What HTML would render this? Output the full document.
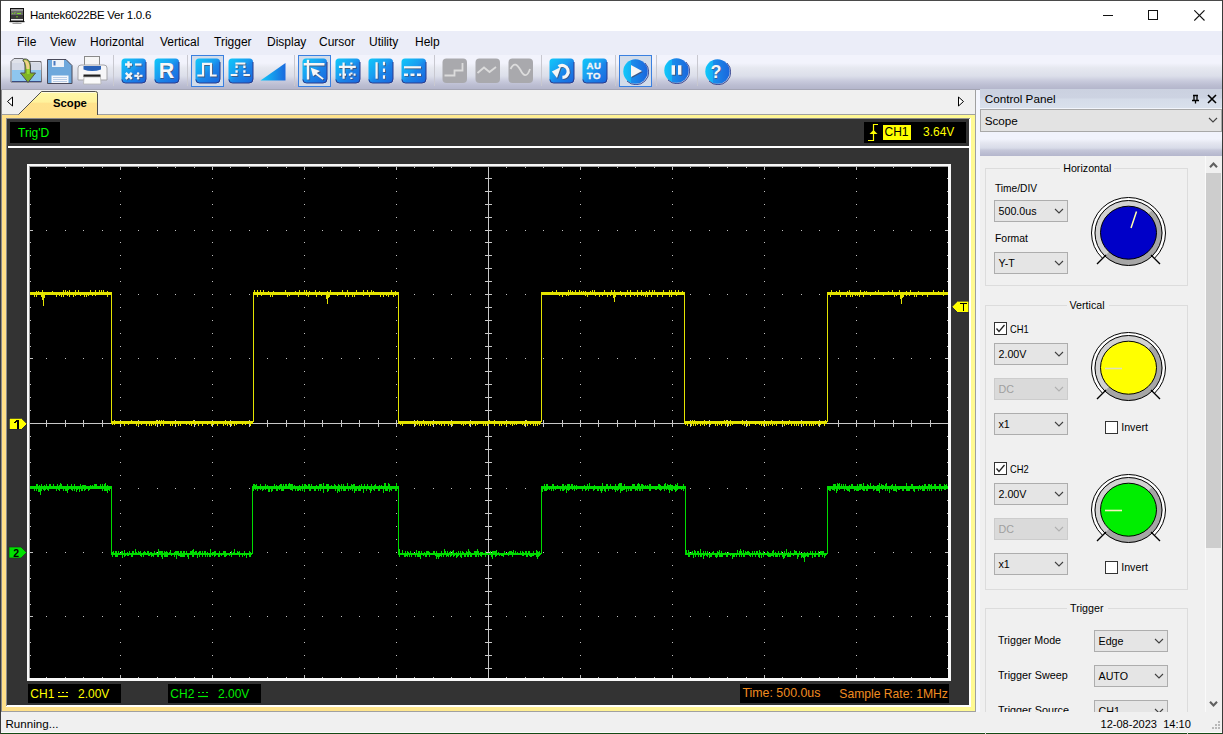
<!DOCTYPE html>
<html><head><meta charset="utf-8"><style>
html,body{margin:0;padding:0}
body{width:1223px;height:734px;position:relative;overflow:hidden;background:#f0f0f0;font-family:"Liberation Sans",sans-serif}
.t{position:absolute;white-space:pre}
svg{display:block}
</style></head><body>
<div style="position:absolute;left:0px;top:0px;width:1223px;height:31px;background:#fff;"></div>
<div style="position:absolute;left:0px;top:31px;width:1223px;height:24px;background:#ebedf8;"></div>
<div style="position:absolute;left:0px;top:55px;width:1223px;height:34px;background:linear-gradient(#f2f3fc 0px,#f2f3fc 8px,#e6e8f0 13px,#dcdfea 21px,#c8cadc 26px,#bcbed2 30px,#b4b6cc 34px);"></div>
<div style="position:absolute;left:0px;top:89px;width:1223px;height:1px;background:#a4a5b4;"></div>
<div style="position:absolute;left:0px;top:90px;width:1223px;height:622px;background:#f0f0f0;"></div>
<div style="position:absolute;left:0px;top:712px;width:1223px;height:21px;background:#f0f0f0;"></div>
<div style="position:absolute;left:0px;top:732px;width:1223px;height:1px;background:#fbfbfb;"></div>
<div style="position:absolute;left:0px;top:733px;width:1223px;height:1px;background:#154a15;"></div>
<svg style="position:absolute;left:9px;top:7px;" width="16" height="17" viewBox="0 0 16 17">
<rect x="1" y="1" width="14" height="13" fill="#111"/>
<rect x="2" y="2" width="12" height="2" fill="#9a9a9a"/>
<rect x="2" y="4" width="12" height="4" fill="#6a6a6a"/>
<rect x="2" y="8" width="12" height="4" fill="#3a3a3a"/>
<rect x="2" y="12" width="12" height="1.5" fill="#e8e8e8"/>
<path d="M3 6.5 H4 M5 6.5 L6.5 5.5 M8 6.5 H12" stroke="#7ce020" stroke-width="1"/><rect x="7.5" y="9" width="1" height="1.5" fill="#7ce020"/>
<rect x="0.5" y="14" width="15" height="1.2" fill="#111"/>
<rect x="6.5" y="15" width="3" height="1" fill="#bbb"/>
<rect x="3.5" y="16" width="9" height="0.8" fill="#888"/></svg>
<div class="t" style="left:30px;top:10.27px;font-size:11.5px;line-height:11.5px;color:#000;font-weight:400;letter-spacing:-0.25px">Hantek6022BE Ver 1.0.6</div>
<div style="position:absolute;left:1103px;top:15px;width:10px;height:1px;background:#111;"></div>
<div style="position:absolute;left:1148px;top:10px;width:8px;height:8px;border:1px solid #111"></div>
<svg style="position:absolute;left:1194px;top:10px;" width="11" height="11" viewBox="0 0 11 11"><path d="M0.3 0.3 L10.5 10.5 M10.5 0.3 L0.3 10.5" stroke="#111" stroke-width="1.1"/></svg>
<div class="t" style="left:17px;top:36.34px;font-size:12px;line-height:12px;color:#000;font-weight:400;">File</div>
<div class="t" style="left:50px;top:36.34px;font-size:12px;line-height:12px;color:#000;font-weight:400;">View</div>
<div class="t" style="left:90px;top:36.34px;font-size:12px;line-height:12px;color:#000;font-weight:400;">Horizontal</div>
<div class="t" style="left:160px;top:36.34px;font-size:12px;line-height:12px;color:#000;font-weight:400;">Vertical</div>
<div class="t" style="left:214px;top:36.34px;font-size:12px;line-height:12px;color:#000;font-weight:400;">Trigger</div>
<div class="t" style="left:267px;top:36.34px;font-size:12px;line-height:12px;color:#000;font-weight:400;">Display</div>
<div class="t" style="left:319px;top:36.34px;font-size:12px;line-height:12px;color:#000;font-weight:400;">Cursor</div>
<div class="t" style="left:369px;top:36.34px;font-size:12px;line-height:12px;color:#000;font-weight:400;">Utility</div>
<div class="t" style="left:415px;top:36.34px;font-size:12px;line-height:12px;color:#000;font-weight:400;">Help</div>
<svg width="0" height="0" style="position:absolute"><defs>
<linearGradient id="bl" x1="0" y1="0" x2="1" y2="1">
<stop offset="0" stop-color="#10c8fa"/><stop offset="0.45" stop-color="#1a9cf0"/><stop offset="0.55" stop-color="#1b86ea"/><stop offset="1" stop-color="#1a66dc"/></linearGradient>
<linearGradient id="blc" x1="0" y1="0" x2="1" y2="0">
<stop offset="0" stop-color="#10c8fa"/><stop offset="0.3" stop-color="#14b0f4"/><stop offset="0.32" stop-color="#1a8eec"/><stop offset="1" stop-color="#1a66dc"/></linearGradient>
<linearGradient id="tri" x1="0" y1="0" x2="1" y2="0">
<stop offset="0" stop-color="#12c8fa"/><stop offset="1" stop-color="#1a6ade"/></linearGradient>
<linearGradient id="yb" x1="0" y1="0" x2="1" y2="0">
<stop offset="0" stop-color="#ffe08a"/><stop offset="0.5" stop-color="#ffe890"/><stop offset="1" stop-color="#fffaa4"/></linearGradient>
</defs></svg>
<svg style="position:absolute;left:10px;top:57px;" width="33" height="27" viewBox="0 0 33 27">
<path d="M1 4.5 L4 1.5 L13 1.5 L15 4.5 L31 4.5 L31.5 25 L1 25 Z" fill="#dfe2ea" stroke="#6a6a70"/>
<rect x="2" y="6" width="29" height="7" fill="#d4d9e6"/>
<rect x="2" y="13" width="29" height="11.5" fill="#8ec6ee"/>
<path d="M2 24.5 H31" stroke="#3a4a80" stroke-width="1"/>
<path d="M13.5 2 Q20 1 20.5 9 L20.5 16 L25.5 16 L18 25.5 L10.5 16 L15 16 L15 9 Q15 5 13 3.5 Z" fill="#7fb424" stroke="#505050" stroke-width="1"/>
<path d="M14.5 3 Q19 3 19.5 9 L19.5 12 L16.5 12 L16 8 Q15.5 5 14 4 Z" fill="#f2d088"/>
<path d="M17 12 L19.5 12 L19.5 17 L17 17 Z" fill="#9ad830"/></svg>
<svg style="position:absolute;left:47px;top:58px;" width="26" height="27" viewBox="0 0 26 27">
<path d="M0.5 1.5 L19 1.5 L25 7.5 L25 25.5 L0.5 25.5 Z" fill="#6ea8dc" stroke="#4a4a5a"/>
<rect x="5" y="2" width="12" height="7" fill="#eef2f8"/>
<rect x="6.5" y="3" width="2" height="4.5" fill="#4a7ac0"/>
<rect x="4.5" y="17.5" width="17" height="7.5" fill="#f6f8fc"/>
<path d="M6 19.5 H20 M6 21.5 H20 M6 23.5 H20" stroke="#a8c0e0" stroke-width="0.8"/></svg>
<svg style="position:absolute;left:77px;top:55px;" width="31" height="30" viewBox="0 0 31 30">
<rect x="7.5" y="1.5" width="15" height="9" fill="#f6f6f6" stroke="#8a8a8a"/>
<path d="M1 13 Q1 10 4 10 L27 10 Q30 10 30 13 L30 25 L1 25 Z" fill="#f6f6f8" stroke="#a4a4a8"/>
<path d="M6.5 11 L24 11 L24 14.5 Q15 17.5 6.5 14.5 Z" fill="#2a62b8"/>
<rect x="6.5" y="19.5" width="17" height="2.5" fill="#1e1e1e"/>
<path d="M7 22 L23.5 22 L24 29 L6.5 29 Z" fill="#fafafa" stroke="#b4b4b4" stroke-width="0.8"/></svg>
<div style="position:absolute;left:113px;top:55px;width:1px;height:31px;background:#c8c8d0;"></div>
<svg style="position:absolute;left:121px;top:58px;" width="26" height="26" viewBox="0 0 26 26"><rect x="0.5" y="0.5" width="24.5" height="24.5" rx="3.5" fill="url(#bl)"/><path d="M1 21.5 Q1 25 4.5 25 L21 25 Q25 25 25 21 L25 4" fill="none" stroke="#2c3c8c" stroke-width="1"/><path d="M4 6.5 H11 M7.5 3.2 V9.8" transform="translate(0.9,0.9)" stroke="#4a4a66" stroke-opacity="0.75" stroke-width="2.4" fill="none" stroke-linecap="butt"/><path d="M4 6.5 H11 M7.5 3.2 V9.8" stroke="#f6f6f6" stroke-width="2.4" fill="none" stroke-linecap="butt"/><path d="M14 6.5 H20.5" transform="translate(0.9,0.9)" stroke="#4a4a66" stroke-opacity="0.75" stroke-width="2.2" fill="none" stroke-linecap="butt"/><path d="M14 6.5 H20.5" stroke="#f6f6f6" stroke-width="2.2" fill="none" stroke-linecap="butt"/><path d="M4.8 14.8 L10.8 20.8 M10.8 14.8 L4.8 20.8" transform="translate(0.9,0.9)" stroke="#4a4a66" stroke-opacity="0.75" stroke-width="2.4" fill="none" stroke-linecap="butt"/><path d="M4.8 14.8 L10.8 20.8 M10.8 14.8 L4.8 20.8" stroke="#f6f6f6" stroke-width="2.4" fill="none" stroke-linecap="butt"/><path d="M13.3 17.8 H21.5" transform="translate(0.9,0.9)" stroke="#4a4a66" stroke-opacity="0.75" stroke-width="2.2" fill="none" stroke-linecap="butt"/><path d="M13.3 17.8 H21.5" stroke="#f6f6f6" stroke-width="2.2" fill="none" stroke-linecap="butt"/><path d="M15.8 15.5 a1.3 1.3 0 1 0 2.6 0 a1.3 1.3 0 1 0 -2.6 0 Z M15.8 20.3 a1.3 1.3 0 1 0 2.6 0 a1.3 1.3 0 1 0 -2.6 0 Z" transform="translate(0.9,0.9)" fill="#4a4a66" fill-opacity="0.75"/><path d="M15.8 15.5 a1.3 1.3 0 1 0 2.6 0 a1.3 1.3 0 1 0 -2.6 0 Z M15.8 20.3 a1.3 1.3 0 1 0 2.6 0 a1.3 1.3 0 1 0 -2.6 0 Z" fill="#f6f6f6"/></svg>
<svg style="position:absolute;left:154px;top:58px;" width="26" height="26" viewBox="0 0 26 26"><rect x="0.5" y="0.5" width="24.5" height="24.5" rx="3.5" fill="url(#bl)"/><path d="M1 21.5 Q1 25 4.5 25 L21 25 Q25 25 25 21 L25 4" fill="none" stroke="#2c3c8c" stroke-width="1"/><text x="5.6" y="21" font-family="Liberation Sans" font-weight="700" font-size="21.5" fill="#4a4a66" fill-opacity="0.75">R</text><text x="4.7" y="20.1" font-family="Liberation Sans" font-weight="700" font-size="21.5" fill="#f8f8f8">R</text></svg>
<div style="position:absolute;left:187px;top:55px;width:1px;height:31px;background:#c8c8d0;"></div>
<div style="position:absolute;left:191px;top:55px;width:31px;height:30px;border:1px solid #3a80e0;background:#d2dcea"></div>
<svg style="position:absolute;left:195px;top:58px;" width="26" height="26" viewBox="0 0 26 26"><rect x="0.5" y="0.5" width="24.5" height="24.5" rx="3.5" fill="url(#bl)"/><path d="M1 21.5 Q1 25 4.5 25 L21 25 Q25 25 25 21 L25 4" fill="none" stroke="#2c3c8c" stroke-width="1"/><path d="M2.3 17.5 H8.1 V5.9 H16 V17.5 H21.7" transform="translate(0.9,0.9)" stroke="#4a4a66" stroke-opacity="0.75" stroke-width="2.2" fill="none" stroke-linecap="butt"/><path d="M2.3 17.5 H8.1 V5.9 H16 V17.5 H21.7" stroke="#f6f6f6" stroke-width="2.2" fill="none" stroke-linecap="butt"/></svg>
<svg style="position:absolute;left:228px;top:58px;" width="26" height="26" viewBox="0 0 26 26"><rect x="0.5" y="0.5" width="24.5" height="24.5" rx="3.5" fill="url(#bl)"/><path d="M1 21.5 Q1 25 4.5 25 L21 25 Q25 25 25 21 L25 4" fill="none" stroke="#2c3c8c" stroke-width="1"/><path d="M7.4 5.5 H17.4 M2.7 17 H9.4 M15.4 17 H21.9" transform="translate(0.9,0.9)" stroke="#4a4a66" stroke-opacity="0.75" stroke-width="2.2" fill="none" stroke-linecap="butt"/><path d="M7.4 5.5 H17.4 M2.7 17 H9.4 M15.4 17 H21.9" stroke="#f6f6f6" stroke-width="2.2" fill="none" stroke-linecap="butt"/><path d="M8.6 7.5 V15.2 M16.4 7.5 V15.2" transform="translate(0.9,0.9)" stroke="#4a4a66" stroke-opacity="0.75" stroke-width="2.3" fill="none" stroke-linecap="butt" stroke-dasharray="2.4 2.4"/><path d="M8.6 7.5 V15.2 M16.4 7.5 V15.2" stroke="#f6f6f6" stroke-width="2.3" fill="none" stroke-linecap="butt" stroke-dasharray="2.4 2.4"/></svg>
<svg style="position:absolute;left:260px;top:62px;" width="27" height="20" viewBox="0 0 27 20"><path d="M0.5 18.5 L25.5 1 L25.5 18.5 Z" fill="url(#tri)"/></svg>
<div style="position:absolute;left:294px;top:55px;width:1px;height:31px;background:#c8c8d0;"></div>
<div style="position:absolute;left:298px;top:55px;width:31px;height:30px;border:1px solid #3a80e0;background:#d2dcea"></div>
<svg style="position:absolute;left:302px;top:58px;" width="26" height="26" viewBox="0 0 26 26"><rect x="0.5" y="0.5" width="24.5" height="24.5" rx="3.5" fill="url(#bl)"/><path d="M1 21.5 Q1 25 4.5 25 L21 25 Q25 25 25 21 L25 4" fill="none" stroke="#2c3c8c" stroke-width="1"/><path d="M6 1.8 V21.4 M1.7 6.3 H22.5" transform="translate(0.9,0.9)" stroke="#4a4a66" stroke-opacity="0.75" stroke-width="2.4" fill="none" stroke-linecap="butt"/><path d="M6 1.8 V21.4 M1.7 6.3 H22.5" stroke="#f6f6f6" stroke-width="2.4" fill="none" stroke-linecap="butt"/><path d="M8.8 9.8 L18 13 L14.8 15 L21.8 20.6 L20.5 21.8 L13.4 16.5 L11 18.3 Z" transform="translate(0.9,0.9)" fill="#4a4a66" fill-opacity="0.75"/><path d="M8.8 9.8 L18 13 L14.8 15 L21.8 20.6 L20.5 21.8 L13.4 16.5 L11 18.3 Z" fill="#f6f6f6"/></svg>
<svg style="position:absolute;left:335px;top:58px;" width="26" height="26" viewBox="0 0 26 26"><rect x="0.5" y="0.5" width="24.5" height="24.5" rx="3.5" fill="url(#bl)"/><path d="M1 21.5 Q1 25 4.5 25 L21 25 Q25 25 25 21 L25 4" fill="none" stroke="#2c3c8c" stroke-width="1"/><path d="M8.6 4.6 V20.7 M3.9 8.9 H20.8" transform="translate(0.9,0.9)" stroke="#4a4a66" stroke-opacity="0.75" stroke-width="2.2" fill="none" stroke-linecap="butt"/><path d="M8.6 4.6 V20.7 M3.9 8.9 H20.8" stroke="#f6f6f6" stroke-width="2.2" fill="none" stroke-linecap="butt"/><path d="M16.4 4.5 V21" transform="translate(0.9,0.9)" stroke="#4a4a66" stroke-opacity="0.75" stroke-width="2.2" fill="none" stroke-linecap="butt" stroke-dasharray="2 3"/><path d="M16.4 4.5 V21" stroke="#f6f6f6" stroke-width="2.2" fill="none" stroke-linecap="butt" stroke-dasharray="2 3"/><path d="M4.2 16.7 H21" transform="translate(0.9,0.9)" stroke="#4a4a66" stroke-opacity="0.75" stroke-width="2.2" fill="none" stroke-linecap="butt" stroke-dasharray="2 2.8"/><path d="M4.2 16.7 H21" stroke="#f6f6f6" stroke-width="2.2" fill="none" stroke-linecap="butt" stroke-dasharray="2 2.8"/></svg>
<svg style="position:absolute;left:368px;top:58px;" width="26" height="26" viewBox="0 0 26 26"><rect x="0.5" y="0.5" width="24.5" height="24.5" rx="3.5" fill="url(#bl)"/><path d="M1 21.5 Q1 25 4.5 25 L21 25 Q25 25 25 21 L25 4" fill="none" stroke="#2c3c8c" stroke-width="1"/><path d="M8.6 4.2 V20.7" transform="translate(0.9,0.9)" stroke="#4a4a66" stroke-opacity="0.75" stroke-width="2.2" fill="none" stroke-linecap="butt"/><path d="M8.6 4.2 V20.7" stroke="#f6f6f6" stroke-width="2.2" fill="none" stroke-linecap="butt"/><path d="M16 3.8 V20.7" transform="translate(0.9,0.9)" stroke="#4a4a66" stroke-opacity="0.75" stroke-width="2.2" fill="none" stroke-linecap="butt" stroke-dasharray="3.5 3.2"/><path d="M16 3.8 V20.7" stroke="#f6f6f6" stroke-width="2.2" fill="none" stroke-linecap="butt" stroke-dasharray="3.5 3.2"/></svg>
<svg style="position:absolute;left:401px;top:58px;" width="26" height="26" viewBox="0 0 26 26"><rect x="0.5" y="0.5" width="24.5" height="24.5" rx="3.5" fill="url(#bl)"/><path d="M1 21.5 Q1 25 4.5 25 L21 25 Q25 25 25 21 L25 4" fill="none" stroke="#2c3c8c" stroke-width="1"/><path d="M3 9.3 H20" transform="translate(0.9,0.9)" stroke="#4a4a66" stroke-opacity="0.75" stroke-width="2.2" fill="none" stroke-linecap="butt"/><path d="M3 9.3 H20" stroke="#f6f6f6" stroke-width="2.2" fill="none" stroke-linecap="butt"/><path d="M3 16.7 H20.5" transform="translate(0.9,0.9)" stroke="#4a4a66" stroke-opacity="0.75" stroke-width="2.4" fill="none" stroke-linecap="butt" stroke-dasharray="4 2.5"/><path d="M3 16.7 H20.5" stroke="#f6f6f6" stroke-width="2.4" fill="none" stroke-linecap="butt" stroke-dasharray="4 2.5"/></svg>
<div style="position:absolute;left:434px;top:55px;width:1px;height:31px;background:#c8c8d0;"></div>
<svg style="position:absolute;left:442px;top:58px;" width="26" height="26" viewBox="0 0 26 26"><rect x="0.5" y="0.5" width="24.5" height="24.5" rx="4" fill="#a9a9ad"/><path d="M2.5 17.5 H12.5 V12.5 H20.5 V5" stroke="#dcdcdc" stroke-width="1.8" fill="none"/></svg>
<svg style="position:absolute;left:475px;top:58px;" width="26" height="26" viewBox="0 0 26 26"><rect x="0.5" y="0.5" width="24.5" height="24.5" rx="4" fill="#a9a9ad"/><path d="M2.5 15 L9 9.5 L14.5 14 L21 9" stroke="#dcdcdc" stroke-width="1.8" fill="none"/></svg>
<svg style="position:absolute;left:508px;top:58px;" width="26" height="26" viewBox="0 0 26 26"><rect x="0.5" y="0.5" width="24.5" height="24.5" rx="4" fill="#a9a9ad"/><path d="M2.5 11 C6 4 9 6 12.5 12 C15.5 18 19 20 22 11" stroke="#dcdcdc" stroke-width="1.8" fill="none"/></svg>
<div style="position:absolute;left:541px;top:55px;width:1px;height:31px;background:#c8c8d0;"></div>
<svg style="position:absolute;left:549px;top:58px;" width="26" height="26" viewBox="0 0 26 26"><rect x="0.5" y="0.5" width="24.5" height="24.5" rx="3.5" fill="url(#bl)"/><path d="M1 21.5 Q1 25 4.5 25 L21 25 Q25 25 25 21 L25 4" fill="none" stroke="#2c3c8c" stroke-width="1"/><path d="M9.6 8.6 A6 6 0 1 1 13.4 19.4" transform="translate(0.9,0.9)" stroke="#4a4a66" stroke-opacity="0.75" stroke-width="3.2" fill="none" stroke-linecap="butt"/><path d="M9.6 8.6 A6 6 0 1 1 13.4 19.4" stroke="#f6f6f6" stroke-width="3.2" fill="none" stroke-linecap="butt"/><path d="M2.8 13.4 L11.8 9 L8 20 Z" transform="translate(0.9,0.9)" fill="#4a4a66" fill-opacity="0.75"/><path d="M2.8 13.4 L11.8 9 L8 20 Z" fill="#f6f6f6"/></svg>
<svg style="position:absolute;left:582px;top:58px;" width="26" height="26" viewBox="0 0 26 26"><rect x="0.5" y="0.5" width="24.5" height="24.5" rx="3.5" fill="url(#bl)"/><path d="M1 21.5 Q1 25 4.5 25 L21 25 Q25 25 25 21 L25 4" fill="none" stroke="#2c3c8c" stroke-width="1"/><g font-family="Liberation Sans" font-weight="700" font-size="9.6" fill="#f6f6f6" stroke="#f6f6f6" stroke-width="0.35" letter-spacing="0.6"><text x="4.4" y="10.6">AU</text><text x="4.8" y="20.8">TO</text></g></svg>
<div style="position:absolute;left:615px;top:55px;width:1px;height:31px;background:#c8c8d0;"></div>
<div style="position:absolute;left:619px;top:55px;width:31px;height:30px;border:1px solid #3a80e0;background:#d2dcea"></div>
<svg style="position:absolute;left:623px;top:59px;" width="26" height="26" viewBox="0 0 26 26"><circle cx="12.5" cy="12.5" r="12.2" fill="url(#blc)"/><path d="M22 4 A12.2 12.2 0 0 1 4 22" fill="none" stroke="#2c3c8c" stroke-width="0.9"/><path d="M8 6 L19 12 L8 18 Z" transform="translate(0.9,0.9)" fill="#4a4a66" fill-opacity="0.75"/><path d="M8 6 L19 12 L8 18 Z" fill="#f6f6f6"/></svg>
<div style="position:absolute;left:656px;top:55px;width:1px;height:31px;background:#c8c8d0;"></div>
<svg style="position:absolute;left:664px;top:58px;" width="26" height="26" viewBox="0 0 26 26"><circle cx="12.5" cy="12.5" r="12.2" fill="url(#blc)"/><path d="M22 4 A12.2 12.2 0 0 1 4 22" fill="none" stroke="#2c3c8c" stroke-width="0.9"/><path d="M7.6 7.2 h3.4 v9.6 h-3.4 Z M14 7.2 h3.4 v9.6 h-3.4 Z" transform="translate(0.9,0.9)" fill="#4a4a66" fill-opacity="0.75"/><path d="M7.6 7.2 h3.4 v9.6 h-3.4 Z M14 7.2 h3.4 v9.6 h-3.4 Z" fill="#f6f6f6"/></svg>
<div style="position:absolute;left:697px;top:55px;width:1px;height:31px;background:#c8c8d0;"></div>
<svg style="position:absolute;left:705px;top:59px;" width="26" height="26" viewBox="0 0 26 26"><circle cx="12.5" cy="12.5" r="12.2" fill="url(#blc)"/><path d="M22 4 A12.2 12.2 0 0 1 4 22" fill="none" stroke="#2c3c8c" stroke-width="0.9"/><text x="6.2" y="20" font-family="Liberation Sans" font-weight="700" font-size="18" fill="#4a4a66" fill-opacity="0.6">?</text><text x="5.6" y="19.4" font-family="Liberation Sans" font-weight="700" font-size="18" fill="#f6f6f6">?</text></svg>
<div style="position:absolute;left:1px;top:114px;width:975px;height:1px;background:#a0a0a0;"></div>
<svg style="position:absolute;left:6px;top:96px;" width="8" height="12" viewBox="0 0 8 12"><path d="M6.5 1 L6.5 10 L1.5 5.5 Z" fill="#fff" stroke="#000" stroke-width="1"/></svg>
<svg style="position:absolute;left:957px;top:96px;" width="8" height="12" viewBox="0 0 8 12"><path d="M1.5 1 L1.5 10 L6.5 5.5 Z" fill="#fff" stroke="#000" stroke-width="1"/></svg>
<div style="position:absolute;left:975px;top:90px;width:1px;height:622px;background:#a0a0a0;"></div>
<svg style="position:absolute;left:18px;top:90px;" width="81" height="26" viewBox="0 0 81 26"><defs><linearGradient id="tabg" x1="0" y1="0" x2="0" y2="1"><stop offset="0" stop-color="#fff8a8"/><stop offset="0.45" stop-color="#fff29c"/><stop offset="0.5" stop-color="#ffe28c"/><stop offset="1" stop-color="#ffe08a"/></linearGradient></defs>
<path d="M0.5 25 L23.5 1.5 L77.5 1.5 Q79.5 1.5 79.5 3.5 L79.5 25 Z" fill="url(#tabg)"/><path d="M24 2.5 H77.5" stroke="#fffce0" stroke-width="1"/>
<path d="M0.5 24.5 L23.5 1.5 L77.5 1.5 Q79.5 1.5 79.5 3.5 L79.5 25" fill="none" stroke="#505050" stroke-width="1"/></svg>
<div class="t" style="left:53px;top:98.23px;font-size:11.3px;line-height:11.3px;color:#000;font-weight:700;">Scope</div>
<div style="position:absolute;left:1px;top:115px;width:975px;height:597px;background:linear-gradient(90deg,#ffe08a 0%,#ffe38b 35%,#fff294 62%,#fffa94 100%);"></div>
<div style="position:absolute;left:1px;top:711px;width:975px;height:1px;background:#a0a0a0;"></div>
<div style="position:absolute;left:975px;top:115px;width:1px;height:597px;background:#a0a0a0;"></div>
<div style="position:absolute;left:6px;top:118px;width:965px;height:589px;background:#ffffff;"></div>
<div style="position:absolute;left:6px;top:118px;width:964px;height:1px;background:#8c8c8c;"></div>
<div style="position:absolute;left:6px;top:118px;width:1px;height:588px;background:#8c8c8c;"></div>
<div style="position:absolute;left:7px;top:119px;width:962px;height:586px;background:#333333;"></div>
<div style="position:absolute;left:10px;top:122px;width:50px;height:21px;background:#000;"></div>
<div class="t" style="left:18px;top:126.84px;font-size:12px;line-height:12px;color:#00ff00;font-weight:400;">Trig'D</div>
<div style="position:absolute;left:864px;top:122px;width:102px;height:21px;background:#000;"></div>
<svg style="position:absolute;left:866px;top:123px;" width="14" height="20" viewBox="0 0 14 20"><path d="M2 17.5 H7.5 V1.5 H12" stroke="#ffff00" stroke-width="1.2" fill="none"/><path d="M3.5 11 L7.5 7 L11.5 11 Z" fill="#ffff00"/></svg>
<div style="position:absolute;left:883px;top:125px;width:28px;height:15px;background:#ffff00;"></div>
<div class="t" style="left:884.5px;top:126.34px;font-size:12px;line-height:12px;color:#000;font-weight:400;">CH1</div>
<div class="t" style="left:923px;top:126.34px;font-size:12px;line-height:12px;color:#ffff00;font-weight:400;">3.64V</div>
<div style="position:absolute;left:8px;top:146px;width:962px;height:2px;background:#ffffff;"></div>
<div style="position:absolute;left:27px;top:164px;width:924px;height:517px;background:#f8f8f8;"></div>
<div style="position:absolute;left:29px;top:166px;width:919px;height:512px;background:#a0a0a0;"></div>
<div style="position:absolute;left:30px;top:167px;width:918px;height:511px;background:#000;"></div>
<svg style="position:absolute;left:0;top:0" width="1223" height="734" shape-rendering="crispEdges"><rect x="120" y="178" width="1" height="1" fill="#c0c0c0"/><rect x="120" y="191" width="1" height="1" fill="#c0c0c0"/><rect x="120" y="204" width="1" height="1" fill="#c0c0c0"/><rect x="120" y="217" width="1" height="1" fill="#c0c0c0"/><rect x="120" y="230" width="1" height="1" fill="#c0c0c0"/><rect x="120" y="242" width="1" height="1" fill="#c0c0c0"/><rect x="120" y="255" width="1" height="1" fill="#c0c0c0"/><rect x="120" y="268" width="1" height="1" fill="#c0c0c0"/><rect x="120" y="281" width="1" height="1" fill="#c0c0c0"/><rect x="120" y="294" width="1" height="1" fill="#c0c0c0"/><rect x="120" y="307" width="1" height="1" fill="#c0c0c0"/><rect x="120" y="320" width="1" height="1" fill="#c0c0c0"/><rect x="120" y="333" width="1" height="1" fill="#c0c0c0"/><rect x="120" y="346" width="1" height="1" fill="#c0c0c0"/><rect x="120" y="358" width="1" height="1" fill="#c0c0c0"/><rect x="120" y="371" width="1" height="1" fill="#c0c0c0"/><rect x="120" y="384" width="1" height="1" fill="#c0c0c0"/><rect x="120" y="397" width="1" height="1" fill="#c0c0c0"/><rect x="120" y="410" width="1" height="1" fill="#c0c0c0"/><rect x="120" y="423" width="1" height="1" fill="#c0c0c0"/><rect x="120" y="436" width="1" height="1" fill="#c0c0c0"/><rect x="120" y="449" width="1" height="1" fill="#c0c0c0"/><rect x="120" y="462" width="1" height="1" fill="#c0c0c0"/><rect x="120" y="475" width="1" height="1" fill="#c0c0c0"/><rect x="120" y="488" width="1" height="1" fill="#c0c0c0"/><rect x="120" y="500" width="1" height="1" fill="#c0c0c0"/><rect x="120" y="513" width="1" height="1" fill="#c0c0c0"/><rect x="120" y="526" width="1" height="1" fill="#c0c0c0"/><rect x="120" y="539" width="1" height="1" fill="#c0c0c0"/><rect x="120" y="552" width="1" height="1" fill="#c0c0c0"/><rect x="120" y="565" width="1" height="1" fill="#c0c0c0"/><rect x="120" y="578" width="1" height="1" fill="#c0c0c0"/><rect x="120" y="591" width="1" height="1" fill="#c0c0c0"/><rect x="120" y="604" width="1" height="1" fill="#c0c0c0"/><rect x="120" y="616" width="1" height="1" fill="#c0c0c0"/><rect x="120" y="629" width="1" height="1" fill="#c0c0c0"/><rect x="120" y="642" width="1" height="1" fill="#c0c0c0"/><rect x="120" y="655" width="1" height="1" fill="#c0c0c0"/><rect x="120" y="668" width="1" height="1" fill="#c0c0c0"/><rect x="212" y="178" width="1" height="1" fill="#c0c0c0"/><rect x="212" y="191" width="1" height="1" fill="#c0c0c0"/><rect x="212" y="204" width="1" height="1" fill="#c0c0c0"/><rect x="212" y="217" width="1" height="1" fill="#c0c0c0"/><rect x="212" y="230" width="1" height="1" fill="#c0c0c0"/><rect x="212" y="242" width="1" height="1" fill="#c0c0c0"/><rect x="212" y="255" width="1" height="1" fill="#c0c0c0"/><rect x="212" y="268" width="1" height="1" fill="#c0c0c0"/><rect x="212" y="281" width="1" height="1" fill="#c0c0c0"/><rect x="212" y="294" width="1" height="1" fill="#c0c0c0"/><rect x="212" y="307" width="1" height="1" fill="#c0c0c0"/><rect x="212" y="320" width="1" height="1" fill="#c0c0c0"/><rect x="212" y="333" width="1" height="1" fill="#c0c0c0"/><rect x="212" y="346" width="1" height="1" fill="#c0c0c0"/><rect x="212" y="358" width="1" height="1" fill="#c0c0c0"/><rect x="212" y="371" width="1" height="1" fill="#c0c0c0"/><rect x="212" y="384" width="1" height="1" fill="#c0c0c0"/><rect x="212" y="397" width="1" height="1" fill="#c0c0c0"/><rect x="212" y="410" width="1" height="1" fill="#c0c0c0"/><rect x="212" y="423" width="1" height="1" fill="#c0c0c0"/><rect x="212" y="436" width="1" height="1" fill="#c0c0c0"/><rect x="212" y="449" width="1" height="1" fill="#c0c0c0"/><rect x="212" y="462" width="1" height="1" fill="#c0c0c0"/><rect x="212" y="475" width="1" height="1" fill="#c0c0c0"/><rect x="212" y="488" width="1" height="1" fill="#c0c0c0"/><rect x="212" y="500" width="1" height="1" fill="#c0c0c0"/><rect x="212" y="513" width="1" height="1" fill="#c0c0c0"/><rect x="212" y="526" width="1" height="1" fill="#c0c0c0"/><rect x="212" y="539" width="1" height="1" fill="#c0c0c0"/><rect x="212" y="552" width="1" height="1" fill="#c0c0c0"/><rect x="212" y="565" width="1" height="1" fill="#c0c0c0"/><rect x="212" y="578" width="1" height="1" fill="#c0c0c0"/><rect x="212" y="591" width="1" height="1" fill="#c0c0c0"/><rect x="212" y="604" width="1" height="1" fill="#c0c0c0"/><rect x="212" y="616" width="1" height="1" fill="#c0c0c0"/><rect x="212" y="629" width="1" height="1" fill="#c0c0c0"/><rect x="212" y="642" width="1" height="1" fill="#c0c0c0"/><rect x="212" y="655" width="1" height="1" fill="#c0c0c0"/><rect x="212" y="668" width="1" height="1" fill="#c0c0c0"/><rect x="304" y="178" width="1" height="1" fill="#c0c0c0"/><rect x="304" y="191" width="1" height="1" fill="#c0c0c0"/><rect x="304" y="204" width="1" height="1" fill="#c0c0c0"/><rect x="304" y="217" width="1" height="1" fill="#c0c0c0"/><rect x="304" y="230" width="1" height="1" fill="#c0c0c0"/><rect x="304" y="242" width="1" height="1" fill="#c0c0c0"/><rect x="304" y="255" width="1" height="1" fill="#c0c0c0"/><rect x="304" y="268" width="1" height="1" fill="#c0c0c0"/><rect x="304" y="281" width="1" height="1" fill="#c0c0c0"/><rect x="304" y="294" width="1" height="1" fill="#c0c0c0"/><rect x="304" y="307" width="1" height="1" fill="#c0c0c0"/><rect x="304" y="320" width="1" height="1" fill="#c0c0c0"/><rect x="304" y="333" width="1" height="1" fill="#c0c0c0"/><rect x="304" y="346" width="1" height="1" fill="#c0c0c0"/><rect x="304" y="358" width="1" height="1" fill="#c0c0c0"/><rect x="304" y="371" width="1" height="1" fill="#c0c0c0"/><rect x="304" y="384" width="1" height="1" fill="#c0c0c0"/><rect x="304" y="397" width="1" height="1" fill="#c0c0c0"/><rect x="304" y="410" width="1" height="1" fill="#c0c0c0"/><rect x="304" y="423" width="1" height="1" fill="#c0c0c0"/><rect x="304" y="436" width="1" height="1" fill="#c0c0c0"/><rect x="304" y="449" width="1" height="1" fill="#c0c0c0"/><rect x="304" y="462" width="1" height="1" fill="#c0c0c0"/><rect x="304" y="475" width="1" height="1" fill="#c0c0c0"/><rect x="304" y="488" width="1" height="1" fill="#c0c0c0"/><rect x="304" y="500" width="1" height="1" fill="#c0c0c0"/><rect x="304" y="513" width="1" height="1" fill="#c0c0c0"/><rect x="304" y="526" width="1" height="1" fill="#c0c0c0"/><rect x="304" y="539" width="1" height="1" fill="#c0c0c0"/><rect x="304" y="552" width="1" height="1" fill="#c0c0c0"/><rect x="304" y="565" width="1" height="1" fill="#c0c0c0"/><rect x="304" y="578" width="1" height="1" fill="#c0c0c0"/><rect x="304" y="591" width="1" height="1" fill="#c0c0c0"/><rect x="304" y="604" width="1" height="1" fill="#c0c0c0"/><rect x="304" y="616" width="1" height="1" fill="#c0c0c0"/><rect x="304" y="629" width="1" height="1" fill="#c0c0c0"/><rect x="304" y="642" width="1" height="1" fill="#c0c0c0"/><rect x="304" y="655" width="1" height="1" fill="#c0c0c0"/><rect x="304" y="668" width="1" height="1" fill="#c0c0c0"/><rect x="396" y="178" width="1" height="1" fill="#c0c0c0"/><rect x="396" y="191" width="1" height="1" fill="#c0c0c0"/><rect x="396" y="204" width="1" height="1" fill="#c0c0c0"/><rect x="396" y="217" width="1" height="1" fill="#c0c0c0"/><rect x="396" y="230" width="1" height="1" fill="#c0c0c0"/><rect x="396" y="242" width="1" height="1" fill="#c0c0c0"/><rect x="396" y="255" width="1" height="1" fill="#c0c0c0"/><rect x="396" y="268" width="1" height="1" fill="#c0c0c0"/><rect x="396" y="281" width="1" height="1" fill="#c0c0c0"/><rect x="396" y="294" width="1" height="1" fill="#c0c0c0"/><rect x="396" y="307" width="1" height="1" fill="#c0c0c0"/><rect x="396" y="320" width="1" height="1" fill="#c0c0c0"/><rect x="396" y="333" width="1" height="1" fill="#c0c0c0"/><rect x="396" y="346" width="1" height="1" fill="#c0c0c0"/><rect x="396" y="358" width="1" height="1" fill="#c0c0c0"/><rect x="396" y="371" width="1" height="1" fill="#c0c0c0"/><rect x="396" y="384" width="1" height="1" fill="#c0c0c0"/><rect x="396" y="397" width="1" height="1" fill="#c0c0c0"/><rect x="396" y="410" width="1" height="1" fill="#c0c0c0"/><rect x="396" y="423" width="1" height="1" fill="#c0c0c0"/><rect x="396" y="436" width="1" height="1" fill="#c0c0c0"/><rect x="396" y="449" width="1" height="1" fill="#c0c0c0"/><rect x="396" y="462" width="1" height="1" fill="#c0c0c0"/><rect x="396" y="475" width="1" height="1" fill="#c0c0c0"/><rect x="396" y="488" width="1" height="1" fill="#c0c0c0"/><rect x="396" y="500" width="1" height="1" fill="#c0c0c0"/><rect x="396" y="513" width="1" height="1" fill="#c0c0c0"/><rect x="396" y="526" width="1" height="1" fill="#c0c0c0"/><rect x="396" y="539" width="1" height="1" fill="#c0c0c0"/><rect x="396" y="552" width="1" height="1" fill="#c0c0c0"/><rect x="396" y="565" width="1" height="1" fill="#c0c0c0"/><rect x="396" y="578" width="1" height="1" fill="#c0c0c0"/><rect x="396" y="591" width="1" height="1" fill="#c0c0c0"/><rect x="396" y="604" width="1" height="1" fill="#c0c0c0"/><rect x="396" y="616" width="1" height="1" fill="#c0c0c0"/><rect x="396" y="629" width="1" height="1" fill="#c0c0c0"/><rect x="396" y="642" width="1" height="1" fill="#c0c0c0"/><rect x="396" y="655" width="1" height="1" fill="#c0c0c0"/><rect x="396" y="668" width="1" height="1" fill="#c0c0c0"/><rect x="580" y="178" width="1" height="1" fill="#c0c0c0"/><rect x="580" y="191" width="1" height="1" fill="#c0c0c0"/><rect x="580" y="204" width="1" height="1" fill="#c0c0c0"/><rect x="580" y="217" width="1" height="1" fill="#c0c0c0"/><rect x="580" y="230" width="1" height="1" fill="#c0c0c0"/><rect x="580" y="242" width="1" height="1" fill="#c0c0c0"/><rect x="580" y="255" width="1" height="1" fill="#c0c0c0"/><rect x="580" y="268" width="1" height="1" fill="#c0c0c0"/><rect x="580" y="281" width="1" height="1" fill="#c0c0c0"/><rect x="580" y="294" width="1" height="1" fill="#c0c0c0"/><rect x="580" y="307" width="1" height="1" fill="#c0c0c0"/><rect x="580" y="320" width="1" height="1" fill="#c0c0c0"/><rect x="580" y="333" width="1" height="1" fill="#c0c0c0"/><rect x="580" y="346" width="1" height="1" fill="#c0c0c0"/><rect x="580" y="358" width="1" height="1" fill="#c0c0c0"/><rect x="580" y="371" width="1" height="1" fill="#c0c0c0"/><rect x="580" y="384" width="1" height="1" fill="#c0c0c0"/><rect x="580" y="397" width="1" height="1" fill="#c0c0c0"/><rect x="580" y="410" width="1" height="1" fill="#c0c0c0"/><rect x="580" y="423" width="1" height="1" fill="#c0c0c0"/><rect x="580" y="436" width="1" height="1" fill="#c0c0c0"/><rect x="580" y="449" width="1" height="1" fill="#c0c0c0"/><rect x="580" y="462" width="1" height="1" fill="#c0c0c0"/><rect x="580" y="475" width="1" height="1" fill="#c0c0c0"/><rect x="580" y="488" width="1" height="1" fill="#c0c0c0"/><rect x="580" y="500" width="1" height="1" fill="#c0c0c0"/><rect x="580" y="513" width="1" height="1" fill="#c0c0c0"/><rect x="580" y="526" width="1" height="1" fill="#c0c0c0"/><rect x="580" y="539" width="1" height="1" fill="#c0c0c0"/><rect x="580" y="552" width="1" height="1" fill="#c0c0c0"/><rect x="580" y="565" width="1" height="1" fill="#c0c0c0"/><rect x="580" y="578" width="1" height="1" fill="#c0c0c0"/><rect x="580" y="591" width="1" height="1" fill="#c0c0c0"/><rect x="580" y="604" width="1" height="1" fill="#c0c0c0"/><rect x="580" y="616" width="1" height="1" fill="#c0c0c0"/><rect x="580" y="629" width="1" height="1" fill="#c0c0c0"/><rect x="580" y="642" width="1" height="1" fill="#c0c0c0"/><rect x="580" y="655" width="1" height="1" fill="#c0c0c0"/><rect x="580" y="668" width="1" height="1" fill="#c0c0c0"/><rect x="672" y="178" width="1" height="1" fill="#c0c0c0"/><rect x="672" y="191" width="1" height="1" fill="#c0c0c0"/><rect x="672" y="204" width="1" height="1" fill="#c0c0c0"/><rect x="672" y="217" width="1" height="1" fill="#c0c0c0"/><rect x="672" y="230" width="1" height="1" fill="#c0c0c0"/><rect x="672" y="242" width="1" height="1" fill="#c0c0c0"/><rect x="672" y="255" width="1" height="1" fill="#c0c0c0"/><rect x="672" y="268" width="1" height="1" fill="#c0c0c0"/><rect x="672" y="281" width="1" height="1" fill="#c0c0c0"/><rect x="672" y="294" width="1" height="1" fill="#c0c0c0"/><rect x="672" y="307" width="1" height="1" fill="#c0c0c0"/><rect x="672" y="320" width="1" height="1" fill="#c0c0c0"/><rect x="672" y="333" width="1" height="1" fill="#c0c0c0"/><rect x="672" y="346" width="1" height="1" fill="#c0c0c0"/><rect x="672" y="358" width="1" height="1" fill="#c0c0c0"/><rect x="672" y="371" width="1" height="1" fill="#c0c0c0"/><rect x="672" y="384" width="1" height="1" fill="#c0c0c0"/><rect x="672" y="397" width="1" height="1" fill="#c0c0c0"/><rect x="672" y="410" width="1" height="1" fill="#c0c0c0"/><rect x="672" y="423" width="1" height="1" fill="#c0c0c0"/><rect x="672" y="436" width="1" height="1" fill="#c0c0c0"/><rect x="672" y="449" width="1" height="1" fill="#c0c0c0"/><rect x="672" y="462" width="1" height="1" fill="#c0c0c0"/><rect x="672" y="475" width="1" height="1" fill="#c0c0c0"/><rect x="672" y="488" width="1" height="1" fill="#c0c0c0"/><rect x="672" y="500" width="1" height="1" fill="#c0c0c0"/><rect x="672" y="513" width="1" height="1" fill="#c0c0c0"/><rect x="672" y="526" width="1" height="1" fill="#c0c0c0"/><rect x="672" y="539" width="1" height="1" fill="#c0c0c0"/><rect x="672" y="552" width="1" height="1" fill="#c0c0c0"/><rect x="672" y="565" width="1" height="1" fill="#c0c0c0"/><rect x="672" y="578" width="1" height="1" fill="#c0c0c0"/><rect x="672" y="591" width="1" height="1" fill="#c0c0c0"/><rect x="672" y="604" width="1" height="1" fill="#c0c0c0"/><rect x="672" y="616" width="1" height="1" fill="#c0c0c0"/><rect x="672" y="629" width="1" height="1" fill="#c0c0c0"/><rect x="672" y="642" width="1" height="1" fill="#c0c0c0"/><rect x="672" y="655" width="1" height="1" fill="#c0c0c0"/><rect x="672" y="668" width="1" height="1" fill="#c0c0c0"/><rect x="764" y="178" width="1" height="1" fill="#c0c0c0"/><rect x="764" y="191" width="1" height="1" fill="#c0c0c0"/><rect x="764" y="204" width="1" height="1" fill="#c0c0c0"/><rect x="764" y="217" width="1" height="1" fill="#c0c0c0"/><rect x="764" y="230" width="1" height="1" fill="#c0c0c0"/><rect x="764" y="242" width="1" height="1" fill="#c0c0c0"/><rect x="764" y="255" width="1" height="1" fill="#c0c0c0"/><rect x="764" y="268" width="1" height="1" fill="#c0c0c0"/><rect x="764" y="281" width="1" height="1" fill="#c0c0c0"/><rect x="764" y="294" width="1" height="1" fill="#c0c0c0"/><rect x="764" y="307" width="1" height="1" fill="#c0c0c0"/><rect x="764" y="320" width="1" height="1" fill="#c0c0c0"/><rect x="764" y="333" width="1" height="1" fill="#c0c0c0"/><rect x="764" y="346" width="1" height="1" fill="#c0c0c0"/><rect x="764" y="358" width="1" height="1" fill="#c0c0c0"/><rect x="764" y="371" width="1" height="1" fill="#c0c0c0"/><rect x="764" y="384" width="1" height="1" fill="#c0c0c0"/><rect x="764" y="397" width="1" height="1" fill="#c0c0c0"/><rect x="764" y="410" width="1" height="1" fill="#c0c0c0"/><rect x="764" y="423" width="1" height="1" fill="#c0c0c0"/><rect x="764" y="436" width="1" height="1" fill="#c0c0c0"/><rect x="764" y="449" width="1" height="1" fill="#c0c0c0"/><rect x="764" y="462" width="1" height="1" fill="#c0c0c0"/><rect x="764" y="475" width="1" height="1" fill="#c0c0c0"/><rect x="764" y="488" width="1" height="1" fill="#c0c0c0"/><rect x="764" y="500" width="1" height="1" fill="#c0c0c0"/><rect x="764" y="513" width="1" height="1" fill="#c0c0c0"/><rect x="764" y="526" width="1" height="1" fill="#c0c0c0"/><rect x="764" y="539" width="1" height="1" fill="#c0c0c0"/><rect x="764" y="552" width="1" height="1" fill="#c0c0c0"/><rect x="764" y="565" width="1" height="1" fill="#c0c0c0"/><rect x="764" y="578" width="1" height="1" fill="#c0c0c0"/><rect x="764" y="591" width="1" height="1" fill="#c0c0c0"/><rect x="764" y="604" width="1" height="1" fill="#c0c0c0"/><rect x="764" y="616" width="1" height="1" fill="#c0c0c0"/><rect x="764" y="629" width="1" height="1" fill="#c0c0c0"/><rect x="764" y="642" width="1" height="1" fill="#c0c0c0"/><rect x="764" y="655" width="1" height="1" fill="#c0c0c0"/><rect x="764" y="668" width="1" height="1" fill="#c0c0c0"/><rect x="856" y="178" width="1" height="1" fill="#c0c0c0"/><rect x="856" y="191" width="1" height="1" fill="#c0c0c0"/><rect x="856" y="204" width="1" height="1" fill="#c0c0c0"/><rect x="856" y="217" width="1" height="1" fill="#c0c0c0"/><rect x="856" y="230" width="1" height="1" fill="#c0c0c0"/><rect x="856" y="242" width="1" height="1" fill="#c0c0c0"/><rect x="856" y="255" width="1" height="1" fill="#c0c0c0"/><rect x="856" y="268" width="1" height="1" fill="#c0c0c0"/><rect x="856" y="281" width="1" height="1" fill="#c0c0c0"/><rect x="856" y="294" width="1" height="1" fill="#c0c0c0"/><rect x="856" y="307" width="1" height="1" fill="#c0c0c0"/><rect x="856" y="320" width="1" height="1" fill="#c0c0c0"/><rect x="856" y="333" width="1" height="1" fill="#c0c0c0"/><rect x="856" y="346" width="1" height="1" fill="#c0c0c0"/><rect x="856" y="358" width="1" height="1" fill="#c0c0c0"/><rect x="856" y="371" width="1" height="1" fill="#c0c0c0"/><rect x="856" y="384" width="1" height="1" fill="#c0c0c0"/><rect x="856" y="397" width="1" height="1" fill="#c0c0c0"/><rect x="856" y="410" width="1" height="1" fill="#c0c0c0"/><rect x="856" y="423" width="1" height="1" fill="#c0c0c0"/><rect x="856" y="436" width="1" height="1" fill="#c0c0c0"/><rect x="856" y="449" width="1" height="1" fill="#c0c0c0"/><rect x="856" y="462" width="1" height="1" fill="#c0c0c0"/><rect x="856" y="475" width="1" height="1" fill="#c0c0c0"/><rect x="856" y="488" width="1" height="1" fill="#c0c0c0"/><rect x="856" y="500" width="1" height="1" fill="#c0c0c0"/><rect x="856" y="513" width="1" height="1" fill="#c0c0c0"/><rect x="856" y="526" width="1" height="1" fill="#c0c0c0"/><rect x="856" y="539" width="1" height="1" fill="#c0c0c0"/><rect x="856" y="552" width="1" height="1" fill="#c0c0c0"/><rect x="856" y="565" width="1" height="1" fill="#c0c0c0"/><rect x="856" y="578" width="1" height="1" fill="#c0c0c0"/><rect x="856" y="591" width="1" height="1" fill="#c0c0c0"/><rect x="856" y="604" width="1" height="1" fill="#c0c0c0"/><rect x="856" y="616" width="1" height="1" fill="#c0c0c0"/><rect x="856" y="629" width="1" height="1" fill="#c0c0c0"/><rect x="856" y="642" width="1" height="1" fill="#c0c0c0"/><rect x="856" y="655" width="1" height="1" fill="#c0c0c0"/><rect x="856" y="668" width="1" height="1" fill="#c0c0c0"/><rect x="46" y="230" width="1" height="1" fill="#c0c0c0"/><rect x="65" y="230" width="1" height="1" fill="#c0c0c0"/><rect x="83" y="230" width="1" height="1" fill="#c0c0c0"/><rect x="102" y="230" width="1" height="1" fill="#c0c0c0"/><rect x="120" y="230" width="1" height="1" fill="#c0c0c0"/><rect x="138" y="230" width="1" height="1" fill="#c0c0c0"/><rect x="157" y="230" width="1" height="1" fill="#c0c0c0"/><rect x="175" y="230" width="1" height="1" fill="#c0c0c0"/><rect x="194" y="230" width="1" height="1" fill="#c0c0c0"/><rect x="212" y="230" width="1" height="1" fill="#c0c0c0"/><rect x="230" y="230" width="1" height="1" fill="#c0c0c0"/><rect x="249" y="230" width="1" height="1" fill="#c0c0c0"/><rect x="267" y="230" width="1" height="1" fill="#c0c0c0"/><rect x="286" y="230" width="1" height="1" fill="#c0c0c0"/><rect x="304" y="230" width="1" height="1" fill="#c0c0c0"/><rect x="322" y="230" width="1" height="1" fill="#c0c0c0"/><rect x="341" y="230" width="1" height="1" fill="#c0c0c0"/><rect x="359" y="230" width="1" height="1" fill="#c0c0c0"/><rect x="378" y="230" width="1" height="1" fill="#c0c0c0"/><rect x="396" y="230" width="1" height="1" fill="#c0c0c0"/><rect x="414" y="230" width="1" height="1" fill="#c0c0c0"/><rect x="433" y="230" width="1" height="1" fill="#c0c0c0"/><rect x="451" y="230" width="1" height="1" fill="#c0c0c0"/><rect x="470" y="230" width="1" height="1" fill="#c0c0c0"/><rect x="488" y="230" width="1" height="1" fill="#c0c0c0"/><rect x="506" y="230" width="1" height="1" fill="#c0c0c0"/><rect x="525" y="230" width="1" height="1" fill="#c0c0c0"/><rect x="543" y="230" width="1" height="1" fill="#c0c0c0"/><rect x="562" y="230" width="1" height="1" fill="#c0c0c0"/><rect x="580" y="230" width="1" height="1" fill="#c0c0c0"/><rect x="598" y="230" width="1" height="1" fill="#c0c0c0"/><rect x="617" y="230" width="1" height="1" fill="#c0c0c0"/><rect x="635" y="230" width="1" height="1" fill="#c0c0c0"/><rect x="654" y="230" width="1" height="1" fill="#c0c0c0"/><rect x="672" y="230" width="1" height="1" fill="#c0c0c0"/><rect x="690" y="230" width="1" height="1" fill="#c0c0c0"/><rect x="709" y="230" width="1" height="1" fill="#c0c0c0"/><rect x="727" y="230" width="1" height="1" fill="#c0c0c0"/><rect x="746" y="230" width="1" height="1" fill="#c0c0c0"/><rect x="764" y="230" width="1" height="1" fill="#c0c0c0"/><rect x="782" y="230" width="1" height="1" fill="#c0c0c0"/><rect x="801" y="230" width="1" height="1" fill="#c0c0c0"/><rect x="819" y="230" width="1" height="1" fill="#c0c0c0"/><rect x="838" y="230" width="1" height="1" fill="#c0c0c0"/><rect x="856" y="230" width="1" height="1" fill="#c0c0c0"/><rect x="874" y="230" width="1" height="1" fill="#c0c0c0"/><rect x="893" y="230" width="1" height="1" fill="#c0c0c0"/><rect x="911" y="230" width="1" height="1" fill="#c0c0c0"/><rect x="930" y="230" width="1" height="1" fill="#c0c0c0"/><rect x="46" y="294" width="1" height="1" fill="#c0c0c0"/><rect x="65" y="294" width="1" height="1" fill="#c0c0c0"/><rect x="83" y="294" width="1" height="1" fill="#c0c0c0"/><rect x="102" y="294" width="1" height="1" fill="#c0c0c0"/><rect x="120" y="294" width="1" height="1" fill="#c0c0c0"/><rect x="138" y="294" width="1" height="1" fill="#c0c0c0"/><rect x="157" y="294" width="1" height="1" fill="#c0c0c0"/><rect x="175" y="294" width="1" height="1" fill="#c0c0c0"/><rect x="194" y="294" width="1" height="1" fill="#c0c0c0"/><rect x="212" y="294" width="1" height="1" fill="#c0c0c0"/><rect x="230" y="294" width="1" height="1" fill="#c0c0c0"/><rect x="249" y="294" width="1" height="1" fill="#c0c0c0"/><rect x="267" y="294" width="1" height="1" fill="#c0c0c0"/><rect x="286" y="294" width="1" height="1" fill="#c0c0c0"/><rect x="304" y="294" width="1" height="1" fill="#c0c0c0"/><rect x="322" y="294" width="1" height="1" fill="#c0c0c0"/><rect x="341" y="294" width="1" height="1" fill="#c0c0c0"/><rect x="359" y="294" width="1" height="1" fill="#c0c0c0"/><rect x="378" y="294" width="1" height="1" fill="#c0c0c0"/><rect x="396" y="294" width="1" height="1" fill="#c0c0c0"/><rect x="414" y="294" width="1" height="1" fill="#c0c0c0"/><rect x="433" y="294" width="1" height="1" fill="#c0c0c0"/><rect x="451" y="294" width="1" height="1" fill="#c0c0c0"/><rect x="470" y="294" width="1" height="1" fill="#c0c0c0"/><rect x="488" y="294" width="1" height="1" fill="#c0c0c0"/><rect x="506" y="294" width="1" height="1" fill="#c0c0c0"/><rect x="525" y="294" width="1" height="1" fill="#c0c0c0"/><rect x="543" y="294" width="1" height="1" fill="#c0c0c0"/><rect x="562" y="294" width="1" height="1" fill="#c0c0c0"/><rect x="580" y="294" width="1" height="1" fill="#c0c0c0"/><rect x="598" y="294" width="1" height="1" fill="#c0c0c0"/><rect x="617" y="294" width="1" height="1" fill="#c0c0c0"/><rect x="635" y="294" width="1" height="1" fill="#c0c0c0"/><rect x="654" y="294" width="1" height="1" fill="#c0c0c0"/><rect x="672" y="294" width="1" height="1" fill="#c0c0c0"/><rect x="690" y="294" width="1" height="1" fill="#c0c0c0"/><rect x="709" y="294" width="1" height="1" fill="#c0c0c0"/><rect x="727" y="294" width="1" height="1" fill="#c0c0c0"/><rect x="746" y="294" width="1" height="1" fill="#c0c0c0"/><rect x="764" y="294" width="1" height="1" fill="#c0c0c0"/><rect x="782" y="294" width="1" height="1" fill="#c0c0c0"/><rect x="801" y="294" width="1" height="1" fill="#c0c0c0"/><rect x="819" y="294" width="1" height="1" fill="#c0c0c0"/><rect x="838" y="294" width="1" height="1" fill="#c0c0c0"/><rect x="856" y="294" width="1" height="1" fill="#c0c0c0"/><rect x="874" y="294" width="1" height="1" fill="#c0c0c0"/><rect x="893" y="294" width="1" height="1" fill="#c0c0c0"/><rect x="911" y="294" width="1" height="1" fill="#c0c0c0"/><rect x="930" y="294" width="1" height="1" fill="#c0c0c0"/><rect x="46" y="358" width="1" height="1" fill="#c0c0c0"/><rect x="65" y="358" width="1" height="1" fill="#c0c0c0"/><rect x="83" y="358" width="1" height="1" fill="#c0c0c0"/><rect x="102" y="358" width="1" height="1" fill="#c0c0c0"/><rect x="120" y="358" width="1" height="1" fill="#c0c0c0"/><rect x="138" y="358" width="1" height="1" fill="#c0c0c0"/><rect x="157" y="358" width="1" height="1" fill="#c0c0c0"/><rect x="175" y="358" width="1" height="1" fill="#c0c0c0"/><rect x="194" y="358" width="1" height="1" fill="#c0c0c0"/><rect x="212" y="358" width="1" height="1" fill="#c0c0c0"/><rect x="230" y="358" width="1" height="1" fill="#c0c0c0"/><rect x="249" y="358" width="1" height="1" fill="#c0c0c0"/><rect x="267" y="358" width="1" height="1" fill="#c0c0c0"/><rect x="286" y="358" width="1" height="1" fill="#c0c0c0"/><rect x="304" y="358" width="1" height="1" fill="#c0c0c0"/><rect x="322" y="358" width="1" height="1" fill="#c0c0c0"/><rect x="341" y="358" width="1" height="1" fill="#c0c0c0"/><rect x="359" y="358" width="1" height="1" fill="#c0c0c0"/><rect x="378" y="358" width="1" height="1" fill="#c0c0c0"/><rect x="396" y="358" width="1" height="1" fill="#c0c0c0"/><rect x="414" y="358" width="1" height="1" fill="#c0c0c0"/><rect x="433" y="358" width="1" height="1" fill="#c0c0c0"/><rect x="451" y="358" width="1" height="1" fill="#c0c0c0"/><rect x="470" y="358" width="1" height="1" fill="#c0c0c0"/><rect x="488" y="358" width="1" height="1" fill="#c0c0c0"/><rect x="506" y="358" width="1" height="1" fill="#c0c0c0"/><rect x="525" y="358" width="1" height="1" fill="#c0c0c0"/><rect x="543" y="358" width="1" height="1" fill="#c0c0c0"/><rect x="562" y="358" width="1" height="1" fill="#c0c0c0"/><rect x="580" y="358" width="1" height="1" fill="#c0c0c0"/><rect x="598" y="358" width="1" height="1" fill="#c0c0c0"/><rect x="617" y="358" width="1" height="1" fill="#c0c0c0"/><rect x="635" y="358" width="1" height="1" fill="#c0c0c0"/><rect x="654" y="358" width="1" height="1" fill="#c0c0c0"/><rect x="672" y="358" width="1" height="1" fill="#c0c0c0"/><rect x="690" y="358" width="1" height="1" fill="#c0c0c0"/><rect x="709" y="358" width="1" height="1" fill="#c0c0c0"/><rect x="727" y="358" width="1" height="1" fill="#c0c0c0"/><rect x="746" y="358" width="1" height="1" fill="#c0c0c0"/><rect x="764" y="358" width="1" height="1" fill="#c0c0c0"/><rect x="782" y="358" width="1" height="1" fill="#c0c0c0"/><rect x="801" y="358" width="1" height="1" fill="#c0c0c0"/><rect x="819" y="358" width="1" height="1" fill="#c0c0c0"/><rect x="838" y="358" width="1" height="1" fill="#c0c0c0"/><rect x="856" y="358" width="1" height="1" fill="#c0c0c0"/><rect x="874" y="358" width="1" height="1" fill="#c0c0c0"/><rect x="893" y="358" width="1" height="1" fill="#c0c0c0"/><rect x="911" y="358" width="1" height="1" fill="#c0c0c0"/><rect x="930" y="358" width="1" height="1" fill="#c0c0c0"/><rect x="46" y="488" width="1" height="1" fill="#c0c0c0"/><rect x="65" y="488" width="1" height="1" fill="#c0c0c0"/><rect x="83" y="488" width="1" height="1" fill="#c0c0c0"/><rect x="102" y="488" width="1" height="1" fill="#c0c0c0"/><rect x="120" y="488" width="1" height="1" fill="#c0c0c0"/><rect x="138" y="488" width="1" height="1" fill="#c0c0c0"/><rect x="157" y="488" width="1" height="1" fill="#c0c0c0"/><rect x="175" y="488" width="1" height="1" fill="#c0c0c0"/><rect x="194" y="488" width="1" height="1" fill="#c0c0c0"/><rect x="212" y="488" width="1" height="1" fill="#c0c0c0"/><rect x="230" y="488" width="1" height="1" fill="#c0c0c0"/><rect x="249" y="488" width="1" height="1" fill="#c0c0c0"/><rect x="267" y="488" width="1" height="1" fill="#c0c0c0"/><rect x="286" y="488" width="1" height="1" fill="#c0c0c0"/><rect x="304" y="488" width="1" height="1" fill="#c0c0c0"/><rect x="322" y="488" width="1" height="1" fill="#c0c0c0"/><rect x="341" y="488" width="1" height="1" fill="#c0c0c0"/><rect x="359" y="488" width="1" height="1" fill="#c0c0c0"/><rect x="378" y="488" width="1" height="1" fill="#c0c0c0"/><rect x="396" y="488" width="1" height="1" fill="#c0c0c0"/><rect x="414" y="488" width="1" height="1" fill="#c0c0c0"/><rect x="433" y="488" width="1" height="1" fill="#c0c0c0"/><rect x="451" y="488" width="1" height="1" fill="#c0c0c0"/><rect x="470" y="488" width="1" height="1" fill="#c0c0c0"/><rect x="488" y="488" width="1" height="1" fill="#c0c0c0"/><rect x="506" y="488" width="1" height="1" fill="#c0c0c0"/><rect x="525" y="488" width="1" height="1" fill="#c0c0c0"/><rect x="543" y="488" width="1" height="1" fill="#c0c0c0"/><rect x="562" y="488" width="1" height="1" fill="#c0c0c0"/><rect x="580" y="488" width="1" height="1" fill="#c0c0c0"/><rect x="598" y="488" width="1" height="1" fill="#c0c0c0"/><rect x="617" y="488" width="1" height="1" fill="#c0c0c0"/><rect x="635" y="488" width="1" height="1" fill="#c0c0c0"/><rect x="654" y="488" width="1" height="1" fill="#c0c0c0"/><rect x="672" y="488" width="1" height="1" fill="#c0c0c0"/><rect x="690" y="488" width="1" height="1" fill="#c0c0c0"/><rect x="709" y="488" width="1" height="1" fill="#c0c0c0"/><rect x="727" y="488" width="1" height="1" fill="#c0c0c0"/><rect x="746" y="488" width="1" height="1" fill="#c0c0c0"/><rect x="764" y="488" width="1" height="1" fill="#c0c0c0"/><rect x="782" y="488" width="1" height="1" fill="#c0c0c0"/><rect x="801" y="488" width="1" height="1" fill="#c0c0c0"/><rect x="819" y="488" width="1" height="1" fill="#c0c0c0"/><rect x="838" y="488" width="1" height="1" fill="#c0c0c0"/><rect x="856" y="488" width="1" height="1" fill="#c0c0c0"/><rect x="874" y="488" width="1" height="1" fill="#c0c0c0"/><rect x="893" y="488" width="1" height="1" fill="#c0c0c0"/><rect x="911" y="488" width="1" height="1" fill="#c0c0c0"/><rect x="930" y="488" width="1" height="1" fill="#c0c0c0"/><rect x="46" y="552" width="1" height="1" fill="#c0c0c0"/><rect x="65" y="552" width="1" height="1" fill="#c0c0c0"/><rect x="83" y="552" width="1" height="1" fill="#c0c0c0"/><rect x="102" y="552" width="1" height="1" fill="#c0c0c0"/><rect x="120" y="552" width="1" height="1" fill="#c0c0c0"/><rect x="138" y="552" width="1" height="1" fill="#c0c0c0"/><rect x="157" y="552" width="1" height="1" fill="#c0c0c0"/><rect x="175" y="552" width="1" height="1" fill="#c0c0c0"/><rect x="194" y="552" width="1" height="1" fill="#c0c0c0"/><rect x="212" y="552" width="1" height="1" fill="#c0c0c0"/><rect x="230" y="552" width="1" height="1" fill="#c0c0c0"/><rect x="249" y="552" width="1" height="1" fill="#c0c0c0"/><rect x="267" y="552" width="1" height="1" fill="#c0c0c0"/><rect x="286" y="552" width="1" height="1" fill="#c0c0c0"/><rect x="304" y="552" width="1" height="1" fill="#c0c0c0"/><rect x="322" y="552" width="1" height="1" fill="#c0c0c0"/><rect x="341" y="552" width="1" height="1" fill="#c0c0c0"/><rect x="359" y="552" width="1" height="1" fill="#c0c0c0"/><rect x="378" y="552" width="1" height="1" fill="#c0c0c0"/><rect x="396" y="552" width="1" height="1" fill="#c0c0c0"/><rect x="414" y="552" width="1" height="1" fill="#c0c0c0"/><rect x="433" y="552" width="1" height="1" fill="#c0c0c0"/><rect x="451" y="552" width="1" height="1" fill="#c0c0c0"/><rect x="470" y="552" width="1" height="1" fill="#c0c0c0"/><rect x="488" y="552" width="1" height="1" fill="#c0c0c0"/><rect x="506" y="552" width="1" height="1" fill="#c0c0c0"/><rect x="525" y="552" width="1" height="1" fill="#c0c0c0"/><rect x="543" y="552" width="1" height="1" fill="#c0c0c0"/><rect x="562" y="552" width="1" height="1" fill="#c0c0c0"/><rect x="580" y="552" width="1" height="1" fill="#c0c0c0"/><rect x="598" y="552" width="1" height="1" fill="#c0c0c0"/><rect x="617" y="552" width="1" height="1" fill="#c0c0c0"/><rect x="635" y="552" width="1" height="1" fill="#c0c0c0"/><rect x="654" y="552" width="1" height="1" fill="#c0c0c0"/><rect x="672" y="552" width="1" height="1" fill="#c0c0c0"/><rect x="690" y="552" width="1" height="1" fill="#c0c0c0"/><rect x="709" y="552" width="1" height="1" fill="#c0c0c0"/><rect x="727" y="552" width="1" height="1" fill="#c0c0c0"/><rect x="746" y="552" width="1" height="1" fill="#c0c0c0"/><rect x="764" y="552" width="1" height="1" fill="#c0c0c0"/><rect x="782" y="552" width="1" height="1" fill="#c0c0c0"/><rect x="801" y="552" width="1" height="1" fill="#c0c0c0"/><rect x="819" y="552" width="1" height="1" fill="#c0c0c0"/><rect x="838" y="552" width="1" height="1" fill="#c0c0c0"/><rect x="856" y="552" width="1" height="1" fill="#c0c0c0"/><rect x="874" y="552" width="1" height="1" fill="#c0c0c0"/><rect x="893" y="552" width="1" height="1" fill="#c0c0c0"/><rect x="911" y="552" width="1" height="1" fill="#c0c0c0"/><rect x="930" y="552" width="1" height="1" fill="#c0c0c0"/><rect x="46" y="616" width="1" height="1" fill="#c0c0c0"/><rect x="65" y="616" width="1" height="1" fill="#c0c0c0"/><rect x="83" y="616" width="1" height="1" fill="#c0c0c0"/><rect x="102" y="616" width="1" height="1" fill="#c0c0c0"/><rect x="120" y="616" width="1" height="1" fill="#c0c0c0"/><rect x="138" y="616" width="1" height="1" fill="#c0c0c0"/><rect x="157" y="616" width="1" height="1" fill="#c0c0c0"/><rect x="175" y="616" width="1" height="1" fill="#c0c0c0"/><rect x="194" y="616" width="1" height="1" fill="#c0c0c0"/><rect x="212" y="616" width="1" height="1" fill="#c0c0c0"/><rect x="230" y="616" width="1" height="1" fill="#c0c0c0"/><rect x="249" y="616" width="1" height="1" fill="#c0c0c0"/><rect x="267" y="616" width="1" height="1" fill="#c0c0c0"/><rect x="286" y="616" width="1" height="1" fill="#c0c0c0"/><rect x="304" y="616" width="1" height="1" fill="#c0c0c0"/><rect x="322" y="616" width="1" height="1" fill="#c0c0c0"/><rect x="341" y="616" width="1" height="1" fill="#c0c0c0"/><rect x="359" y="616" width="1" height="1" fill="#c0c0c0"/><rect x="378" y="616" width="1" height="1" fill="#c0c0c0"/><rect x="396" y="616" width="1" height="1" fill="#c0c0c0"/><rect x="414" y="616" width="1" height="1" fill="#c0c0c0"/><rect x="433" y="616" width="1" height="1" fill="#c0c0c0"/><rect x="451" y="616" width="1" height="1" fill="#c0c0c0"/><rect x="470" y="616" width="1" height="1" fill="#c0c0c0"/><rect x="488" y="616" width="1" height="1" fill="#c0c0c0"/><rect x="506" y="616" width="1" height="1" fill="#c0c0c0"/><rect x="525" y="616" width="1" height="1" fill="#c0c0c0"/><rect x="543" y="616" width="1" height="1" fill="#c0c0c0"/><rect x="562" y="616" width="1" height="1" fill="#c0c0c0"/><rect x="580" y="616" width="1" height="1" fill="#c0c0c0"/><rect x="598" y="616" width="1" height="1" fill="#c0c0c0"/><rect x="617" y="616" width="1" height="1" fill="#c0c0c0"/><rect x="635" y="616" width="1" height="1" fill="#c0c0c0"/><rect x="654" y="616" width="1" height="1" fill="#c0c0c0"/><rect x="672" y="616" width="1" height="1" fill="#c0c0c0"/><rect x="690" y="616" width="1" height="1" fill="#c0c0c0"/><rect x="709" y="616" width="1" height="1" fill="#c0c0c0"/><rect x="727" y="616" width="1" height="1" fill="#c0c0c0"/><rect x="746" y="616" width="1" height="1" fill="#c0c0c0"/><rect x="764" y="616" width="1" height="1" fill="#c0c0c0"/><rect x="782" y="616" width="1" height="1" fill="#c0c0c0"/><rect x="801" y="616" width="1" height="1" fill="#c0c0c0"/><rect x="819" y="616" width="1" height="1" fill="#c0c0c0"/><rect x="838" y="616" width="1" height="1" fill="#c0c0c0"/><rect x="856" y="616" width="1" height="1" fill="#c0c0c0"/><rect x="874" y="616" width="1" height="1" fill="#c0c0c0"/><rect x="893" y="616" width="1" height="1" fill="#c0c0c0"/><rect x="911" y="616" width="1" height="1" fill="#c0c0c0"/><rect x="930" y="616" width="1" height="1" fill="#c0c0c0"/><rect x="46" y="167" width="1" height="1" fill="#c0c0c0"/><rect x="46" y="677" width="1" height="1" fill="#c0c0c0"/><rect x="65" y="167" width="1" height="1" fill="#c0c0c0"/><rect x="65" y="677" width="1" height="1" fill="#c0c0c0"/><rect x="83" y="167" width="1" height="1" fill="#c0c0c0"/><rect x="83" y="677" width="1" height="1" fill="#c0c0c0"/><rect x="102" y="167" width="1" height="1" fill="#c0c0c0"/><rect x="102" y="677" width="1" height="1" fill="#c0c0c0"/><rect x="120" y="167" width="1" height="1" fill="#c0c0c0"/><rect x="120" y="677" width="1" height="1" fill="#c0c0c0"/><rect x="138" y="167" width="1" height="1" fill="#c0c0c0"/><rect x="138" y="677" width="1" height="1" fill="#c0c0c0"/><rect x="157" y="167" width="1" height="1" fill="#c0c0c0"/><rect x="157" y="677" width="1" height="1" fill="#c0c0c0"/><rect x="175" y="167" width="1" height="1" fill="#c0c0c0"/><rect x="175" y="677" width="1" height="1" fill="#c0c0c0"/><rect x="194" y="167" width="1" height="1" fill="#c0c0c0"/><rect x="194" y="677" width="1" height="1" fill="#c0c0c0"/><rect x="212" y="167" width="1" height="1" fill="#c0c0c0"/><rect x="212" y="677" width="1" height="1" fill="#c0c0c0"/><rect x="230" y="167" width="1" height="1" fill="#c0c0c0"/><rect x="230" y="677" width="1" height="1" fill="#c0c0c0"/><rect x="249" y="167" width="1" height="1" fill="#c0c0c0"/><rect x="249" y="677" width="1" height="1" fill="#c0c0c0"/><rect x="267" y="167" width="1" height="1" fill="#c0c0c0"/><rect x="267" y="677" width="1" height="1" fill="#c0c0c0"/><rect x="286" y="167" width="1" height="1" fill="#c0c0c0"/><rect x="286" y="677" width="1" height="1" fill="#c0c0c0"/><rect x="304" y="167" width="1" height="1" fill="#c0c0c0"/><rect x="304" y="677" width="1" height="1" fill="#c0c0c0"/><rect x="322" y="167" width="1" height="1" fill="#c0c0c0"/><rect x="322" y="677" width="1" height="1" fill="#c0c0c0"/><rect x="341" y="167" width="1" height="1" fill="#c0c0c0"/><rect x="341" y="677" width="1" height="1" fill="#c0c0c0"/><rect x="359" y="167" width="1" height="1" fill="#c0c0c0"/><rect x="359" y="677" width="1" height="1" fill="#c0c0c0"/><rect x="378" y="167" width="1" height="1" fill="#c0c0c0"/><rect x="378" y="677" width="1" height="1" fill="#c0c0c0"/><rect x="396" y="167" width="1" height="1" fill="#c0c0c0"/><rect x="396" y="677" width="1" height="1" fill="#c0c0c0"/><rect x="414" y="167" width="1" height="1" fill="#c0c0c0"/><rect x="414" y="677" width="1" height="1" fill="#c0c0c0"/><rect x="433" y="167" width="1" height="1" fill="#c0c0c0"/><rect x="433" y="677" width="1" height="1" fill="#c0c0c0"/><rect x="451" y="167" width="1" height="1" fill="#c0c0c0"/><rect x="451" y="677" width="1" height="1" fill="#c0c0c0"/><rect x="470" y="167" width="1" height="1" fill="#c0c0c0"/><rect x="470" y="677" width="1" height="1" fill="#c0c0c0"/><rect x="488" y="167" width="1" height="1" fill="#c0c0c0"/><rect x="488" y="677" width="1" height="1" fill="#c0c0c0"/><rect x="506" y="167" width="1" height="1" fill="#c0c0c0"/><rect x="506" y="677" width="1" height="1" fill="#c0c0c0"/><rect x="525" y="167" width="1" height="1" fill="#c0c0c0"/><rect x="525" y="677" width="1" height="1" fill="#c0c0c0"/><rect x="543" y="167" width="1" height="1" fill="#c0c0c0"/><rect x="543" y="677" width="1" height="1" fill="#c0c0c0"/><rect x="562" y="167" width="1" height="1" fill="#c0c0c0"/><rect x="562" y="677" width="1" height="1" fill="#c0c0c0"/><rect x="580" y="167" width="1" height="1" fill="#c0c0c0"/><rect x="580" y="677" width="1" height="1" fill="#c0c0c0"/><rect x="598" y="167" width="1" height="1" fill="#c0c0c0"/><rect x="598" y="677" width="1" height="1" fill="#c0c0c0"/><rect x="617" y="167" width="1" height="1" fill="#c0c0c0"/><rect x="617" y="677" width="1" height="1" fill="#c0c0c0"/><rect x="635" y="167" width="1" height="1" fill="#c0c0c0"/><rect x="635" y="677" width="1" height="1" fill="#c0c0c0"/><rect x="654" y="167" width="1" height="1" fill="#c0c0c0"/><rect x="654" y="677" width="1" height="1" fill="#c0c0c0"/><rect x="672" y="167" width="1" height="1" fill="#c0c0c0"/><rect x="672" y="677" width="1" height="1" fill="#c0c0c0"/><rect x="690" y="167" width="1" height="1" fill="#c0c0c0"/><rect x="690" y="677" width="1" height="1" fill="#c0c0c0"/><rect x="709" y="167" width="1" height="1" fill="#c0c0c0"/><rect x="709" y="677" width="1" height="1" fill="#c0c0c0"/><rect x="727" y="167" width="1" height="1" fill="#c0c0c0"/><rect x="727" y="677" width="1" height="1" fill="#c0c0c0"/><rect x="746" y="167" width="1" height="1" fill="#c0c0c0"/><rect x="746" y="677" width="1" height="1" fill="#c0c0c0"/><rect x="764" y="167" width="1" height="1" fill="#c0c0c0"/><rect x="764" y="677" width="1" height="1" fill="#c0c0c0"/><rect x="782" y="167" width="1" height="1" fill="#c0c0c0"/><rect x="782" y="677" width="1" height="1" fill="#c0c0c0"/><rect x="801" y="167" width="1" height="1" fill="#c0c0c0"/><rect x="801" y="677" width="1" height="1" fill="#c0c0c0"/><rect x="819" y="167" width="1" height="1" fill="#c0c0c0"/><rect x="819" y="677" width="1" height="1" fill="#c0c0c0"/><rect x="838" y="167" width="1" height="1" fill="#c0c0c0"/><rect x="838" y="677" width="1" height="1" fill="#c0c0c0"/><rect x="856" y="167" width="1" height="1" fill="#c0c0c0"/><rect x="856" y="677" width="1" height="1" fill="#c0c0c0"/><rect x="874" y="167" width="1" height="1" fill="#c0c0c0"/><rect x="874" y="677" width="1" height="1" fill="#c0c0c0"/><rect x="893" y="167" width="1" height="1" fill="#c0c0c0"/><rect x="893" y="677" width="1" height="1" fill="#c0c0c0"/><rect x="911" y="167" width="1" height="1" fill="#c0c0c0"/><rect x="911" y="677" width="1" height="1" fill="#c0c0c0"/><rect x="930" y="167" width="1" height="1" fill="#c0c0c0"/><rect x="930" y="677" width="1" height="1" fill="#c0c0c0"/><rect x="120" y="167" width="1" height="3" fill="#c0c0c0"/><rect x="120" y="675" width="1" height="3" fill="#c0c0c0"/><rect x="212" y="167" width="1" height="3" fill="#c0c0c0"/><rect x="212" y="675" width="1" height="3" fill="#c0c0c0"/><rect x="304" y="167" width="1" height="3" fill="#c0c0c0"/><rect x="304" y="675" width="1" height="3" fill="#c0c0c0"/><rect x="396" y="167" width="1" height="3" fill="#c0c0c0"/><rect x="396" y="675" width="1" height="3" fill="#c0c0c0"/><rect x="488" y="167" width="1" height="3" fill="#c0c0c0"/><rect x="488" y="675" width="1" height="3" fill="#c0c0c0"/><rect x="580" y="167" width="1" height="3" fill="#c0c0c0"/><rect x="580" y="675" width="1" height="3" fill="#c0c0c0"/><rect x="672" y="167" width="1" height="3" fill="#c0c0c0"/><rect x="672" y="675" width="1" height="3" fill="#c0c0c0"/><rect x="764" y="167" width="1" height="3" fill="#c0c0c0"/><rect x="764" y="675" width="1" height="3" fill="#c0c0c0"/><rect x="856" y="167" width="1" height="3" fill="#c0c0c0"/><rect x="856" y="675" width="1" height="3" fill="#c0c0c0"/><rect x="30" y="178" width="1" height="1" fill="#c0c0c0"/><rect x="947" y="178" width="1" height="1" fill="#c0c0c0"/><rect x="30" y="191" width="1" height="1" fill="#c0c0c0"/><rect x="947" y="191" width="1" height="1" fill="#c0c0c0"/><rect x="30" y="204" width="1" height="1" fill="#c0c0c0"/><rect x="947" y="204" width="1" height="1" fill="#c0c0c0"/><rect x="30" y="217" width="1" height="1" fill="#c0c0c0"/><rect x="947" y="217" width="1" height="1" fill="#c0c0c0"/><rect x="30" y="230" width="1" height="1" fill="#c0c0c0"/><rect x="947" y="230" width="1" height="1" fill="#c0c0c0"/><rect x="30" y="242" width="1" height="1" fill="#c0c0c0"/><rect x="947" y="242" width="1" height="1" fill="#c0c0c0"/><rect x="30" y="255" width="1" height="1" fill="#c0c0c0"/><rect x="947" y="255" width="1" height="1" fill="#c0c0c0"/><rect x="30" y="268" width="1" height="1" fill="#c0c0c0"/><rect x="947" y="268" width="1" height="1" fill="#c0c0c0"/><rect x="30" y="281" width="1" height="1" fill="#c0c0c0"/><rect x="947" y="281" width="1" height="1" fill="#c0c0c0"/><rect x="30" y="294" width="1" height="1" fill="#c0c0c0"/><rect x="947" y="294" width="1" height="1" fill="#c0c0c0"/><rect x="30" y="307" width="1" height="1" fill="#c0c0c0"/><rect x="947" y="307" width="1" height="1" fill="#c0c0c0"/><rect x="30" y="320" width="1" height="1" fill="#c0c0c0"/><rect x="947" y="320" width="1" height="1" fill="#c0c0c0"/><rect x="30" y="333" width="1" height="1" fill="#c0c0c0"/><rect x="947" y="333" width="1" height="1" fill="#c0c0c0"/><rect x="30" y="346" width="1" height="1" fill="#c0c0c0"/><rect x="947" y="346" width="1" height="1" fill="#c0c0c0"/><rect x="30" y="358" width="1" height="1" fill="#c0c0c0"/><rect x="947" y="358" width="1" height="1" fill="#c0c0c0"/><rect x="30" y="371" width="1" height="1" fill="#c0c0c0"/><rect x="947" y="371" width="1" height="1" fill="#c0c0c0"/><rect x="30" y="384" width="1" height="1" fill="#c0c0c0"/><rect x="947" y="384" width="1" height="1" fill="#c0c0c0"/><rect x="30" y="397" width="1" height="1" fill="#c0c0c0"/><rect x="947" y="397" width="1" height="1" fill="#c0c0c0"/><rect x="30" y="410" width="1" height="1" fill="#c0c0c0"/><rect x="947" y="410" width="1" height="1" fill="#c0c0c0"/><rect x="30" y="423" width="1" height="1" fill="#c0c0c0"/><rect x="947" y="423" width="1" height="1" fill="#c0c0c0"/><rect x="30" y="436" width="1" height="1" fill="#c0c0c0"/><rect x="947" y="436" width="1" height="1" fill="#c0c0c0"/><rect x="30" y="449" width="1" height="1" fill="#c0c0c0"/><rect x="947" y="449" width="1" height="1" fill="#c0c0c0"/><rect x="30" y="462" width="1" height="1" fill="#c0c0c0"/><rect x="947" y="462" width="1" height="1" fill="#c0c0c0"/><rect x="30" y="475" width="1" height="1" fill="#c0c0c0"/><rect x="947" y="475" width="1" height="1" fill="#c0c0c0"/><rect x="30" y="488" width="1" height="1" fill="#c0c0c0"/><rect x="947" y="488" width="1" height="1" fill="#c0c0c0"/><rect x="30" y="500" width="1" height="1" fill="#c0c0c0"/><rect x="947" y="500" width="1" height="1" fill="#c0c0c0"/><rect x="30" y="513" width="1" height="1" fill="#c0c0c0"/><rect x="947" y="513" width="1" height="1" fill="#c0c0c0"/><rect x="30" y="526" width="1" height="1" fill="#c0c0c0"/><rect x="947" y="526" width="1" height="1" fill="#c0c0c0"/><rect x="30" y="539" width="1" height="1" fill="#c0c0c0"/><rect x="947" y="539" width="1" height="1" fill="#c0c0c0"/><rect x="30" y="552" width="1" height="1" fill="#c0c0c0"/><rect x="947" y="552" width="1" height="1" fill="#c0c0c0"/><rect x="30" y="565" width="1" height="1" fill="#c0c0c0"/><rect x="947" y="565" width="1" height="1" fill="#c0c0c0"/><rect x="30" y="578" width="1" height="1" fill="#c0c0c0"/><rect x="947" y="578" width="1" height="1" fill="#c0c0c0"/><rect x="30" y="591" width="1" height="1" fill="#c0c0c0"/><rect x="947" y="591" width="1" height="1" fill="#c0c0c0"/><rect x="30" y="604" width="1" height="1" fill="#c0c0c0"/><rect x="947" y="604" width="1" height="1" fill="#c0c0c0"/><rect x="30" y="616" width="1" height="1" fill="#c0c0c0"/><rect x="947" y="616" width="1" height="1" fill="#c0c0c0"/><rect x="30" y="629" width="1" height="1" fill="#c0c0c0"/><rect x="947" y="629" width="1" height="1" fill="#c0c0c0"/><rect x="30" y="642" width="1" height="1" fill="#c0c0c0"/><rect x="947" y="642" width="1" height="1" fill="#c0c0c0"/><rect x="30" y="655" width="1" height="1" fill="#c0c0c0"/><rect x="947" y="655" width="1" height="1" fill="#c0c0c0"/><rect x="30" y="668" width="1" height="1" fill="#c0c0c0"/><rect x="947" y="668" width="1" height="1" fill="#c0c0c0"/><rect x="30" y="230" width="3" height="1" fill="#c0c0c0"/><rect x="945" y="230" width="3" height="1" fill="#c0c0c0"/><rect x="30" y="294" width="3" height="1" fill="#c0c0c0"/><rect x="945" y="294" width="3" height="1" fill="#c0c0c0"/><rect x="30" y="358" width="3" height="1" fill="#c0c0c0"/><rect x="945" y="358" width="3" height="1" fill="#c0c0c0"/><rect x="30" y="423" width="3" height="1" fill="#c0c0c0"/><rect x="945" y="423" width="3" height="1" fill="#c0c0c0"/><rect x="30" y="488" width="3" height="1" fill="#c0c0c0"/><rect x="945" y="488" width="3" height="1" fill="#c0c0c0"/><rect x="30" y="552" width="3" height="1" fill="#c0c0c0"/><rect x="945" y="552" width="3" height="1" fill="#c0c0c0"/><rect x="30" y="616" width="3" height="1" fill="#c0c0c0"/><rect x="945" y="616" width="3" height="1" fill="#c0c0c0"/><rect x="30" y="423" width="918" height="1" fill="#c8c8c8"/><rect x="488" y="167" width="1" height="511" fill="#c8c8c8"/><rect x="46" y="420" width="1" height="7" fill="#c8c8c8"/><rect x="65" y="420" width="1" height="7" fill="#c8c8c8"/><rect x="83" y="420" width="1" height="7" fill="#c8c8c8"/><rect x="102" y="420" width="1" height="7" fill="#c8c8c8"/><rect x="120" y="420" width="1" height="7" fill="#c8c8c8"/><rect x="138" y="420" width="1" height="7" fill="#c8c8c8"/><rect x="157" y="420" width="1" height="7" fill="#c8c8c8"/><rect x="175" y="420" width="1" height="7" fill="#c8c8c8"/><rect x="194" y="420" width="1" height="7" fill="#c8c8c8"/><rect x="212" y="420" width="1" height="7" fill="#c8c8c8"/><rect x="230" y="420" width="1" height="7" fill="#c8c8c8"/><rect x="249" y="420" width="1" height="7" fill="#c8c8c8"/><rect x="267" y="420" width="1" height="7" fill="#c8c8c8"/><rect x="286" y="420" width="1" height="7" fill="#c8c8c8"/><rect x="304" y="420" width="1" height="7" fill="#c8c8c8"/><rect x="322" y="420" width="1" height="7" fill="#c8c8c8"/><rect x="341" y="420" width="1" height="7" fill="#c8c8c8"/><rect x="359" y="420" width="1" height="7" fill="#c8c8c8"/><rect x="378" y="420" width="1" height="7" fill="#c8c8c8"/><rect x="396" y="420" width="1" height="7" fill="#c8c8c8"/><rect x="414" y="420" width="1" height="7" fill="#c8c8c8"/><rect x="433" y="420" width="1" height="7" fill="#c8c8c8"/><rect x="451" y="420" width="1" height="7" fill="#c8c8c8"/><rect x="470" y="420" width="1" height="7" fill="#c8c8c8"/><rect x="488" y="420" width="1" height="7" fill="#c8c8c8"/><rect x="506" y="420" width="1" height="7" fill="#c8c8c8"/><rect x="525" y="420" width="1" height="7" fill="#c8c8c8"/><rect x="543" y="420" width="1" height="7" fill="#c8c8c8"/><rect x="562" y="420" width="1" height="7" fill="#c8c8c8"/><rect x="580" y="420" width="1" height="7" fill="#c8c8c8"/><rect x="598" y="420" width="1" height="7" fill="#c8c8c8"/><rect x="617" y="420" width="1" height="7" fill="#c8c8c8"/><rect x="635" y="420" width="1" height="7" fill="#c8c8c8"/><rect x="654" y="420" width="1" height="7" fill="#c8c8c8"/><rect x="672" y="420" width="1" height="7" fill="#c8c8c8"/><rect x="690" y="420" width="1" height="7" fill="#c8c8c8"/><rect x="709" y="420" width="1" height="7" fill="#c8c8c8"/><rect x="727" y="420" width="1" height="7" fill="#c8c8c8"/><rect x="746" y="420" width="1" height="7" fill="#c8c8c8"/><rect x="764" y="420" width="1" height="7" fill="#c8c8c8"/><rect x="782" y="420" width="1" height="7" fill="#c8c8c8"/><rect x="801" y="420" width="1" height="7" fill="#c8c8c8"/><rect x="819" y="420" width="1" height="7" fill="#c8c8c8"/><rect x="838" y="420" width="1" height="7" fill="#c8c8c8"/><rect x="856" y="420" width="1" height="7" fill="#c8c8c8"/><rect x="874" y="420" width="1" height="7" fill="#c8c8c8"/><rect x="893" y="420" width="1" height="7" fill="#c8c8c8"/><rect x="911" y="420" width="1" height="7" fill="#c8c8c8"/><rect x="930" y="420" width="1" height="7" fill="#c8c8c8"/><rect x="485" y="178" width="7" height="1" fill="#c8c8c8"/><rect x="485" y="191" width="7" height="1" fill="#c8c8c8"/><rect x="485" y="204" width="7" height="1" fill="#c8c8c8"/><rect x="485" y="217" width="7" height="1" fill="#c8c8c8"/><rect x="485" y="230" width="7" height="1" fill="#c8c8c8"/><rect x="485" y="242" width="7" height="1" fill="#c8c8c8"/><rect x="485" y="255" width="7" height="1" fill="#c8c8c8"/><rect x="485" y="268" width="7" height="1" fill="#c8c8c8"/><rect x="485" y="281" width="7" height="1" fill="#c8c8c8"/><rect x="485" y="294" width="7" height="1" fill="#c8c8c8"/><rect x="485" y="307" width="7" height="1" fill="#c8c8c8"/><rect x="485" y="320" width="7" height="1" fill="#c8c8c8"/><rect x="485" y="333" width="7" height="1" fill="#c8c8c8"/><rect x="485" y="346" width="7" height="1" fill="#c8c8c8"/><rect x="485" y="358" width="7" height="1" fill="#c8c8c8"/><rect x="485" y="371" width="7" height="1" fill="#c8c8c8"/><rect x="485" y="384" width="7" height="1" fill="#c8c8c8"/><rect x="485" y="397" width="7" height="1" fill="#c8c8c8"/><rect x="485" y="410" width="7" height="1" fill="#c8c8c8"/><rect x="485" y="423" width="7" height="1" fill="#c8c8c8"/><rect x="485" y="436" width="7" height="1" fill="#c8c8c8"/><rect x="485" y="449" width="7" height="1" fill="#c8c8c8"/><rect x="485" y="462" width="7" height="1" fill="#c8c8c8"/><rect x="485" y="475" width="7" height="1" fill="#c8c8c8"/><rect x="485" y="488" width="7" height="1" fill="#c8c8c8"/><rect x="485" y="500" width="7" height="1" fill="#c8c8c8"/><rect x="485" y="513" width="7" height="1" fill="#c8c8c8"/><rect x="485" y="526" width="7" height="1" fill="#c8c8c8"/><rect x="485" y="539" width="7" height="1" fill="#c8c8c8"/><rect x="485" y="552" width="7" height="1" fill="#c8c8c8"/><rect x="485" y="565" width="7" height="1" fill="#c8c8c8"/><rect x="485" y="578" width="7" height="1" fill="#c8c8c8"/><rect x="485" y="591" width="7" height="1" fill="#c8c8c8"/><rect x="485" y="604" width="7" height="1" fill="#c8c8c8"/><rect x="485" y="616" width="7" height="1" fill="#c8c8c8"/><rect x="485" y="629" width="7" height="1" fill="#c8c8c8"/><rect x="485" y="642" width="7" height="1" fill="#c8c8c8"/><rect x="485" y="655" width="7" height="1" fill="#c8c8c8"/><rect x="485" y="668" width="7" height="1" fill="#c8c8c8"/><rect x="30" y="292" width="81" height="3" fill="#e4e400"/><rect x="34" y="295" width="1" height="2" fill="#e4e400"/><rect x="36" y="295" width="1" height="2" fill="#e4e400"/><rect x="36" y="291" width="1" height="1" fill="#e4e400"/><rect x="38" y="291" width="1" height="1" fill="#e4e400"/><rect x="41" y="295" width="1" height="2" fill="#e4e400"/><rect x="42" y="290" width="1" height="2" fill="#e4e400"/><rect x="43" y="295" width="1" height="2" fill="#e4e400"/><rect x="52" y="291" width="1" height="1" fill="#e4e400"/><rect x="56" y="295" width="1" height="2" fill="#e4e400"/><rect x="59" y="295" width="1" height="1" fill="#e4e400"/><rect x="61" y="295" width="1" height="2" fill="#e4e400"/><rect x="63" y="295" width="1" height="2" fill="#e4e400"/><rect x="63" y="290" width="1" height="2" fill="#e4e400"/><rect x="65" y="290" width="1" height="2" fill="#e4e400"/><rect x="67" y="295" width="1" height="1" fill="#e4e400"/><rect x="67" y="291" width="1" height="1" fill="#e4e400"/><rect x="69" y="295" width="1" height="2" fill="#e4e400"/><rect x="69" y="290" width="1" height="2" fill="#e4e400"/><rect x="73" y="295" width="1" height="2" fill="#e4e400"/><rect x="75" y="295" width="1" height="1" fill="#e4e400"/><rect x="75" y="290" width="1" height="2" fill="#e4e400"/><rect x="78" y="290" width="1" height="2" fill="#e4e400"/><rect x="80" y="295" width="1" height="1" fill="#e4e400"/><rect x="84" y="295" width="1" height="2" fill="#e4e400"/><rect x="86" y="295" width="1" height="2" fill="#e4e400"/><rect x="88" y="295" width="1" height="1" fill="#e4e400"/><rect x="90" y="290" width="1" height="2" fill="#e4e400"/><rect x="92" y="295" width="1" height="1" fill="#e4e400"/><rect x="95" y="295" width="1" height="1" fill="#e4e400"/><rect x="95" y="290" width="1" height="2" fill="#e4e400"/><rect x="99" y="290" width="1" height="2" fill="#e4e400"/><rect x="101" y="290" width="1" height="2" fill="#e4e400"/><rect x="103" y="290" width="1" height="2" fill="#e4e400"/><rect x="107" y="295" width="1" height="2" fill="#e4e400"/><rect x="107" y="291" width="1" height="1" fill="#e4e400"/><rect x="111" y="421" width="142" height="3" fill="#e4e400"/><rect x="112" y="424" width="1" height="1" fill="#e4e400"/><rect x="114" y="424" width="1" height="1" fill="#e4e400"/><rect x="114" y="420" width="1" height="1" fill="#e4e400"/><rect x="124" y="424" width="1" height="2" fill="#e4e400"/><rect x="128" y="424" width="1" height="1" fill="#e4e400"/><rect x="131" y="420" width="1" height="1" fill="#e4e400"/><rect x="136" y="424" width="1" height="2" fill="#e4e400"/><rect x="138" y="424" width="1" height="2" fill="#e4e400"/><rect x="141" y="424" width="1" height="1" fill="#e4e400"/><rect x="146" y="424" width="1" height="2" fill="#e4e400"/><rect x="149" y="424" width="1" height="2" fill="#e4e400"/><rect x="151" y="424" width="1" height="2" fill="#e4e400"/><rect x="153" y="424" width="1" height="1" fill="#e4e400"/><rect x="155" y="424" width="1" height="2" fill="#e4e400"/><rect x="156" y="420" width="1" height="1" fill="#e4e400"/><rect x="159" y="420" width="1" height="1" fill="#e4e400"/><rect x="160" y="424" width="1" height="2" fill="#e4e400"/><rect x="161" y="420" width="1" height="1" fill="#e4e400"/><rect x="163" y="424" width="1" height="2" fill="#e4e400"/><rect x="163" y="420" width="1" height="1" fill="#e4e400"/><rect x="170" y="424" width="1" height="2" fill="#e4e400"/><rect x="172" y="424" width="1" height="2" fill="#e4e400"/><rect x="175" y="424" width="1" height="1" fill="#e4e400"/><rect x="178" y="424" width="1" height="2" fill="#e4e400"/><rect x="180" y="424" width="1" height="2" fill="#e4e400"/><rect x="186" y="424" width="1" height="1" fill="#e4e400"/><rect x="189" y="424" width="1" height="1" fill="#e4e400"/><rect x="191" y="424" width="1" height="2" fill="#e4e400"/><rect x="193" y="420" width="1" height="1" fill="#e4e400"/><rect x="195" y="424" width="1" height="1" fill="#e4e400"/><rect x="198" y="424" width="1" height="2" fill="#e4e400"/><rect x="202" y="424" width="1" height="2" fill="#e4e400"/><rect x="207" y="424" width="1" height="1" fill="#e4e400"/><rect x="211" y="424" width="1" height="2" fill="#e4e400"/><rect x="213" y="424" width="1" height="1" fill="#e4e400"/><rect x="217" y="424" width="1" height="2" fill="#e4e400"/><rect x="223" y="424" width="1" height="2" fill="#e4e400"/><rect x="225" y="424" width="1" height="1" fill="#e4e400"/><rect x="225" y="420" width="1" height="1" fill="#e4e400"/><rect x="227" y="424" width="1" height="2" fill="#e4e400"/><rect x="229" y="424" width="1" height="1" fill="#e4e400"/><rect x="231" y="424" width="1" height="2" fill="#e4e400"/><rect x="234" y="424" width="1" height="2" fill="#e4e400"/><rect x="236" y="424" width="1" height="1" fill="#e4e400"/><rect x="242" y="424" width="1" height="1" fill="#e4e400"/><rect x="245" y="424" width="1" height="1" fill="#e4e400"/><rect x="250" y="424" width="1" height="2" fill="#e4e400"/><rect x="253" y="292" width="145" height="3" fill="#e4e400"/><rect x="254" y="290" width="1" height="2" fill="#e4e400"/><rect x="257" y="295" width="1" height="2" fill="#e4e400"/><rect x="257" y="290" width="1" height="2" fill="#e4e400"/><rect x="260" y="290" width="1" height="2" fill="#e4e400"/><rect x="261" y="295" width="1" height="1" fill="#e4e400"/><rect x="263" y="290" width="1" height="2" fill="#e4e400"/><rect x="268" y="291" width="1" height="1" fill="#e4e400"/><rect x="270" y="295" width="1" height="2" fill="#e4e400"/><rect x="272" y="295" width="1" height="2" fill="#e4e400"/><rect x="273" y="291" width="1" height="1" fill="#e4e400"/><rect x="285" y="290" width="1" height="2" fill="#e4e400"/><rect x="287" y="295" width="1" height="2" fill="#e4e400"/><rect x="289" y="295" width="1" height="1" fill="#e4e400"/><rect x="295" y="291" width="1" height="1" fill="#e4e400"/><rect x="298" y="295" width="1" height="2" fill="#e4e400"/><rect x="299" y="290" width="1" height="2" fill="#e4e400"/><rect x="304" y="290" width="1" height="2" fill="#e4e400"/><rect x="306" y="295" width="1" height="1" fill="#e4e400"/><rect x="306" y="290" width="1" height="2" fill="#e4e400"/><rect x="308" y="295" width="1" height="2" fill="#e4e400"/><rect x="309" y="291" width="1" height="1" fill="#e4e400"/><rect x="315" y="290" width="1" height="2" fill="#e4e400"/><rect x="316" y="295" width="1" height="2" fill="#e4e400"/><rect x="319" y="291" width="1" height="1" fill="#e4e400"/><rect x="321" y="295" width="1" height="1" fill="#e4e400"/><rect x="327" y="291" width="1" height="1" fill="#e4e400"/><rect x="329" y="295" width="1" height="2" fill="#e4e400"/><rect x="330" y="290" width="1" height="2" fill="#e4e400"/><rect x="337" y="295" width="1" height="1" fill="#e4e400"/><rect x="342" y="290" width="1" height="2" fill="#e4e400"/><rect x="345" y="295" width="1" height="2" fill="#e4e400"/><rect x="347" y="290" width="1" height="2" fill="#e4e400"/><rect x="348" y="295" width="1" height="2" fill="#e4e400"/><rect x="352" y="295" width="1" height="2" fill="#e4e400"/><rect x="354" y="295" width="1" height="2" fill="#e4e400"/><rect x="356" y="290" width="1" height="2" fill="#e4e400"/><rect x="363" y="295" width="1" height="1" fill="#e4e400"/><rect x="363" y="290" width="1" height="2" fill="#e4e400"/><rect x="367" y="290" width="1" height="2" fill="#e4e400"/><rect x="369" y="295" width="1" height="2" fill="#e4e400"/><rect x="371" y="290" width="1" height="2" fill="#e4e400"/><rect x="373" y="291" width="1" height="1" fill="#e4e400"/><rect x="380" y="295" width="1" height="2" fill="#e4e400"/><rect x="383" y="295" width="1" height="2" fill="#e4e400"/><rect x="386" y="295" width="1" height="1" fill="#e4e400"/><rect x="388" y="295" width="1" height="2" fill="#e4e400"/><rect x="391" y="290" width="1" height="2" fill="#e4e400"/><rect x="393" y="295" width="1" height="2" fill="#e4e400"/><rect x="395" y="295" width="1" height="1" fill="#e4e400"/><rect x="395" y="291" width="1" height="1" fill="#e4e400"/><rect x="398" y="421" width="143" height="3" fill="#e4e400"/><rect x="400" y="424" width="1" height="1" fill="#e4e400"/><rect x="402" y="424" width="1" height="2" fill="#e4e400"/><rect x="415" y="424" width="1" height="2" fill="#e4e400"/><rect x="417" y="424" width="1" height="1" fill="#e4e400"/><rect x="417" y="420" width="1" height="1" fill="#e4e400"/><rect x="419" y="424" width="1" height="2" fill="#e4e400"/><rect x="421" y="424" width="1" height="2" fill="#e4e400"/><rect x="423" y="420" width="1" height="1" fill="#e4e400"/><rect x="424" y="424" width="1" height="2" fill="#e4e400"/><rect x="426" y="424" width="1" height="1" fill="#e4e400"/><rect x="428" y="424" width="1" height="2" fill="#e4e400"/><rect x="430" y="424" width="1" height="2" fill="#e4e400"/><rect x="432" y="424" width="1" height="1" fill="#e4e400"/><rect x="436" y="424" width="1" height="1" fill="#e4e400"/><rect x="439" y="424" width="1" height="1" fill="#e4e400"/><rect x="441" y="424" width="1" height="2" fill="#e4e400"/><rect x="444" y="424" width="1" height="2" fill="#e4e400"/><rect x="448" y="424" width="1" height="2" fill="#e4e400"/><rect x="450" y="424" width="1" height="1" fill="#e4e400"/><rect x="452" y="424" width="1" height="2" fill="#e4e400"/><rect x="461" y="424" width="1" height="1" fill="#e4e400"/><rect x="463" y="424" width="1" height="2" fill="#e4e400"/><rect x="465" y="424" width="1" height="1" fill="#e4e400"/><rect x="469" y="424" width="1" height="2" fill="#e4e400"/><rect x="472" y="424" width="1" height="1" fill="#e4e400"/><rect x="475" y="424" width="1" height="2" fill="#e4e400"/><rect x="477" y="424" width="1" height="1" fill="#e4e400"/><rect x="483" y="424" width="1" height="2" fill="#e4e400"/><rect x="485" y="424" width="1" height="2" fill="#e4e400"/><rect x="487" y="424" width="1" height="2" fill="#e4e400"/><rect x="489" y="420" width="1" height="1" fill="#e4e400"/><rect x="494" y="424" width="1" height="2" fill="#e4e400"/><rect x="494" y="420" width="1" height="1" fill="#e4e400"/><rect x="499" y="424" width="1" height="2" fill="#e4e400"/><rect x="501" y="424" width="1" height="2" fill="#e4e400"/><rect x="504" y="424" width="1" height="1" fill="#e4e400"/><rect x="506" y="424" width="1" height="2" fill="#e4e400"/><rect x="510" y="424" width="1" height="1" fill="#e4e400"/><rect x="512" y="424" width="1" height="2" fill="#e4e400"/><rect x="514" y="424" width="1" height="1" fill="#e4e400"/><rect x="516" y="424" width="1" height="1" fill="#e4e400"/><rect x="522" y="424" width="1" height="1" fill="#e4e400"/><rect x="524" y="424" width="1" height="2" fill="#e4e400"/><rect x="526" y="420" width="1" height="1" fill="#e4e400"/><rect x="527" y="424" width="1" height="2" fill="#e4e400"/><rect x="530" y="424" width="1" height="1" fill="#e4e400"/><rect x="533" y="424" width="1" height="2" fill="#e4e400"/><rect x="535" y="424" width="1" height="2" fill="#e4e400"/><rect x="537" y="424" width="1" height="2" fill="#e4e400"/><rect x="539" y="424" width="1" height="1" fill="#e4e400"/><rect x="541" y="292" width="143" height="3" fill="#e4e400"/><rect x="552" y="291" width="1" height="1" fill="#e4e400"/><rect x="556" y="290" width="1" height="2" fill="#e4e400"/><rect x="559" y="295" width="1" height="1" fill="#e4e400"/><rect x="562" y="295" width="1" height="2" fill="#e4e400"/><rect x="566" y="295" width="1" height="1" fill="#e4e400"/><rect x="568" y="295" width="1" height="1" fill="#e4e400"/><rect x="568" y="290" width="1" height="2" fill="#e4e400"/><rect x="570" y="290" width="1" height="2" fill="#e4e400"/><rect x="572" y="291" width="1" height="1" fill="#e4e400"/><rect x="575" y="290" width="1" height="2" fill="#e4e400"/><rect x="579" y="290" width="1" height="2" fill="#e4e400"/><rect x="581" y="291" width="1" height="1" fill="#e4e400"/><rect x="583" y="291" width="1" height="1" fill="#e4e400"/><rect x="585" y="295" width="1" height="1" fill="#e4e400"/><rect x="585" y="291" width="1" height="1" fill="#e4e400"/><rect x="587" y="295" width="1" height="2" fill="#e4e400"/><rect x="590" y="291" width="1" height="1" fill="#e4e400"/><rect x="592" y="290" width="1" height="2" fill="#e4e400"/><rect x="594" y="290" width="1" height="2" fill="#e4e400"/><rect x="595" y="295" width="1" height="1" fill="#e4e400"/><rect x="599" y="295" width="1" height="2" fill="#e4e400"/><rect x="602" y="295" width="1" height="1" fill="#e4e400"/><rect x="604" y="290" width="1" height="2" fill="#e4e400"/><rect x="607" y="295" width="1" height="2" fill="#e4e400"/><rect x="610" y="295" width="1" height="1" fill="#e4e400"/><rect x="611" y="290" width="1" height="2" fill="#e4e400"/><rect x="614" y="290" width="1" height="2" fill="#e4e400"/><rect x="620" y="291" width="1" height="1" fill="#e4e400"/><rect x="621" y="295" width="1" height="1" fill="#e4e400"/><rect x="625" y="295" width="1" height="2" fill="#e4e400"/><rect x="627" y="290" width="1" height="2" fill="#e4e400"/><rect x="630" y="295" width="1" height="2" fill="#e4e400"/><rect x="630" y="290" width="1" height="2" fill="#e4e400"/><rect x="634" y="295" width="1" height="1" fill="#e4e400"/><rect x="637" y="295" width="1" height="2" fill="#e4e400"/><rect x="637" y="290" width="1" height="2" fill="#e4e400"/><rect x="641" y="295" width="1" height="1" fill="#e4e400"/><rect x="641" y="290" width="1" height="2" fill="#e4e400"/><rect x="643" y="295" width="1" height="1" fill="#e4e400"/><rect x="645" y="295" width="1" height="2" fill="#e4e400"/><rect x="646" y="291" width="1" height="1" fill="#e4e400"/><rect x="647" y="295" width="1" height="2" fill="#e4e400"/><rect x="649" y="290" width="1" height="2" fill="#e4e400"/><rect x="651" y="295" width="1" height="2" fill="#e4e400"/><rect x="652" y="290" width="1" height="2" fill="#e4e400"/><rect x="654" y="290" width="1" height="2" fill="#e4e400"/><rect x="657" y="295" width="1" height="2" fill="#e4e400"/><rect x="662" y="295" width="1" height="2" fill="#e4e400"/><rect x="663" y="290" width="1" height="2" fill="#e4e400"/><rect x="669" y="295" width="1" height="2" fill="#e4e400"/><rect x="669" y="290" width="1" height="2" fill="#e4e400"/><rect x="671" y="295" width="1" height="2" fill="#e4e400"/><rect x="671" y="290" width="1" height="2" fill="#e4e400"/><rect x="675" y="290" width="1" height="2" fill="#e4e400"/><rect x="676" y="295" width="1" height="1" fill="#e4e400"/><rect x="678" y="290" width="1" height="2" fill="#e4e400"/><rect x="682" y="291" width="1" height="1" fill="#e4e400"/><rect x="684" y="421" width="143" height="3" fill="#e4e400"/><rect x="685" y="424" width="1" height="1" fill="#e4e400"/><rect x="687" y="424" width="1" height="2" fill="#e4e400"/><rect x="691" y="424" width="1" height="2" fill="#e4e400"/><rect x="692" y="420" width="1" height="1" fill="#e4e400"/><rect x="693" y="424" width="1" height="2" fill="#e4e400"/><rect x="694" y="420" width="1" height="1" fill="#e4e400"/><rect x="695" y="424" width="1" height="2" fill="#e4e400"/><rect x="697" y="424" width="1" height="1" fill="#e4e400"/><rect x="700" y="424" width="1" height="2" fill="#e4e400"/><rect x="702" y="424" width="1" height="1" fill="#e4e400"/><rect x="704" y="424" width="1" height="2" fill="#e4e400"/><rect x="704" y="420" width="1" height="1" fill="#e4e400"/><rect x="706" y="424" width="1" height="1" fill="#e4e400"/><rect x="710" y="424" width="1" height="1" fill="#e4e400"/><rect x="715" y="424" width="1" height="2" fill="#e4e400"/><rect x="717" y="424" width="1" height="2" fill="#e4e400"/><rect x="719" y="424" width="1" height="1" fill="#e4e400"/><rect x="721" y="424" width="1" height="2" fill="#e4e400"/><rect x="724" y="420" width="1" height="1" fill="#e4e400"/><rect x="725" y="424" width="1" height="2" fill="#e4e400"/><rect x="726" y="420" width="1" height="1" fill="#e4e400"/><rect x="728" y="424" width="1" height="2" fill="#e4e400"/><rect x="730" y="424" width="1" height="2" fill="#e4e400"/><rect x="730" y="420" width="1" height="1" fill="#e4e400"/><rect x="732" y="424" width="1" height="1" fill="#e4e400"/><rect x="742" y="424" width="1" height="1" fill="#e4e400"/><rect x="742" y="420" width="1" height="1" fill="#e4e400"/><rect x="744" y="424" width="1" height="2" fill="#e4e400"/><rect x="747" y="424" width="1" height="2" fill="#e4e400"/><rect x="749" y="424" width="1" height="2" fill="#e4e400"/><rect x="755" y="424" width="1" height="1" fill="#e4e400"/><rect x="759" y="424" width="1" height="1" fill="#e4e400"/><rect x="761" y="424" width="1" height="2" fill="#e4e400"/><rect x="763" y="424" width="1" height="2" fill="#e4e400"/><rect x="766" y="424" width="1" height="2" fill="#e4e400"/><rect x="768" y="424" width="1" height="2" fill="#e4e400"/><rect x="770" y="424" width="1" height="1" fill="#e4e400"/><rect x="771" y="420" width="1" height="1" fill="#e4e400"/><rect x="772" y="424" width="1" height="2" fill="#e4e400"/><rect x="774" y="424" width="1" height="1" fill="#e4e400"/><rect x="776" y="424" width="1" height="2" fill="#e4e400"/><rect x="782" y="424" width="1" height="1" fill="#e4e400"/><rect x="784" y="424" width="1" height="2" fill="#e4e400"/><rect x="786" y="424" width="1" height="1" fill="#e4e400"/><rect x="788" y="424" width="1" height="1" fill="#e4e400"/><rect x="789" y="420" width="1" height="1" fill="#e4e400"/><rect x="791" y="424" width="1" height="2" fill="#e4e400"/><rect x="794" y="424" width="1" height="2" fill="#e4e400"/><rect x="796" y="424" width="1" height="2" fill="#e4e400"/><rect x="798" y="424" width="1" height="2" fill="#e4e400"/><rect x="803" y="424" width="1" height="2" fill="#e4e400"/><rect x="806" y="424" width="1" height="2" fill="#e4e400"/><rect x="809" y="424" width="1" height="2" fill="#e4e400"/><rect x="811" y="424" width="1" height="2" fill="#e4e400"/><rect x="813" y="424" width="1" height="2" fill="#e4e400"/><rect x="815" y="424" width="1" height="1" fill="#e4e400"/><rect x="818" y="424" width="1" height="2" fill="#e4e400"/><rect x="820" y="424" width="1" height="1" fill="#e4e400"/><rect x="824" y="424" width="1" height="2" fill="#e4e400"/><rect x="825" y="420" width="1" height="1" fill="#e4e400"/><rect x="827" y="292" width="121" height="3" fill="#e4e400"/><rect x="830" y="295" width="1" height="2" fill="#e4e400"/><rect x="831" y="290" width="1" height="2" fill="#e4e400"/><rect x="836" y="291" width="1" height="1" fill="#e4e400"/><rect x="839" y="290" width="1" height="2" fill="#e4e400"/><rect x="840" y="295" width="1" height="2" fill="#e4e400"/><rect x="846" y="295" width="1" height="2" fill="#e4e400"/><rect x="847" y="291" width="1" height="1" fill="#e4e400"/><rect x="849" y="290" width="1" height="2" fill="#e4e400"/><rect x="850" y="295" width="1" height="2" fill="#e4e400"/><rect x="852" y="295" width="1" height="2" fill="#e4e400"/><rect x="855" y="295" width="1" height="1" fill="#e4e400"/><rect x="857" y="295" width="1" height="1" fill="#e4e400"/><rect x="859" y="295" width="1" height="2" fill="#e4e400"/><rect x="860" y="290" width="1" height="2" fill="#e4e400"/><rect x="863" y="295" width="1" height="2" fill="#e4e400"/><rect x="864" y="291" width="1" height="1" fill="#e4e400"/><rect x="866" y="291" width="1" height="1" fill="#e4e400"/><rect x="870" y="295" width="1" height="1" fill="#e4e400"/><rect x="875" y="291" width="1" height="1" fill="#e4e400"/><rect x="878" y="290" width="1" height="2" fill="#e4e400"/><rect x="883" y="295" width="1" height="1" fill="#e4e400"/><rect x="888" y="291" width="1" height="1" fill="#e4e400"/><rect x="892" y="290" width="1" height="2" fill="#e4e400"/><rect x="894" y="295" width="1" height="2" fill="#e4e400"/><rect x="896" y="295" width="1" height="1" fill="#e4e400"/><rect x="899" y="290" width="1" height="2" fill="#e4e400"/><rect x="900" y="295" width="1" height="2" fill="#e4e400"/><rect x="903" y="295" width="1" height="2" fill="#e4e400"/><rect x="906" y="295" width="1" height="1" fill="#e4e400"/><rect x="906" y="291" width="1" height="1" fill="#e4e400"/><rect x="909" y="295" width="1" height="1" fill="#e4e400"/><rect x="910" y="290" width="1" height="2" fill="#e4e400"/><rect x="914" y="295" width="1" height="2" fill="#e4e400"/><rect x="916" y="295" width="1" height="2" fill="#e4e400"/><rect x="918" y="291" width="1" height="1" fill="#e4e400"/><rect x="922" y="295" width="1" height="1" fill="#e4e400"/><rect x="927" y="295" width="1" height="2" fill="#e4e400"/><rect x="933" y="290" width="1" height="2" fill="#e4e400"/><rect x="938" y="291" width="1" height="1" fill="#e4e400"/><rect x="943" y="295" width="1" height="1" fill="#e4e400"/><rect x="943" y="290" width="1" height="2" fill="#e4e400"/><rect x="111" y="292" width="1" height="130" fill="#e4e400"/><rect x="253" y="292" width="1" height="130" fill="#e4e400"/><rect x="398" y="292" width="1" height="130" fill="#e4e400"/><rect x="541" y="292" width="1" height="130" fill="#e4e400"/><rect x="684" y="292" width="1" height="130" fill="#e4e400"/><rect x="827" y="292" width="1" height="130" fill="#e4e400"/><rect x="43" y="295" width="1" height="11" fill="#e4e400"/><rect x="42" y="295" width="1" height="5" fill="#e4e400"/><rect x="44" y="295" width="1" height="3" fill="#e4e400"/><rect x="327" y="295" width="1" height="9" fill="#e4e400"/><rect x="326" y="295" width="1" height="4" fill="#e4e400"/><rect x="328" y="295" width="1" height="3" fill="#e4e400"/><rect x="614" y="295" width="1" height="7" fill="#e4e400"/><rect x="613" y="295" width="1" height="3" fill="#e4e400"/><rect x="615" y="295" width="1" height="2" fill="#e4e400"/><rect x="901" y="295" width="1" height="9" fill="#e4e400"/><rect x="900" y="295" width="1" height="4" fill="#e4e400"/><rect x="902" y="295" width="1" height="3" fill="#e4e400"/><rect x="30" y="486" width="81" height="3" fill="#00dc00"/><rect x="34" y="489" width="1" height="2" fill="#00dc00"/><rect x="36" y="489" width="1" height="2" fill="#00dc00"/><rect x="36" y="484" width="1" height="2" fill="#00dc00"/><rect x="37" y="484" width="1" height="2" fill="#00dc00"/><rect x="38" y="489" width="1" height="3" fill="#00dc00"/><rect x="39" y="489" width="1" height="1" fill="#00dc00"/><rect x="39" y="485" width="1" height="1" fill="#00dc00"/><rect x="41" y="489" width="1" height="2" fill="#00dc00"/><rect x="41" y="484" width="1" height="2" fill="#00dc00"/><rect x="43" y="489" width="1" height="1" fill="#00dc00"/><rect x="44" y="489" width="1" height="2" fill="#00dc00"/><rect x="44" y="485" width="1" height="1" fill="#00dc00"/><rect x="45" y="489" width="1" height="1" fill="#00dc00"/><rect x="46" y="484" width="1" height="2" fill="#00dc00"/><rect x="47" y="489" width="1" height="1" fill="#00dc00"/><rect x="48" y="489" width="1" height="2" fill="#00dc00"/><rect x="49" y="484" width="1" height="2" fill="#00dc00"/><rect x="50" y="484" width="1" height="2" fill="#00dc00"/><rect x="53" y="484" width="1" height="2" fill="#00dc00"/><rect x="56" y="489" width="1" height="2" fill="#00dc00"/><rect x="57" y="484" width="1" height="2" fill="#00dc00"/><rect x="58" y="489" width="1" height="1" fill="#00dc00"/><rect x="59" y="489" width="1" height="2" fill="#00dc00"/><rect x="59" y="485" width="1" height="1" fill="#00dc00"/><rect x="60" y="483" width="1" height="3" fill="#00dc00"/><rect x="61" y="484" width="1" height="2" fill="#00dc00"/><rect x="63" y="489" width="1" height="2" fill="#00dc00"/><rect x="65" y="489" width="1" height="2" fill="#00dc00"/><rect x="66" y="489" width="1" height="2" fill="#00dc00"/><rect x="67" y="489" width="1" height="4" fill="#00dc00"/><rect x="67" y="484" width="1" height="2" fill="#00dc00"/><rect x="68" y="489" width="1" height="1" fill="#00dc00"/><rect x="71" y="489" width="1" height="1" fill="#00dc00"/><rect x="71" y="484" width="1" height="2" fill="#00dc00"/><rect x="72" y="489" width="1" height="2" fill="#00dc00"/><rect x="74" y="489" width="1" height="2" fill="#00dc00"/><rect x="74" y="484" width="1" height="2" fill="#00dc00"/><rect x="76" y="489" width="1" height="3" fill="#00dc00"/><rect x="77" y="489" width="1" height="1" fill="#00dc00"/><rect x="79" y="489" width="1" height="3" fill="#00dc00"/><rect x="80" y="484" width="1" height="2" fill="#00dc00"/><rect x="81" y="489" width="1" height="2" fill="#00dc00"/><rect x="82" y="489" width="1" height="2" fill="#00dc00"/><rect x="82" y="485" width="1" height="1" fill="#00dc00"/><rect x="83" y="485" width="1" height="1" fill="#00dc00"/><rect x="84" y="489" width="1" height="2" fill="#00dc00"/><rect x="84" y="485" width="1" height="1" fill="#00dc00"/><rect x="85" y="489" width="1" height="1" fill="#00dc00"/><rect x="85" y="485" width="1" height="1" fill="#00dc00"/><rect x="88" y="489" width="1" height="2" fill="#00dc00"/><rect x="89" y="489" width="1" height="1" fill="#00dc00"/><rect x="90" y="485" width="1" height="1" fill="#00dc00"/><rect x="92" y="485" width="1" height="1" fill="#00dc00"/><rect x="94" y="484" width="1" height="2" fill="#00dc00"/><rect x="95" y="484" width="1" height="2" fill="#00dc00"/><rect x="96" y="484" width="1" height="2" fill="#00dc00"/><rect x="100" y="484" width="1" height="2" fill="#00dc00"/><rect x="102" y="489" width="1" height="2" fill="#00dc00"/><rect x="102" y="484" width="1" height="2" fill="#00dc00"/><rect x="104" y="489" width="1" height="2" fill="#00dc00"/><rect x="104" y="484" width="1" height="2" fill="#00dc00"/><rect x="105" y="489" width="1" height="2" fill="#00dc00"/><rect x="105" y="483" width="1" height="3" fill="#00dc00"/><rect x="106" y="489" width="1" height="2" fill="#00dc00"/><rect x="107" y="489" width="1" height="4" fill="#00dc00"/><rect x="107" y="485" width="1" height="1" fill="#00dc00"/><rect x="108" y="489" width="1" height="1" fill="#00dc00"/><rect x="109" y="489" width="1" height="2" fill="#00dc00"/><rect x="111" y="553" width="141" height="2" fill="#00dc00"/><rect x="112" y="555" width="1" height="2" fill="#00dc00"/><rect x="112" y="552" width="1" height="1" fill="#00dc00"/><rect x="113" y="551" width="1" height="2" fill="#00dc00"/><rect x="115" y="555" width="1" height="2" fill="#00dc00"/><rect x="115" y="551" width="1" height="2" fill="#00dc00"/><rect x="116" y="555" width="1" height="2" fill="#00dc00"/><rect x="116" y="551" width="1" height="2" fill="#00dc00"/><rect x="117" y="555" width="1" height="2" fill="#00dc00"/><rect x="118" y="551" width="1" height="2" fill="#00dc00"/><rect x="121" y="551" width="1" height="2" fill="#00dc00"/><rect x="122" y="555" width="1" height="3" fill="#00dc00"/><rect x="122" y="551" width="1" height="2" fill="#00dc00"/><rect x="124" y="555" width="1" height="2" fill="#00dc00"/><rect x="124" y="550" width="1" height="3" fill="#00dc00"/><rect x="125" y="555" width="1" height="1" fill="#00dc00"/><rect x="127" y="555" width="1" height="1" fill="#00dc00"/><rect x="127" y="552" width="1" height="1" fill="#00dc00"/><rect x="128" y="555" width="1" height="1" fill="#00dc00"/><rect x="129" y="551" width="1" height="2" fill="#00dc00"/><rect x="131" y="555" width="1" height="2" fill="#00dc00"/><rect x="132" y="555" width="1" height="2" fill="#00dc00"/><rect x="132" y="551" width="1" height="2" fill="#00dc00"/><rect x="133" y="551" width="1" height="2" fill="#00dc00"/><rect x="135" y="549" width="1" height="4" fill="#00dc00"/><rect x="136" y="552" width="1" height="1" fill="#00dc00"/><rect x="138" y="551" width="1" height="2" fill="#00dc00"/><rect x="139" y="552" width="1" height="1" fill="#00dc00"/><rect x="140" y="555" width="1" height="1" fill="#00dc00"/><rect x="140" y="551" width="1" height="2" fill="#00dc00"/><rect x="141" y="555" width="1" height="2" fill="#00dc00"/><rect x="143" y="555" width="1" height="2" fill="#00dc00"/><rect x="143" y="552" width="1" height="1" fill="#00dc00"/><rect x="144" y="551" width="1" height="2" fill="#00dc00"/><rect x="145" y="552" width="1" height="1" fill="#00dc00"/><rect x="147" y="551" width="1" height="2" fill="#00dc00"/><rect x="148" y="555" width="1" height="1" fill="#00dc00"/><rect x="148" y="551" width="1" height="2" fill="#00dc00"/><rect x="149" y="555" width="1" height="1" fill="#00dc00"/><rect x="150" y="552" width="1" height="1" fill="#00dc00"/><rect x="151" y="555" width="1" height="2" fill="#00dc00"/><rect x="151" y="552" width="1" height="1" fill="#00dc00"/><rect x="152" y="555" width="1" height="1" fill="#00dc00"/><rect x="153" y="555" width="1" height="2" fill="#00dc00"/><rect x="154" y="551" width="1" height="2" fill="#00dc00"/><rect x="156" y="552" width="1" height="1" fill="#00dc00"/><rect x="157" y="555" width="1" height="2" fill="#00dc00"/><rect x="158" y="555" width="1" height="2" fill="#00dc00"/><rect x="158" y="549" width="1" height="4" fill="#00dc00"/><rect x="159" y="551" width="1" height="2" fill="#00dc00"/><rect x="160" y="551" width="1" height="2" fill="#00dc00"/><rect x="161" y="555" width="1" height="2" fill="#00dc00"/><rect x="161" y="551" width="1" height="2" fill="#00dc00"/><rect x="162" y="555" width="1" height="4" fill="#00dc00"/><rect x="162" y="551" width="1" height="2" fill="#00dc00"/><rect x="164" y="555" width="1" height="2" fill="#00dc00"/><rect x="164" y="551" width="1" height="2" fill="#00dc00"/><rect x="165" y="555" width="1" height="2" fill="#00dc00"/><rect x="165" y="552" width="1" height="1" fill="#00dc00"/><rect x="166" y="555" width="1" height="2" fill="#00dc00"/><rect x="166" y="551" width="1" height="2" fill="#00dc00"/><rect x="167" y="555" width="1" height="2" fill="#00dc00"/><rect x="167" y="552" width="1" height="1" fill="#00dc00"/><rect x="169" y="552" width="1" height="1" fill="#00dc00"/><rect x="170" y="550" width="1" height="3" fill="#00dc00"/><rect x="171" y="555" width="1" height="1" fill="#00dc00"/><rect x="174" y="555" width="1" height="2" fill="#00dc00"/><rect x="174" y="552" width="1" height="1" fill="#00dc00"/><rect x="175" y="551" width="1" height="2" fill="#00dc00"/><rect x="176" y="555" width="1" height="4" fill="#00dc00"/><rect x="176" y="551" width="1" height="2" fill="#00dc00"/><rect x="177" y="551" width="1" height="2" fill="#00dc00"/><rect x="178" y="555" width="1" height="1" fill="#00dc00"/><rect x="178" y="551" width="1" height="2" fill="#00dc00"/><rect x="179" y="555" width="1" height="1" fill="#00dc00"/><rect x="180" y="555" width="1" height="2" fill="#00dc00"/><rect x="180" y="551" width="1" height="2" fill="#00dc00"/><rect x="181" y="555" width="1" height="2" fill="#00dc00"/><rect x="181" y="551" width="1" height="2" fill="#00dc00"/><rect x="182" y="555" width="1" height="2" fill="#00dc00"/><rect x="183" y="555" width="1" height="2" fill="#00dc00"/><rect x="183" y="551" width="1" height="2" fill="#00dc00"/><rect x="184" y="555" width="1" height="2" fill="#00dc00"/><rect x="184" y="551" width="1" height="2" fill="#00dc00"/><rect x="186" y="551" width="1" height="2" fill="#00dc00"/><rect x="187" y="555" width="1" height="2" fill="#00dc00"/><rect x="188" y="555" width="1" height="4" fill="#00dc00"/><rect x="190" y="551" width="1" height="2" fill="#00dc00"/><rect x="191" y="551" width="1" height="2" fill="#00dc00"/><rect x="192" y="555" width="1" height="2" fill="#00dc00"/><rect x="192" y="550" width="1" height="3" fill="#00dc00"/><rect x="193" y="555" width="1" height="2" fill="#00dc00"/><rect x="193" y="549" width="1" height="4" fill="#00dc00"/><rect x="194" y="552" width="1" height="1" fill="#00dc00"/><rect x="195" y="551" width="1" height="2" fill="#00dc00"/><rect x="196" y="551" width="1" height="2" fill="#00dc00"/><rect x="197" y="555" width="1" height="3" fill="#00dc00"/><rect x="198" y="552" width="1" height="1" fill="#00dc00"/><rect x="199" y="555" width="1" height="2" fill="#00dc00"/><rect x="199" y="551" width="1" height="2" fill="#00dc00"/><rect x="200" y="551" width="1" height="2" fill="#00dc00"/><rect x="202" y="555" width="1" height="2" fill="#00dc00"/><rect x="202" y="551" width="1" height="2" fill="#00dc00"/><rect x="204" y="551" width="1" height="2" fill="#00dc00"/><rect x="205" y="555" width="1" height="2" fill="#00dc00"/><rect x="205" y="551" width="1" height="2" fill="#00dc00"/><rect x="207" y="555" width="1" height="2" fill="#00dc00"/><rect x="207" y="552" width="1" height="1" fill="#00dc00"/><rect x="209" y="555" width="1" height="2" fill="#00dc00"/><rect x="210" y="555" width="1" height="2" fill="#00dc00"/><rect x="210" y="549" width="1" height="4" fill="#00dc00"/><rect x="212" y="555" width="1" height="1" fill="#00dc00"/><rect x="212" y="552" width="1" height="1" fill="#00dc00"/><rect x="213" y="552" width="1" height="1" fill="#00dc00"/><rect x="214" y="555" width="1" height="2" fill="#00dc00"/><rect x="214" y="551" width="1" height="2" fill="#00dc00"/><rect x="215" y="555" width="1" height="1" fill="#00dc00"/><rect x="215" y="551" width="1" height="2" fill="#00dc00"/><rect x="218" y="555" width="1" height="2" fill="#00dc00"/><rect x="219" y="555" width="1" height="2" fill="#00dc00"/><rect x="219" y="551" width="1" height="2" fill="#00dc00"/><rect x="221" y="555" width="1" height="1" fill="#00dc00"/><rect x="223" y="551" width="1" height="2" fill="#00dc00"/><rect x="224" y="555" width="1" height="2" fill="#00dc00"/><rect x="224" y="551" width="1" height="2" fill="#00dc00"/><rect x="225" y="555" width="1" height="2" fill="#00dc00"/><rect x="225" y="551" width="1" height="2" fill="#00dc00"/><rect x="226" y="555" width="1" height="1" fill="#00dc00"/><rect x="229" y="555" width="1" height="1" fill="#00dc00"/><rect x="231" y="555" width="1" height="2" fill="#00dc00"/><rect x="231" y="551" width="1" height="2" fill="#00dc00"/><rect x="233" y="552" width="1" height="1" fill="#00dc00"/><rect x="234" y="549" width="1" height="4" fill="#00dc00"/><rect x="237" y="551" width="1" height="2" fill="#00dc00"/><rect x="238" y="552" width="1" height="1" fill="#00dc00"/><rect x="239" y="555" width="1" height="2" fill="#00dc00"/><rect x="239" y="551" width="1" height="2" fill="#00dc00"/><rect x="242" y="555" width="1" height="2" fill="#00dc00"/><rect x="244" y="555" width="1" height="1" fill="#00dc00"/><rect x="244" y="551" width="1" height="2" fill="#00dc00"/><rect x="246" y="555" width="1" height="3" fill="#00dc00"/><rect x="249" y="555" width="1" height="2" fill="#00dc00"/><rect x="249" y="551" width="1" height="2" fill="#00dc00"/><rect x="250" y="555" width="1" height="2" fill="#00dc00"/><rect x="250" y="552" width="1" height="1" fill="#00dc00"/><rect x="252" y="486" width="146" height="3" fill="#00dc00"/><rect x="253" y="489" width="1" height="2" fill="#00dc00"/><rect x="253" y="484" width="1" height="2" fill="#00dc00"/><rect x="254" y="484" width="1" height="2" fill="#00dc00"/><rect x="255" y="489" width="1" height="1" fill="#00dc00"/><rect x="255" y="485" width="1" height="1" fill="#00dc00"/><rect x="256" y="484" width="1" height="2" fill="#00dc00"/><rect x="257" y="489" width="1" height="2" fill="#00dc00"/><rect x="260" y="489" width="1" height="1" fill="#00dc00"/><rect x="260" y="484" width="1" height="2" fill="#00dc00"/><rect x="262" y="489" width="1" height="2" fill="#00dc00"/><rect x="263" y="489" width="1" height="1" fill="#00dc00"/><rect x="265" y="489" width="1" height="1" fill="#00dc00"/><rect x="265" y="484" width="1" height="2" fill="#00dc00"/><rect x="267" y="485" width="1" height="1" fill="#00dc00"/><rect x="268" y="489" width="1" height="3" fill="#00dc00"/><rect x="269" y="489" width="1" height="3" fill="#00dc00"/><rect x="271" y="489" width="1" height="3" fill="#00dc00"/><rect x="272" y="489" width="1" height="2" fill="#00dc00"/><rect x="274" y="484" width="1" height="2" fill="#00dc00"/><rect x="276" y="489" width="1" height="2" fill="#00dc00"/><rect x="276" y="485" width="1" height="1" fill="#00dc00"/><rect x="277" y="489" width="1" height="2" fill="#00dc00"/><rect x="279" y="489" width="1" height="1" fill="#00dc00"/><rect x="279" y="485" width="1" height="1" fill="#00dc00"/><rect x="280" y="484" width="1" height="2" fill="#00dc00"/><rect x="281" y="489" width="1" height="2" fill="#00dc00"/><rect x="281" y="484" width="1" height="2" fill="#00dc00"/><rect x="282" y="489" width="1" height="2" fill="#00dc00"/><rect x="283" y="489" width="1" height="2" fill="#00dc00"/><rect x="283" y="484" width="1" height="2" fill="#00dc00"/><rect x="285" y="484" width="1" height="2" fill="#00dc00"/><rect x="286" y="484" width="1" height="2" fill="#00dc00"/><rect x="288" y="484" width="1" height="2" fill="#00dc00"/><rect x="289" y="483" width="1" height="3" fill="#00dc00"/><rect x="290" y="489" width="1" height="1" fill="#00dc00"/><rect x="290" y="484" width="1" height="2" fill="#00dc00"/><rect x="291" y="489" width="1" height="1" fill="#00dc00"/><rect x="291" y="484" width="1" height="2" fill="#00dc00"/><rect x="292" y="489" width="1" height="2" fill="#00dc00"/><rect x="292" y="484" width="1" height="2" fill="#00dc00"/><rect x="294" y="485" width="1" height="1" fill="#00dc00"/><rect x="295" y="489" width="1" height="2" fill="#00dc00"/><rect x="297" y="489" width="1" height="2" fill="#00dc00"/><rect x="298" y="489" width="1" height="2" fill="#00dc00"/><rect x="299" y="489" width="1" height="1" fill="#00dc00"/><rect x="299" y="485" width="1" height="1" fill="#00dc00"/><rect x="300" y="489" width="1" height="2" fill="#00dc00"/><rect x="302" y="489" width="1" height="2" fill="#00dc00"/><rect x="302" y="484" width="1" height="2" fill="#00dc00"/><rect x="304" y="489" width="1" height="3" fill="#00dc00"/><rect x="304" y="484" width="1" height="2" fill="#00dc00"/><rect x="305" y="484" width="1" height="2" fill="#00dc00"/><rect x="306" y="485" width="1" height="1" fill="#00dc00"/><rect x="308" y="484" width="1" height="2" fill="#00dc00"/><rect x="309" y="489" width="1" height="2" fill="#00dc00"/><rect x="309" y="484" width="1" height="2" fill="#00dc00"/><rect x="310" y="489" width="1" height="2" fill="#00dc00"/><rect x="311" y="484" width="1" height="2" fill="#00dc00"/><rect x="314" y="489" width="1" height="2" fill="#00dc00"/><rect x="315" y="489" width="1" height="2" fill="#00dc00"/><rect x="316" y="485" width="1" height="1" fill="#00dc00"/><rect x="318" y="489" width="1" height="2" fill="#00dc00"/><rect x="319" y="484" width="1" height="2" fill="#00dc00"/><rect x="320" y="489" width="1" height="2" fill="#00dc00"/><rect x="320" y="484" width="1" height="2" fill="#00dc00"/><rect x="321" y="484" width="1" height="2" fill="#00dc00"/><rect x="323" y="489" width="1" height="4" fill="#00dc00"/><rect x="323" y="483" width="1" height="3" fill="#00dc00"/><rect x="326" y="484" width="1" height="2" fill="#00dc00"/><rect x="327" y="489" width="1" height="3" fill="#00dc00"/><rect x="327" y="484" width="1" height="2" fill="#00dc00"/><rect x="328" y="489" width="1" height="2" fill="#00dc00"/><rect x="328" y="484" width="1" height="2" fill="#00dc00"/><rect x="331" y="485" width="1" height="1" fill="#00dc00"/><rect x="334" y="484" width="1" height="2" fill="#00dc00"/><rect x="335" y="489" width="1" height="2" fill="#00dc00"/><rect x="335" y="485" width="1" height="1" fill="#00dc00"/><rect x="337" y="489" width="1" height="4" fill="#00dc00"/><rect x="338" y="489" width="1" height="2" fill="#00dc00"/><rect x="338" y="484" width="1" height="2" fill="#00dc00"/><rect x="339" y="489" width="1" height="3" fill="#00dc00"/><rect x="339" y="485" width="1" height="1" fill="#00dc00"/><rect x="341" y="489" width="1" height="2" fill="#00dc00"/><rect x="341" y="484" width="1" height="2" fill="#00dc00"/><rect x="343" y="489" width="1" height="2" fill="#00dc00"/><rect x="343" y="484" width="1" height="2" fill="#00dc00"/><rect x="344" y="489" width="1" height="2" fill="#00dc00"/><rect x="345" y="489" width="1" height="2" fill="#00dc00"/><rect x="347" y="483" width="1" height="3" fill="#00dc00"/><rect x="348" y="489" width="1" height="2" fill="#00dc00"/><rect x="350" y="489" width="1" height="1" fill="#00dc00"/><rect x="351" y="484" width="1" height="2" fill="#00dc00"/><rect x="352" y="489" width="1" height="2" fill="#00dc00"/><rect x="352" y="485" width="1" height="1" fill="#00dc00"/><rect x="353" y="484" width="1" height="2" fill="#00dc00"/><rect x="354" y="489" width="1" height="4" fill="#00dc00"/><rect x="354" y="484" width="1" height="2" fill="#00dc00"/><rect x="355" y="489" width="1" height="2" fill="#00dc00"/><rect x="356" y="489" width="1" height="2" fill="#00dc00"/><rect x="358" y="489" width="1" height="2" fill="#00dc00"/><rect x="359" y="489" width="1" height="2" fill="#00dc00"/><rect x="359" y="485" width="1" height="1" fill="#00dc00"/><rect x="360" y="489" width="1" height="2" fill="#00dc00"/><rect x="361" y="484" width="1" height="2" fill="#00dc00"/><rect x="363" y="489" width="1" height="4" fill="#00dc00"/><rect x="364" y="484" width="1" height="2" fill="#00dc00"/><rect x="366" y="489" width="1" height="2" fill="#00dc00"/><rect x="367" y="484" width="1" height="2" fill="#00dc00"/><rect x="369" y="489" width="1" height="1" fill="#00dc00"/><rect x="370" y="489" width="1" height="4" fill="#00dc00"/><rect x="371" y="489" width="1" height="2" fill="#00dc00"/><rect x="371" y="484" width="1" height="2" fill="#00dc00"/><rect x="373" y="489" width="1" height="1" fill="#00dc00"/><rect x="374" y="489" width="1" height="2" fill="#00dc00"/><rect x="374" y="485" width="1" height="1" fill="#00dc00"/><rect x="375" y="484" width="1" height="2" fill="#00dc00"/><rect x="378" y="489" width="1" height="2" fill="#00dc00"/><rect x="379" y="489" width="1" height="2" fill="#00dc00"/><rect x="379" y="485" width="1" height="1" fill="#00dc00"/><rect x="381" y="485" width="1" height="1" fill="#00dc00"/><rect x="383" y="489" width="1" height="4" fill="#00dc00"/><rect x="384" y="483" width="1" height="3" fill="#00dc00"/><rect x="385" y="489" width="1" height="2" fill="#00dc00"/><rect x="385" y="483" width="1" height="3" fill="#00dc00"/><rect x="386" y="489" width="1" height="2" fill="#00dc00"/><rect x="387" y="489" width="1" height="2" fill="#00dc00"/><rect x="388" y="483" width="1" height="3" fill="#00dc00"/><rect x="389" y="489" width="1" height="3" fill="#00dc00"/><rect x="389" y="484" width="1" height="2" fill="#00dc00"/><rect x="390" y="489" width="1" height="1" fill="#00dc00"/><rect x="391" y="489" width="1" height="2" fill="#00dc00"/><rect x="395" y="489" width="1" height="2" fill="#00dc00"/><rect x="396" y="489" width="1" height="2" fill="#00dc00"/><rect x="396" y="483" width="1" height="3" fill="#00dc00"/><rect x="398" y="553" width="143" height="2" fill="#00dc00"/><rect x="399" y="555" width="1" height="2" fill="#00dc00"/><rect x="399" y="549" width="1" height="4" fill="#00dc00"/><rect x="402" y="550" width="1" height="3" fill="#00dc00"/><rect x="404" y="555" width="1" height="2" fill="#00dc00"/><rect x="405" y="555" width="1" height="2" fill="#00dc00"/><rect x="405" y="551" width="1" height="2" fill="#00dc00"/><rect x="406" y="555" width="1" height="1" fill="#00dc00"/><rect x="407" y="555" width="1" height="2" fill="#00dc00"/><rect x="407" y="551" width="1" height="2" fill="#00dc00"/><rect x="408" y="552" width="1" height="1" fill="#00dc00"/><rect x="409" y="555" width="1" height="2" fill="#00dc00"/><rect x="410" y="551" width="1" height="2" fill="#00dc00"/><rect x="411" y="555" width="1" height="2" fill="#00dc00"/><rect x="415" y="555" width="1" height="2" fill="#00dc00"/><rect x="416" y="550" width="1" height="3" fill="#00dc00"/><rect x="417" y="555" width="1" height="2" fill="#00dc00"/><rect x="418" y="555" width="1" height="2" fill="#00dc00"/><rect x="418" y="551" width="1" height="2" fill="#00dc00"/><rect x="419" y="555" width="1" height="2" fill="#00dc00"/><rect x="419" y="551" width="1" height="2" fill="#00dc00"/><rect x="420" y="555" width="1" height="4" fill="#00dc00"/><rect x="421" y="551" width="1" height="2" fill="#00dc00"/><rect x="423" y="555" width="1" height="1" fill="#00dc00"/><rect x="424" y="552" width="1" height="1" fill="#00dc00"/><rect x="425" y="555" width="1" height="2" fill="#00dc00"/><rect x="426" y="555" width="1" height="2" fill="#00dc00"/><rect x="426" y="551" width="1" height="2" fill="#00dc00"/><rect x="427" y="551" width="1" height="2" fill="#00dc00"/><rect x="428" y="551" width="1" height="2" fill="#00dc00"/><rect x="429" y="555" width="1" height="2" fill="#00dc00"/><rect x="429" y="552" width="1" height="1" fill="#00dc00"/><rect x="433" y="551" width="1" height="2" fill="#00dc00"/><rect x="434" y="551" width="1" height="2" fill="#00dc00"/><rect x="435" y="555" width="1" height="1" fill="#00dc00"/><rect x="436" y="555" width="1" height="4" fill="#00dc00"/><rect x="436" y="551" width="1" height="2" fill="#00dc00"/><rect x="437" y="555" width="1" height="2" fill="#00dc00"/><rect x="438" y="555" width="1" height="4" fill="#00dc00"/><rect x="439" y="555" width="1" height="2" fill="#00dc00"/><rect x="440" y="555" width="1" height="1" fill="#00dc00"/><rect x="441" y="555" width="1" height="2" fill="#00dc00"/><rect x="441" y="551" width="1" height="2" fill="#00dc00"/><rect x="443" y="555" width="1" height="2" fill="#00dc00"/><rect x="444" y="549" width="1" height="4" fill="#00dc00"/><rect x="445" y="551" width="1" height="2" fill="#00dc00"/><rect x="446" y="555" width="1" height="2" fill="#00dc00"/><rect x="447" y="555" width="1" height="1" fill="#00dc00"/><rect x="447" y="551" width="1" height="2" fill="#00dc00"/><rect x="448" y="555" width="1" height="2" fill="#00dc00"/><rect x="449" y="552" width="1" height="1" fill="#00dc00"/><rect x="450" y="555" width="1" height="2" fill="#00dc00"/><rect x="450" y="551" width="1" height="2" fill="#00dc00"/><rect x="451" y="555" width="1" height="1" fill="#00dc00"/><rect x="452" y="551" width="1" height="2" fill="#00dc00"/><rect x="453" y="555" width="1" height="2" fill="#00dc00"/><rect x="453" y="550" width="1" height="3" fill="#00dc00"/><rect x="454" y="555" width="1" height="1" fill="#00dc00"/><rect x="456" y="555" width="1" height="3" fill="#00dc00"/><rect x="456" y="552" width="1" height="1" fill="#00dc00"/><rect x="457" y="555" width="1" height="2" fill="#00dc00"/><rect x="458" y="555" width="1" height="1" fill="#00dc00"/><rect x="458" y="551" width="1" height="2" fill="#00dc00"/><rect x="460" y="555" width="1" height="2" fill="#00dc00"/><rect x="460" y="551" width="1" height="2" fill="#00dc00"/><rect x="461" y="555" width="1" height="3" fill="#00dc00"/><rect x="462" y="551" width="1" height="2" fill="#00dc00"/><rect x="463" y="552" width="1" height="1" fill="#00dc00"/><rect x="464" y="555" width="1" height="2" fill="#00dc00"/><rect x="465" y="555" width="1" height="2" fill="#00dc00"/><rect x="466" y="551" width="1" height="2" fill="#00dc00"/><rect x="467" y="555" width="1" height="2" fill="#00dc00"/><rect x="467" y="552" width="1" height="1" fill="#00dc00"/><rect x="468" y="555" width="1" height="2" fill="#00dc00"/><rect x="468" y="549" width="1" height="4" fill="#00dc00"/><rect x="469" y="551" width="1" height="2" fill="#00dc00"/><rect x="470" y="555" width="1" height="2" fill="#00dc00"/><rect x="470" y="552" width="1" height="1" fill="#00dc00"/><rect x="471" y="555" width="1" height="2" fill="#00dc00"/><rect x="474" y="551" width="1" height="2" fill="#00dc00"/><rect x="475" y="555" width="1" height="2" fill="#00dc00"/><rect x="475" y="551" width="1" height="2" fill="#00dc00"/><rect x="476" y="555" width="1" height="2" fill="#00dc00"/><rect x="476" y="551" width="1" height="2" fill="#00dc00"/><rect x="477" y="549" width="1" height="4" fill="#00dc00"/><rect x="478" y="555" width="1" height="2" fill="#00dc00"/><rect x="478" y="551" width="1" height="2" fill="#00dc00"/><rect x="480" y="555" width="1" height="1" fill="#00dc00"/><rect x="480" y="552" width="1" height="1" fill="#00dc00"/><rect x="481" y="555" width="1" height="2" fill="#00dc00"/><rect x="481" y="552" width="1" height="1" fill="#00dc00"/><rect x="482" y="552" width="1" height="1" fill="#00dc00"/><rect x="485" y="555" width="1" height="2" fill="#00dc00"/><rect x="485" y="551" width="1" height="2" fill="#00dc00"/><rect x="490" y="551" width="1" height="2" fill="#00dc00"/><rect x="491" y="555" width="1" height="2" fill="#00dc00"/><rect x="492" y="555" width="1" height="4" fill="#00dc00"/><rect x="492" y="551" width="1" height="2" fill="#00dc00"/><rect x="493" y="551" width="1" height="2" fill="#00dc00"/><rect x="494" y="551" width="1" height="2" fill="#00dc00"/><rect x="495" y="555" width="1" height="2" fill="#00dc00"/><rect x="495" y="551" width="1" height="2" fill="#00dc00"/><rect x="496" y="555" width="1" height="1" fill="#00dc00"/><rect x="496" y="550" width="1" height="3" fill="#00dc00"/><rect x="498" y="552" width="1" height="1" fill="#00dc00"/><rect x="499" y="555" width="1" height="1" fill="#00dc00"/><rect x="501" y="555" width="1" height="1" fill="#00dc00"/><rect x="502" y="555" width="1" height="1" fill="#00dc00"/><rect x="503" y="555" width="1" height="2" fill="#00dc00"/><rect x="504" y="551" width="1" height="2" fill="#00dc00"/><rect x="508" y="555" width="1" height="1" fill="#00dc00"/><rect x="508" y="552" width="1" height="1" fill="#00dc00"/><rect x="509" y="551" width="1" height="2" fill="#00dc00"/><rect x="510" y="551" width="1" height="2" fill="#00dc00"/><rect x="511" y="551" width="1" height="2" fill="#00dc00"/><rect x="512" y="555" width="1" height="2" fill="#00dc00"/><rect x="512" y="552" width="1" height="1" fill="#00dc00"/><rect x="513" y="550" width="1" height="3" fill="#00dc00"/><rect x="515" y="551" width="1" height="2" fill="#00dc00"/><rect x="517" y="552" width="1" height="1" fill="#00dc00"/><rect x="520" y="551" width="1" height="2" fill="#00dc00"/><rect x="522" y="555" width="1" height="1" fill="#00dc00"/><rect x="522" y="551" width="1" height="2" fill="#00dc00"/><rect x="523" y="555" width="1" height="1" fill="#00dc00"/><rect x="523" y="552" width="1" height="1" fill="#00dc00"/><rect x="525" y="551" width="1" height="2" fill="#00dc00"/><rect x="526" y="555" width="1" height="2" fill="#00dc00"/><rect x="526" y="551" width="1" height="2" fill="#00dc00"/><rect x="527" y="555" width="1" height="2" fill="#00dc00"/><rect x="528" y="551" width="1" height="2" fill="#00dc00"/><rect x="529" y="555" width="1" height="1" fill="#00dc00"/><rect x="529" y="551" width="1" height="2" fill="#00dc00"/><rect x="530" y="555" width="1" height="2" fill="#00dc00"/><rect x="531" y="555" width="1" height="2" fill="#00dc00"/><rect x="532" y="555" width="1" height="1" fill="#00dc00"/><rect x="533" y="555" width="1" height="1" fill="#00dc00"/><rect x="533" y="551" width="1" height="2" fill="#00dc00"/><rect x="536" y="555" width="1" height="2" fill="#00dc00"/><rect x="536" y="550" width="1" height="3" fill="#00dc00"/><rect x="537" y="555" width="1" height="4" fill="#00dc00"/><rect x="537" y="551" width="1" height="2" fill="#00dc00"/><rect x="538" y="555" width="1" height="2" fill="#00dc00"/><rect x="538" y="552" width="1" height="1" fill="#00dc00"/><rect x="539" y="555" width="1" height="1" fill="#00dc00"/><rect x="539" y="551" width="1" height="2" fill="#00dc00"/><rect x="541" y="486" width="144" height="3" fill="#00dc00"/><rect x="542" y="489" width="1" height="3" fill="#00dc00"/><rect x="544" y="489" width="1" height="2" fill="#00dc00"/><rect x="544" y="484" width="1" height="2" fill="#00dc00"/><rect x="545" y="489" width="1" height="2" fill="#00dc00"/><rect x="546" y="489" width="1" height="2" fill="#00dc00"/><rect x="546" y="484" width="1" height="2" fill="#00dc00"/><rect x="547" y="489" width="1" height="1" fill="#00dc00"/><rect x="547" y="484" width="1" height="2" fill="#00dc00"/><rect x="549" y="489" width="1" height="1" fill="#00dc00"/><rect x="551" y="489" width="1" height="2" fill="#00dc00"/><rect x="552" y="484" width="1" height="2" fill="#00dc00"/><rect x="553" y="489" width="1" height="2" fill="#00dc00"/><rect x="553" y="484" width="1" height="2" fill="#00dc00"/><rect x="555" y="489" width="1" height="1" fill="#00dc00"/><rect x="557" y="485" width="1" height="1" fill="#00dc00"/><rect x="560" y="489" width="1" height="2" fill="#00dc00"/><rect x="562" y="489" width="1" height="2" fill="#00dc00"/><rect x="562" y="484" width="1" height="2" fill="#00dc00"/><rect x="563" y="489" width="1" height="2" fill="#00dc00"/><rect x="563" y="484" width="1" height="2" fill="#00dc00"/><rect x="564" y="489" width="1" height="1" fill="#00dc00"/><rect x="565" y="485" width="1" height="1" fill="#00dc00"/><rect x="566" y="489" width="1" height="4" fill="#00dc00"/><rect x="567" y="489" width="1" height="1" fill="#00dc00"/><rect x="567" y="484" width="1" height="2" fill="#00dc00"/><rect x="568" y="489" width="1" height="2" fill="#00dc00"/><rect x="568" y="484" width="1" height="2" fill="#00dc00"/><rect x="569" y="489" width="1" height="1" fill="#00dc00"/><rect x="569" y="484" width="1" height="2" fill="#00dc00"/><rect x="571" y="484" width="1" height="2" fill="#00dc00"/><rect x="572" y="489" width="1" height="1" fill="#00dc00"/><rect x="572" y="484" width="1" height="2" fill="#00dc00"/><rect x="574" y="489" width="1" height="2" fill="#00dc00"/><rect x="574" y="485" width="1" height="1" fill="#00dc00"/><rect x="576" y="489" width="1" height="1" fill="#00dc00"/><rect x="576" y="485" width="1" height="1" fill="#00dc00"/><rect x="582" y="489" width="1" height="2" fill="#00dc00"/><rect x="584" y="485" width="1" height="1" fill="#00dc00"/><rect x="585" y="489" width="1" height="2" fill="#00dc00"/><rect x="586" y="489" width="1" height="1" fill="#00dc00"/><rect x="587" y="484" width="1" height="2" fill="#00dc00"/><rect x="588" y="489" width="1" height="2" fill="#00dc00"/><rect x="589" y="483" width="1" height="3" fill="#00dc00"/><rect x="593" y="489" width="1" height="2" fill="#00dc00"/><rect x="594" y="489" width="1" height="1" fill="#00dc00"/><rect x="594" y="485" width="1" height="1" fill="#00dc00"/><rect x="597" y="489" width="1" height="2" fill="#00dc00"/><rect x="598" y="489" width="1" height="2" fill="#00dc00"/><rect x="600" y="489" width="1" height="2" fill="#00dc00"/><rect x="601" y="489" width="1" height="4" fill="#00dc00"/><rect x="602" y="489" width="1" height="2" fill="#00dc00"/><rect x="602" y="483" width="1" height="3" fill="#00dc00"/><rect x="604" y="489" width="1" height="2" fill="#00dc00"/><rect x="605" y="489" width="1" height="3" fill="#00dc00"/><rect x="606" y="484" width="1" height="2" fill="#00dc00"/><rect x="607" y="484" width="1" height="2" fill="#00dc00"/><rect x="608" y="489" width="1" height="2" fill="#00dc00"/><rect x="610" y="484" width="1" height="2" fill="#00dc00"/><rect x="612" y="489" width="1" height="1" fill="#00dc00"/><rect x="614" y="489" width="1" height="1" fill="#00dc00"/><rect x="615" y="489" width="1" height="3" fill="#00dc00"/><rect x="615" y="484" width="1" height="2" fill="#00dc00"/><rect x="616" y="489" width="1" height="1" fill="#00dc00"/><rect x="617" y="489" width="1" height="2" fill="#00dc00"/><rect x="618" y="489" width="1" height="1" fill="#00dc00"/><rect x="618" y="484" width="1" height="2" fill="#00dc00"/><rect x="619" y="483" width="1" height="3" fill="#00dc00"/><rect x="620" y="489" width="1" height="4" fill="#00dc00"/><rect x="620" y="483" width="1" height="3" fill="#00dc00"/><rect x="621" y="489" width="1" height="2" fill="#00dc00"/><rect x="621" y="483" width="1" height="3" fill="#00dc00"/><rect x="622" y="489" width="1" height="2" fill="#00dc00"/><rect x="623" y="489" width="1" height="1" fill="#00dc00"/><rect x="624" y="489" width="1" height="1" fill="#00dc00"/><rect x="624" y="484" width="1" height="2" fill="#00dc00"/><rect x="626" y="489" width="1" height="3" fill="#00dc00"/><rect x="628" y="489" width="1" height="2" fill="#00dc00"/><rect x="630" y="489" width="1" height="2" fill="#00dc00"/><rect x="631" y="489" width="1" height="2" fill="#00dc00"/><rect x="632" y="484" width="1" height="2" fill="#00dc00"/><rect x="633" y="484" width="1" height="2" fill="#00dc00"/><rect x="634" y="484" width="1" height="2" fill="#00dc00"/><rect x="635" y="489" width="1" height="2" fill="#00dc00"/><rect x="636" y="489" width="1" height="1" fill="#00dc00"/><rect x="637" y="489" width="1" height="2" fill="#00dc00"/><rect x="637" y="484" width="1" height="2" fill="#00dc00"/><rect x="638" y="483" width="1" height="3" fill="#00dc00"/><rect x="639" y="489" width="1" height="2" fill="#00dc00"/><rect x="639" y="484" width="1" height="2" fill="#00dc00"/><rect x="640" y="489" width="1" height="2" fill="#00dc00"/><rect x="641" y="484" width="1" height="2" fill="#00dc00"/><rect x="642" y="489" width="1" height="2" fill="#00dc00"/><rect x="642" y="484" width="1" height="2" fill="#00dc00"/><rect x="643" y="485" width="1" height="1" fill="#00dc00"/><rect x="645" y="485" width="1" height="1" fill="#00dc00"/><rect x="647" y="485" width="1" height="1" fill="#00dc00"/><rect x="649" y="489" width="1" height="2" fill="#00dc00"/><rect x="649" y="484" width="1" height="2" fill="#00dc00"/><rect x="650" y="489" width="1" height="2" fill="#00dc00"/><rect x="650" y="484" width="1" height="2" fill="#00dc00"/><rect x="655" y="489" width="1" height="1" fill="#00dc00"/><rect x="656" y="489" width="1" height="1" fill="#00dc00"/><rect x="658" y="484" width="1" height="2" fill="#00dc00"/><rect x="659" y="489" width="1" height="1" fill="#00dc00"/><rect x="659" y="484" width="1" height="2" fill="#00dc00"/><rect x="660" y="489" width="1" height="2" fill="#00dc00"/><rect x="660" y="485" width="1" height="1" fill="#00dc00"/><rect x="661" y="489" width="1" height="1" fill="#00dc00"/><rect x="664" y="489" width="1" height="2" fill="#00dc00"/><rect x="664" y="484" width="1" height="2" fill="#00dc00"/><rect x="665" y="483" width="1" height="3" fill="#00dc00"/><rect x="666" y="489" width="1" height="1" fill="#00dc00"/><rect x="667" y="484" width="1" height="2" fill="#00dc00"/><rect x="668" y="489" width="1" height="1" fill="#00dc00"/><rect x="668" y="485" width="1" height="1" fill="#00dc00"/><rect x="669" y="489" width="1" height="4" fill="#00dc00"/><rect x="669" y="485" width="1" height="1" fill="#00dc00"/><rect x="670" y="489" width="1" height="1" fill="#00dc00"/><rect x="670" y="484" width="1" height="2" fill="#00dc00"/><rect x="671" y="489" width="1" height="2" fill="#00dc00"/><rect x="671" y="485" width="1" height="1" fill="#00dc00"/><rect x="672" y="489" width="1" height="2" fill="#00dc00"/><rect x="672" y="485" width="1" height="1" fill="#00dc00"/><rect x="674" y="489" width="1" height="1" fill="#00dc00"/><rect x="675" y="489" width="1" height="3" fill="#00dc00"/><rect x="675" y="484" width="1" height="2" fill="#00dc00"/><rect x="676" y="489" width="1" height="2" fill="#00dc00"/><rect x="676" y="485" width="1" height="1" fill="#00dc00"/><rect x="677" y="489" width="1" height="1" fill="#00dc00"/><rect x="677" y="483" width="1" height="3" fill="#00dc00"/><rect x="681" y="489" width="1" height="1" fill="#00dc00"/><rect x="683" y="489" width="1" height="2" fill="#00dc00"/><rect x="683" y="484" width="1" height="2" fill="#00dc00"/><rect x="685" y="553" width="142" height="2" fill="#00dc00"/><rect x="686" y="550" width="1" height="3" fill="#00dc00"/><rect x="688" y="555" width="1" height="2" fill="#00dc00"/><rect x="688" y="550" width="1" height="3" fill="#00dc00"/><rect x="689" y="555" width="1" height="2" fill="#00dc00"/><rect x="689" y="552" width="1" height="1" fill="#00dc00"/><rect x="691" y="552" width="1" height="1" fill="#00dc00"/><rect x="692" y="551" width="1" height="2" fill="#00dc00"/><rect x="693" y="555" width="1" height="3" fill="#00dc00"/><rect x="694" y="550" width="1" height="3" fill="#00dc00"/><rect x="695" y="555" width="1" height="2" fill="#00dc00"/><rect x="695" y="551" width="1" height="2" fill="#00dc00"/><rect x="697" y="551" width="1" height="2" fill="#00dc00"/><rect x="698" y="555" width="1" height="2" fill="#00dc00"/><rect x="698" y="551" width="1" height="2" fill="#00dc00"/><rect x="700" y="555" width="1" height="2" fill="#00dc00"/><rect x="700" y="549" width="1" height="4" fill="#00dc00"/><rect x="701" y="555" width="1" height="2" fill="#00dc00"/><rect x="703" y="555" width="1" height="4" fill="#00dc00"/><rect x="703" y="551" width="1" height="2" fill="#00dc00"/><rect x="704" y="555" width="1" height="1" fill="#00dc00"/><rect x="705" y="551" width="1" height="2" fill="#00dc00"/><rect x="706" y="555" width="1" height="1" fill="#00dc00"/><rect x="707" y="555" width="1" height="2" fill="#00dc00"/><rect x="707" y="551" width="1" height="2" fill="#00dc00"/><rect x="709" y="555" width="1" height="3" fill="#00dc00"/><rect x="710" y="555" width="1" height="2" fill="#00dc00"/><rect x="711" y="555" width="1" height="2" fill="#00dc00"/><rect x="712" y="552" width="1" height="1" fill="#00dc00"/><rect x="713" y="551" width="1" height="2" fill="#00dc00"/><rect x="715" y="555" width="1" height="2" fill="#00dc00"/><rect x="716" y="555" width="1" height="3" fill="#00dc00"/><rect x="717" y="555" width="1" height="2" fill="#00dc00"/><rect x="717" y="551" width="1" height="2" fill="#00dc00"/><rect x="718" y="552" width="1" height="1" fill="#00dc00"/><rect x="719" y="555" width="1" height="2" fill="#00dc00"/><rect x="719" y="550" width="1" height="3" fill="#00dc00"/><rect x="720" y="555" width="1" height="2" fill="#00dc00"/><rect x="721" y="555" width="1" height="2" fill="#00dc00"/><rect x="721" y="551" width="1" height="2" fill="#00dc00"/><rect x="722" y="555" width="1" height="2" fill="#00dc00"/><rect x="725" y="552" width="1" height="1" fill="#00dc00"/><rect x="726" y="555" width="1" height="2" fill="#00dc00"/><rect x="727" y="555" width="1" height="2" fill="#00dc00"/><rect x="728" y="552" width="1" height="1" fill="#00dc00"/><rect x="730" y="555" width="1" height="1" fill="#00dc00"/><rect x="732" y="555" width="1" height="4" fill="#00dc00"/><rect x="733" y="555" width="1" height="2" fill="#00dc00"/><rect x="734" y="555" width="1" height="2" fill="#00dc00"/><rect x="736" y="555" width="1" height="2" fill="#00dc00"/><rect x="737" y="550" width="1" height="3" fill="#00dc00"/><rect x="739" y="555" width="1" height="2" fill="#00dc00"/><rect x="739" y="551" width="1" height="2" fill="#00dc00"/><rect x="740" y="549" width="1" height="4" fill="#00dc00"/><rect x="741" y="555" width="1" height="2" fill="#00dc00"/><rect x="741" y="551" width="1" height="2" fill="#00dc00"/><rect x="743" y="555" width="1" height="2" fill="#00dc00"/><rect x="743" y="550" width="1" height="3" fill="#00dc00"/><rect x="744" y="555" width="1" height="2" fill="#00dc00"/><rect x="745" y="551" width="1" height="2" fill="#00dc00"/><rect x="746" y="552" width="1" height="1" fill="#00dc00"/><rect x="747" y="551" width="1" height="2" fill="#00dc00"/><rect x="748" y="551" width="1" height="2" fill="#00dc00"/><rect x="749" y="555" width="1" height="1" fill="#00dc00"/><rect x="749" y="552" width="1" height="1" fill="#00dc00"/><rect x="750" y="555" width="1" height="2" fill="#00dc00"/><rect x="752" y="555" width="1" height="2" fill="#00dc00"/><rect x="752" y="551" width="1" height="2" fill="#00dc00"/><rect x="754" y="551" width="1" height="2" fill="#00dc00"/><rect x="755" y="555" width="1" height="2" fill="#00dc00"/><rect x="756" y="551" width="1" height="2" fill="#00dc00"/><rect x="757" y="551" width="1" height="2" fill="#00dc00"/><rect x="758" y="555" width="1" height="2" fill="#00dc00"/><rect x="759" y="555" width="1" height="3" fill="#00dc00"/><rect x="759" y="550" width="1" height="3" fill="#00dc00"/><rect x="760" y="552" width="1" height="1" fill="#00dc00"/><rect x="761" y="555" width="1" height="3" fill="#00dc00"/><rect x="763" y="555" width="1" height="2" fill="#00dc00"/><rect x="763" y="551" width="1" height="2" fill="#00dc00"/><rect x="767" y="555" width="1" height="1" fill="#00dc00"/><rect x="767" y="551" width="1" height="2" fill="#00dc00"/><rect x="768" y="555" width="1" height="2" fill="#00dc00"/><rect x="768" y="552" width="1" height="1" fill="#00dc00"/><rect x="769" y="555" width="1" height="2" fill="#00dc00"/><rect x="770" y="555" width="1" height="2" fill="#00dc00"/><rect x="771" y="555" width="1" height="1" fill="#00dc00"/><rect x="772" y="555" width="1" height="1" fill="#00dc00"/><rect x="772" y="551" width="1" height="2" fill="#00dc00"/><rect x="773" y="555" width="1" height="2" fill="#00dc00"/><rect x="773" y="550" width="1" height="3" fill="#00dc00"/><rect x="775" y="555" width="1" height="2" fill="#00dc00"/><rect x="775" y="552" width="1" height="1" fill="#00dc00"/><rect x="776" y="555" width="1" height="2" fill="#00dc00"/><rect x="777" y="555" width="1" height="2" fill="#00dc00"/><rect x="778" y="551" width="1" height="2" fill="#00dc00"/><rect x="779" y="555" width="1" height="2" fill="#00dc00"/><rect x="781" y="551" width="1" height="2" fill="#00dc00"/><rect x="782" y="555" width="1" height="2" fill="#00dc00"/><rect x="783" y="555" width="1" height="4" fill="#00dc00"/><rect x="784" y="555" width="1" height="3" fill="#00dc00"/><rect x="784" y="551" width="1" height="2" fill="#00dc00"/><rect x="785" y="555" width="1" height="1" fill="#00dc00"/><rect x="786" y="549" width="1" height="4" fill="#00dc00"/><rect x="787" y="555" width="1" height="2" fill="#00dc00"/><rect x="788" y="555" width="1" height="2" fill="#00dc00"/><rect x="788" y="552" width="1" height="1" fill="#00dc00"/><rect x="789" y="555" width="1" height="2" fill="#00dc00"/><rect x="790" y="555" width="1" height="2" fill="#00dc00"/><rect x="790" y="551" width="1" height="2" fill="#00dc00"/><rect x="793" y="555" width="1" height="1" fill="#00dc00"/><rect x="794" y="550" width="1" height="3" fill="#00dc00"/><rect x="795" y="551" width="1" height="2" fill="#00dc00"/><rect x="796" y="551" width="1" height="2" fill="#00dc00"/><rect x="797" y="555" width="1" height="4" fill="#00dc00"/><rect x="798" y="555" width="1" height="2" fill="#00dc00"/><rect x="799" y="551" width="1" height="2" fill="#00dc00"/><rect x="801" y="555" width="1" height="3" fill="#00dc00"/><rect x="802" y="555" width="1" height="2" fill="#00dc00"/><rect x="804" y="552" width="1" height="1" fill="#00dc00"/><rect x="806" y="555" width="1" height="1" fill="#00dc00"/><rect x="807" y="555" width="1" height="2" fill="#00dc00"/><rect x="807" y="552" width="1" height="1" fill="#00dc00"/><rect x="808" y="555" width="1" height="2" fill="#00dc00"/><rect x="810" y="551" width="1" height="2" fill="#00dc00"/><rect x="812" y="555" width="1" height="3" fill="#00dc00"/><rect x="812" y="551" width="1" height="2" fill="#00dc00"/><rect x="814" y="555" width="1" height="2" fill="#00dc00"/><rect x="815" y="555" width="1" height="2" fill="#00dc00"/><rect x="815" y="551" width="1" height="2" fill="#00dc00"/><rect x="818" y="555" width="1" height="2" fill="#00dc00"/><rect x="818" y="551" width="1" height="2" fill="#00dc00"/><rect x="819" y="555" width="1" height="2" fill="#00dc00"/><rect x="820" y="551" width="1" height="2" fill="#00dc00"/><rect x="821" y="551" width="1" height="2" fill="#00dc00"/><rect x="822" y="555" width="1" height="2" fill="#00dc00"/><rect x="822" y="551" width="1" height="2" fill="#00dc00"/><rect x="823" y="551" width="1" height="2" fill="#00dc00"/><rect x="824" y="555" width="1" height="3" fill="#00dc00"/><rect x="825" y="555" width="1" height="1" fill="#00dc00"/><rect x="827" y="486" width="121" height="3" fill="#00dc00"/><rect x="828" y="489" width="1" height="1" fill="#00dc00"/><rect x="829" y="489" width="1" height="2" fill="#00dc00"/><rect x="830" y="489" width="1" height="2" fill="#00dc00"/><rect x="832" y="489" width="1" height="1" fill="#00dc00"/><rect x="833" y="489" width="1" height="1" fill="#00dc00"/><rect x="833" y="484" width="1" height="2" fill="#00dc00"/><rect x="834" y="489" width="1" height="2" fill="#00dc00"/><rect x="834" y="484" width="1" height="2" fill="#00dc00"/><rect x="835" y="484" width="1" height="2" fill="#00dc00"/><rect x="836" y="489" width="1" height="4" fill="#00dc00"/><rect x="837" y="489" width="1" height="2" fill="#00dc00"/><rect x="837" y="483" width="1" height="3" fill="#00dc00"/><rect x="838" y="484" width="1" height="2" fill="#00dc00"/><rect x="839" y="489" width="1" height="1" fill="#00dc00"/><rect x="839" y="483" width="1" height="3" fill="#00dc00"/><rect x="841" y="484" width="1" height="2" fill="#00dc00"/><rect x="843" y="484" width="1" height="2" fill="#00dc00"/><rect x="844" y="489" width="1" height="2" fill="#00dc00"/><rect x="845" y="484" width="1" height="2" fill="#00dc00"/><rect x="846" y="489" width="1" height="1" fill="#00dc00"/><rect x="847" y="489" width="1" height="2" fill="#00dc00"/><rect x="848" y="489" width="1" height="2" fill="#00dc00"/><rect x="849" y="489" width="1" height="3" fill="#00dc00"/><rect x="849" y="485" width="1" height="1" fill="#00dc00"/><rect x="851" y="484" width="1" height="2" fill="#00dc00"/><rect x="852" y="484" width="1" height="2" fill="#00dc00"/><rect x="854" y="489" width="1" height="2" fill="#00dc00"/><rect x="855" y="489" width="1" height="1" fill="#00dc00"/><rect x="856" y="489" width="1" height="2" fill="#00dc00"/><rect x="857" y="489" width="1" height="2" fill="#00dc00"/><rect x="857" y="484" width="1" height="2" fill="#00dc00"/><rect x="858" y="489" width="1" height="2" fill="#00dc00"/><rect x="859" y="489" width="1" height="1" fill="#00dc00"/><rect x="859" y="484" width="1" height="2" fill="#00dc00"/><rect x="860" y="489" width="1" height="1" fill="#00dc00"/><rect x="860" y="484" width="1" height="2" fill="#00dc00"/><rect x="861" y="484" width="1" height="2" fill="#00dc00"/><rect x="862" y="489" width="1" height="1" fill="#00dc00"/><rect x="863" y="489" width="1" height="2" fill="#00dc00"/><rect x="863" y="483" width="1" height="3" fill="#00dc00"/><rect x="864" y="489" width="1" height="2" fill="#00dc00"/><rect x="866" y="489" width="1" height="2" fill="#00dc00"/><rect x="867" y="489" width="1" height="2" fill="#00dc00"/><rect x="867" y="484" width="1" height="2" fill="#00dc00"/><rect x="868" y="485" width="1" height="1" fill="#00dc00"/><rect x="870" y="483" width="1" height="3" fill="#00dc00"/><rect x="873" y="489" width="1" height="2" fill="#00dc00"/><rect x="873" y="485" width="1" height="1" fill="#00dc00"/><rect x="874" y="489" width="1" height="1" fill="#00dc00"/><rect x="876" y="489" width="1" height="2" fill="#00dc00"/><rect x="877" y="489" width="1" height="2" fill="#00dc00"/><rect x="877" y="485" width="1" height="1" fill="#00dc00"/><rect x="878" y="489" width="1" height="2" fill="#00dc00"/><rect x="878" y="485" width="1" height="1" fill="#00dc00"/><rect x="879" y="489" width="1" height="4" fill="#00dc00"/><rect x="879" y="483" width="1" height="3" fill="#00dc00"/><rect x="881" y="484" width="1" height="2" fill="#00dc00"/><rect x="882" y="489" width="1" height="1" fill="#00dc00"/><rect x="882" y="485" width="1" height="1" fill="#00dc00"/><rect x="883" y="485" width="1" height="1" fill="#00dc00"/><rect x="885" y="489" width="1" height="2" fill="#00dc00"/><rect x="885" y="484" width="1" height="2" fill="#00dc00"/><rect x="886" y="483" width="1" height="3" fill="#00dc00"/><rect x="887" y="489" width="1" height="2" fill="#00dc00"/><rect x="889" y="489" width="1" height="4" fill="#00dc00"/><rect x="891" y="489" width="1" height="1" fill="#00dc00"/><rect x="891" y="485" width="1" height="1" fill="#00dc00"/><rect x="892" y="484" width="1" height="2" fill="#00dc00"/><rect x="893" y="489" width="1" height="2" fill="#00dc00"/><rect x="894" y="489" width="1" height="2" fill="#00dc00"/><rect x="895" y="489" width="1" height="2" fill="#00dc00"/><rect x="895" y="484" width="1" height="2" fill="#00dc00"/><rect x="896" y="489" width="1" height="3" fill="#00dc00"/><rect x="898" y="489" width="1" height="1" fill="#00dc00"/><rect x="899" y="489" width="1" height="1" fill="#00dc00"/><rect x="902" y="489" width="1" height="2" fill="#00dc00"/><rect x="903" y="489" width="1" height="2" fill="#00dc00"/><rect x="906" y="489" width="1" height="2" fill="#00dc00"/><rect x="906" y="483" width="1" height="3" fill="#00dc00"/><rect x="907" y="489" width="1" height="2" fill="#00dc00"/><rect x="908" y="489" width="1" height="2" fill="#00dc00"/><rect x="909" y="489" width="1" height="2" fill="#00dc00"/><rect x="911" y="484" width="1" height="2" fill="#00dc00"/><rect x="912" y="484" width="1" height="2" fill="#00dc00"/><rect x="913" y="489" width="1" height="2" fill="#00dc00"/><rect x="914" y="489" width="1" height="3" fill="#00dc00"/><rect x="918" y="489" width="1" height="2" fill="#00dc00"/><rect x="919" y="485" width="1" height="1" fill="#00dc00"/><rect x="920" y="489" width="1" height="1" fill="#00dc00"/><rect x="922" y="489" width="1" height="2" fill="#00dc00"/><rect x="922" y="485" width="1" height="1" fill="#00dc00"/><rect x="923" y="489" width="1" height="2" fill="#00dc00"/><rect x="924" y="489" width="1" height="2" fill="#00dc00"/><rect x="924" y="484" width="1" height="2" fill="#00dc00"/><rect x="925" y="484" width="1" height="2" fill="#00dc00"/><rect x="927" y="489" width="1" height="2" fill="#00dc00"/><rect x="928" y="484" width="1" height="2" fill="#00dc00"/><rect x="929" y="489" width="1" height="2" fill="#00dc00"/><rect x="929" y="484" width="1" height="2" fill="#00dc00"/><rect x="930" y="485" width="1" height="1" fill="#00dc00"/><rect x="931" y="489" width="1" height="2" fill="#00dc00"/><rect x="931" y="484" width="1" height="2" fill="#00dc00"/><rect x="934" y="484" width="1" height="2" fill="#00dc00"/><rect x="935" y="489" width="1" height="2" fill="#00dc00"/><rect x="935" y="484" width="1" height="2" fill="#00dc00"/><rect x="939" y="489" width="1" height="2" fill="#00dc00"/><rect x="939" y="484" width="1" height="2" fill="#00dc00"/><rect x="940" y="484" width="1" height="2" fill="#00dc00"/><rect x="941" y="489" width="1" height="2" fill="#00dc00"/><rect x="944" y="489" width="1" height="1" fill="#00dc00"/><rect x="944" y="484" width="1" height="2" fill="#00dc00"/><rect x="945" y="489" width="1" height="1" fill="#00dc00"/><rect x="945" y="485" width="1" height="1" fill="#00dc00"/><rect x="946" y="484" width="1" height="2" fill="#00dc00"/><rect x="111" y="486" width="1" height="68" fill="#00dc00"/><rect x="252" y="486" width="1" height="68" fill="#00dc00"/><rect x="398" y="486" width="1" height="68" fill="#00dc00"/><rect x="541" y="486" width="1" height="68" fill="#00dc00"/><rect x="685" y="486" width="1" height="68" fill="#00dc00"/><rect x="827" y="486" width="1" height="68" fill="#00dc00"/><rect x="40" y="489" width="1" height="6" fill="#00dc00"/><rect x="39" y="489" width="1" height="3" fill="#00dc00"/><rect x="41" y="489" width="1" height="2" fill="#00dc00"/><rect x="804" y="555" width="1" height="7" fill="#00dc00"/><rect x="803" y="555" width="1" height="3" fill="#00dc00"/><rect x="805" y="555" width="1" height="2" fill="#00dc00"/></svg>
<svg style="position:absolute;left:8px;top:417px;shape-rendering:crispEdges" width="20" height="14" viewBox="0 0 20 14"><path d="M1 1 H13 L18.5 6.5 L13 12 H1 Z" fill="#ffff00" stroke="#1a1a3a" stroke-width="0.7"/><path d="M9 3 H11 V12 H9 Z M6 5 L9 3 L9 5 L6 6 Z" fill="#000"/></svg>
<svg style="position:absolute;left:8px;top:546px;" width="20" height="14" viewBox="0 0 20 14"><path d="M1 1 H13 L18.5 6.5 L13 12 H1 Z" fill="#00e000" stroke="#1a3a1a" stroke-width="0.7"/><text x="5.3" y="11" font-family="Liberation Sans" font-weight="700" font-size="10.5" fill="#000">2</text></svg>
<svg style="position:absolute;left:951px;top:300px;shape-rendering:crispEdges" width="18" height="14" viewBox="0 0 18 14"><path d="M17.5 1 H6.5 L1 6.5 L6.5 12 H17.5 Z" fill="#ffff00" stroke="#2a2a40" stroke-width="0.6"/><path d="M9 3 H15.5 V4 H12.7 V10.5 H11.7 V4 H9 Z" fill="#000"/></svg>
<div style="position:absolute;left:28px;top:684px;width:93px;height:19px;background:#000;"></div>
<div class="t" style="left:30.3px;top:687.64px;font-size:12px;line-height:12px;color:#ffff00;font-weight:400;">CH1</div>
<svg style="position:absolute;left:57px;top:690px;" width="12" height="9" viewBox="0 0 12 9"><path d="M1 2.5 H3 M5 2.5 H7 M9 2.5 H11" stroke="#ffff00" stroke-width="1"/><path d="M1 6.5 H11" stroke="#ffff00" stroke-width="1.2"/></svg>
<div class="t" style="left:78px;top:687.64px;font-size:12px;line-height:12px;color:#ffff00;font-weight:400;">2.00V</div>
<div style="position:absolute;left:168px;top:684px;width:93px;height:19px;background:#000;"></div>
<div class="t" style="left:170.3px;top:687.64px;font-size:12px;line-height:12px;color:#00ee00;font-weight:400;">CH2</div>
<svg style="position:absolute;left:197px;top:690px;" width="12" height="9" viewBox="0 0 12 9"><path d="M1 2.5 H3 M5 2.5 H7 M9 2.5 H11" stroke="#00ee00" stroke-width="1"/><path d="M1 6.5 H11" stroke="#00ee00" stroke-width="1.2"/></svg>
<div class="t" style="left:218px;top:687.64px;font-size:12px;line-height:12px;color:#00ee00;font-weight:400;">2.00V</div>
<div style="position:absolute;left:740px;top:684px;width:209px;height:19px;background:#000;"></div>
<div class="t" style="left:742.4px;top:687.30px;font-size:12.4px;line-height:12.4px;color:#f08c20;font-weight:400;">Time: 500.0us</div>
<div class="t" style="left:839.3px;top:687.52px;font-size:12.15px;line-height:12.15px;color:#f08c20;font-weight:400;">Sample Rate: 1MHz</div>
<div style="position:absolute;left:976px;top:90px;width:4px;height:622px;background:#f4f6fe;"></div>
<div style="position:absolute;left:980px;top:89px;width:242px;height:19px;background:linear-gradient(#cbd1e0 0px,#cdd3e2 9px,#d5dce9 10px,#d9e0ec 19px);"></div>
<div style="position:absolute;left:980px;top:108px;width:242px;height:1px;background:#f2f5fc;"></div>
<div style="position:absolute;left:980px;top:109px;width:240px;height:21px;border:1px solid #a8a8a8;background:#e3e3e3"></div>
<div class="t" style="left:984.7px;top:93.10px;font-size:11.7px;line-height:11.7px;color:#000;font-weight:400;">Control Panel</div>
<svg style="position:absolute;left:1191px;top:94px;" width="9" height="10" viewBox="0 0 9 10"><path d="M2 1.5 H7 M3 1.5 V6.5 H6 V1.5 M1 6.5 H8 M4.5 6.5 V9.5" stroke="#000" stroke-width="1.3" fill="none"/></svg>
<svg style="position:absolute;left:1207px;top:94px;" width="10" height="10" viewBox="0 0 10 10"><path d="M1 1 L9 9 M9 1 L1 9" stroke="#000" stroke-width="1.6"/></svg>
<div class="t" style="left:984.7px;top:115.10px;font-size:11.7px;line-height:11.7px;color:#000;font-weight:400;">Scope</div>
<svg style="position:absolute;left:1208px;top:117px;" width="10" height="7" viewBox="0 0 10 7"><path d="M1 1 L5 5 L9 1" stroke="#444" stroke-width="1.1" fill="none"/></svg>
<div style="position:absolute;left:980px;top:132px;width:242px;height:24px;background:linear-gradient(#f1f3fc 0px,#f1f3fc 7px,#e4e6f0 11px,#d8dbe8 16px,#c6c8da 18px,#bcbed2 21px,#b4b6cc 24px);"></div>
<div style="position:absolute;left:980px;top:156px;width:226px;height:556px;background:#f0f0f0;"></div>
<div style="position:absolute;left:1206px;top:156px;width:16px;height:556px;background:#f0f0f0;"></div>
<div style="position:absolute;left:1205px;top:156px;width:1px;height:556px;background:#fafafa;"></div>
<div style="position:absolute;left:1206px;top:173px;width:15px;height:375px;background:#cdcdcd;"></div>
<svg style="position:absolute;left:1209px;top:161px;" width="9" height="8" viewBox="0 0 9 8"><path d="M1 6.3 L4.5 2.5 L8 6.3" stroke="#606060" stroke-width="2.1" fill="none"/></svg>
<svg style="position:absolute;left:1209px;top:700px;" width="9" height="8" viewBox="0 0 9 8"><path d="M1 1.7 L4.5 5.5 L8 1.7" stroke="#606060" stroke-width="2.1" fill="none"/></svg>
<div style="position:absolute;left:985px;top:168px;width:201px;height:116px;border:1px solid #dcdcdc"></div>
<div style="position:absolute;left:1060.2px;top:166px;width:54px;height:5px;background:#f0f0f0;"></div>
<div class="t" style="left:1063.2px;top:163.24px;font-size:10.7px;line-height:10.7px;color:#000;font-weight:400;">Horizontal</div>
<div style="position:absolute;left:985px;top:305px;width:201px;height:283px;border:1px solid #dcdcdc"></div>
<div style="position:absolute;left:1066.5px;top:303px;width:42px;height:5px;background:#f0f0f0;"></div>
<div class="t" style="left:1069.5px;top:300.24px;font-size:10.7px;line-height:10.7px;color:#000;font-weight:400;">Vertical</div>
<div style="position:absolute;left:985px;top:608px;width:201px;height:198px;border:1px solid #dcdcdc"></div>
<div style="position:absolute;left:1067px;top:606px;width:40.5px;height:5px;background:#f0f0f0;"></div>
<div class="t" style="left:1070px;top:603.44px;font-size:10.7px;line-height:10.7px;color:#000;font-weight:400;">Trigger</div>
<div class="t" style="left:995px;top:183.97px;font-size:10.2px;line-height:10.2px;color:#000;font-weight:400;">Time/DIV</div>
<div style="position:absolute;left:994px;top:200px;width:72px;height:20px;border:1px solid #adadad;background:#e5e5e5"></div>
<div class="t" style="left:998.5px;top:205.94px;font-size:10.7px;line-height:10.7px;color:#000;font-weight:400;">500.0us</div>
<svg style="position:absolute;left:1054px;top:208px;" width="10" height="7" viewBox="0 0 10 7"><path d="M1 1 L5 5 L9 1" stroke="#404040" stroke-width="1.1" fill="none"/></svg>
<div class="t" style="left:995px;top:233.80px;font-size:10.4px;line-height:10.4px;color:#000;font-weight:400;">Format</div>
<div style="position:absolute;left:994px;top:252px;width:72px;height:20px;border:1px solid #adadad;background:#e5e5e5"></div>
<div class="t" style="left:998.5px;top:257.94px;font-size:10.7px;line-height:10.7px;color:#000;font-weight:400;">Y-T</div>
<svg style="position:absolute;left:1054px;top:260px;" width="10" height="7" viewBox="0 0 10 7"><path d="M1 1 L5 5 L9 1" stroke="#404040" stroke-width="1.1" fill="none"/></svg>
<div style="position:absolute;left:994px;top:322px;width:11px;height:11px;border:1px solid #333;background:#fff"></div>
<svg style="position:absolute;left:994px;top:322px;" width="13" height="13" viewBox="0 0 13 13"><path d="M2.5 6.5 L5 9.5 L10.5 3" stroke="#222" stroke-width="1.3" fill="none"/></svg>
<div class="t" style="left:1010px;top:323.89px;font-size:11px;line-height:11px;color:#000;font-weight:400;transform:scaleX(0.85);transform-origin:0 0">CH1</div>
<div style="position:absolute;left:994px;top:343px;width:72px;height:20px;border:1px solid #adadad;background:#e5e5e5"></div>
<div class="t" style="left:998.5px;top:348.94px;font-size:10.7px;line-height:10.7px;color:#000;font-weight:400;">2.00V</div>
<svg style="position:absolute;left:1054px;top:351px;" width="10" height="7" viewBox="0 0 10 7"><path d="M1 1 L5 5 L9 1" stroke="#404040" stroke-width="1.1" fill="none"/></svg>
<div style="position:absolute;left:994px;top:378px;width:72px;height:20px;border:1px solid #cccccc;background:#dadada"></div>
<div class="t" style="left:998.5px;top:383.94px;font-size:10.7px;line-height:10.7px;color:#a0a0a0;font-weight:400;">DC</div>
<svg style="position:absolute;left:1054px;top:386px;" width="10" height="7" viewBox="0 0 10 7"><path d="M1 1 L5 5 L9 1" stroke="#b0b0b0" stroke-width="1.1" fill="none"/></svg>
<div style="position:absolute;left:994px;top:413px;width:72px;height:20px;border:1px solid #adadad;background:#e5e5e5"></div>
<div class="t" style="left:998.5px;top:418.94px;font-size:10.7px;line-height:10.7px;color:#000;font-weight:400;">x1</div>
<svg style="position:absolute;left:1054px;top:421px;" width="10" height="7" viewBox="0 0 10 7"><path d="M1 1 L5 5 L9 1" stroke="#404040" stroke-width="1.1" fill="none"/></svg>
<div style="position:absolute;left:1105px;top:421px;width:11px;height:11px;border:1px solid #333;background:#fff"></div>
<div class="t" style="left:1121.2px;top:422.34px;font-size:10.7px;line-height:10.7px;color:#000;font-weight:400;">Invert</div>
<div style="position:absolute;left:994px;top:462px;width:11px;height:11px;border:1px solid #333;background:#fff"></div>
<svg style="position:absolute;left:994px;top:462px;" width="13" height="13" viewBox="0 0 13 13"><path d="M2.5 6.5 L5 9.5 L10.5 3" stroke="#222" stroke-width="1.3" fill="none"/></svg>
<div class="t" style="left:1010px;top:463.89px;font-size:11px;line-height:11px;color:#000;font-weight:400;transform:scaleX(0.85);transform-origin:0 0">CH2</div>
<div style="position:absolute;left:994px;top:483px;width:72px;height:20px;border:1px solid #adadad;background:#e5e5e5"></div>
<div class="t" style="left:998.5px;top:488.94px;font-size:10.7px;line-height:10.7px;color:#000;font-weight:400;">2.00V</div>
<svg style="position:absolute;left:1054px;top:491px;" width="10" height="7" viewBox="0 0 10 7"><path d="M1 1 L5 5 L9 1" stroke="#404040" stroke-width="1.1" fill="none"/></svg>
<div style="position:absolute;left:994px;top:518px;width:72px;height:20px;border:1px solid #cccccc;background:#dadada"></div>
<div class="t" style="left:998.5px;top:523.94px;font-size:10.7px;line-height:10.7px;color:#a0a0a0;font-weight:400;">DC</div>
<svg style="position:absolute;left:1054px;top:526px;" width="10" height="7" viewBox="0 0 10 7"><path d="M1 1 L5 5 L9 1" stroke="#b0b0b0" stroke-width="1.1" fill="none"/></svg>
<div style="position:absolute;left:994px;top:553px;width:72px;height:20px;border:1px solid #adadad;background:#e5e5e5"></div>
<div class="t" style="left:998.5px;top:558.94px;font-size:10.7px;line-height:10.7px;color:#000;font-weight:400;">x1</div>
<svg style="position:absolute;left:1054px;top:561px;" width="10" height="7" viewBox="0 0 10 7"><path d="M1 1 L5 5 L9 1" stroke="#404040" stroke-width="1.1" fill="none"/></svg>
<div style="position:absolute;left:1105px;top:561px;width:11px;height:11px;border:1px solid #333;background:#fff"></div>
<div class="t" style="left:1121.2px;top:562.34px;font-size:10.7px;line-height:10.7px;color:#000;font-weight:400;">Invert</div>
<div class="t" style="left:997.9px;top:634.94px;font-size:10.7px;line-height:10.7px;color:#000;font-weight:400;">Trigger Mode</div>
<div style="position:absolute;left:1094px;top:630px;width:72px;height:20px;border:1px solid #adadad;background:#e5e5e5"></div>
<div class="t" style="left:1098.5px;top:635.94px;font-size:10.7px;line-height:10.7px;color:#000;font-weight:400;">Edge</div>
<svg style="position:absolute;left:1154px;top:638px;" width="10" height="7" viewBox="0 0 10 7"><path d="M1 1 L5 5 L9 1" stroke="#404040" stroke-width="1.1" fill="none"/></svg>
<div class="t" style="left:997.9px;top:669.86px;font-size:10.8px;line-height:10.8px;color:#000;font-weight:400;">Trigger Sweep</div>
<div style="position:absolute;left:1094px;top:665px;width:72px;height:20px;border:1px solid #adadad;background:#e5e5e5"></div>
<div class="t" style="left:1098.5px;top:670.94px;font-size:10.7px;line-height:10.7px;color:#000;font-weight:400;">AUTO</div>
<svg style="position:absolute;left:1154px;top:673px;" width="10" height="7" viewBox="0 0 10 7"><path d="M1 1 L5 5 L9 1" stroke="#404040" stroke-width="1.1" fill="none"/></svg>
<div class="t" style="left:997.9px;top:705.36px;font-size:10.8px;line-height:10.8px;color:#000;font-weight:400;">Trigger Source</div>
<div style="position:absolute;left:1094px;top:700px;width:72px;height:20px;border:1px solid #adadad;background:#e5e5e5"></div>
<div class="t" style="left:1098.5px;top:705.94px;font-size:10.7px;line-height:10.7px;color:#000;font-weight:400;">CH1</div>
<svg style="position:absolute;left:1154px;top:708px;" width="10" height="7" viewBox="0 0 10 7"><path d="M1 1 L5 5 L9 1" stroke="#404040" stroke-width="1.1" fill="none"/></svg>
<svg style="position:absolute;left:0;top:0" width="1223" height="734"><path d="M1102.34 258.10 A37 35.5 0 1 1 1154.66 258.10 L1152.54 256.33 A34 33 0 1 0 1104.46 256.33 Z" fill="#ffffff"/><path d="M1102.34 258.10 A37 35.5 0 1 1 1154.66 258.10" fill="none" stroke="#000" stroke-width="1"/><ellipse cx="1128.5" cy="233" rx="34" ry="33" fill="#d2d2d2"/><path d="M1152.54 209.67 A34 33 0 0 1 1104.46 256.33 L1128.5 233 Z" fill="#a6a6a6"/><ellipse cx="1128.5" cy="233" rx="33.5" ry="32.5" fill="none" stroke="#000" stroke-width="1"/><ellipse cx="1128.5" cy="232.7" rx="28" ry="26.5" fill="#0000c8" stroke="#000" stroke-width="1"/><path d="M1097.0 264 L1106.0 255 M1160.0 264 L1151.0 255" stroke="#000" stroke-width="1.4"/><path d="M1131 228 L1136.5 211.5" stroke="#ffffa8" stroke-width="1.5"/></svg>
<svg style="position:absolute;left:0;top:0" width="1223" height="734"><path d="M1102.34 393.10 A37 35.5 0 1 1 1154.66 393.10 L1152.54 391.33 A34 33 0 1 0 1104.46 391.33 Z" fill="#ffffff"/><path d="M1102.34 393.10 A37 35.5 0 1 1 1154.66 393.10" fill="none" stroke="#000" stroke-width="1"/><ellipse cx="1128.5" cy="368" rx="34" ry="33" fill="#d2d2d2"/><path d="M1152.54 344.67 A34 33 0 0 1 1104.46 391.33 L1128.5 368 Z" fill="#a6a6a6"/><ellipse cx="1128.5" cy="368" rx="33.5" ry="32.5" fill="none" stroke="#000" stroke-width="1"/><ellipse cx="1128.5" cy="367.7" rx="28" ry="26.5" fill="#ffff00" stroke="#000" stroke-width="1"/><path d="M1097.0 399 L1106.0 390 M1160.0 399 L1151.0 390" stroke="#000" stroke-width="1.4"/><path d="M1105 368.5 H1122" stroke="#e0e0b8" stroke-width="1.6"/></svg>
<svg style="position:absolute;left:0;top:0" width="1223" height="734"><path d="M1102.34 535.10 A37 35.5 0 1 1 1154.66 535.10 L1152.54 533.33 A34 33 0 1 0 1104.46 533.33 Z" fill="#ffffff"/><path d="M1102.34 535.10 A37 35.5 0 1 1 1154.66 535.10" fill="none" stroke="#000" stroke-width="1"/><ellipse cx="1128.5" cy="510" rx="34" ry="33" fill="#d2d2d2"/><path d="M1152.54 486.67 A34 33 0 0 1 1104.46 533.33 L1128.5 510 Z" fill="#a6a6a6"/><ellipse cx="1128.5" cy="510" rx="33.5" ry="32.5" fill="none" stroke="#000" stroke-width="1"/><ellipse cx="1128.5" cy="509.7" rx="28" ry="26.5" fill="#00ee00" stroke="#000" stroke-width="1"/><path d="M1097.0 541 L1106.0 532 M1160.0 541 L1151.0 532" stroke="#000" stroke-width="1.4"/><path d="M1105 510.5 H1122" stroke="#f8f0c0" stroke-width="1.6"/></svg>
<div style="position:absolute;left:976px;top:712px;width:246px;height:20px;background:#f0f0f0;"></div>
<div class="t" style="left:5.5px;top:718.18px;font-size:11.6px;line-height:11.6px;color:#000;font-weight:400;">Running...</div>
<div class="t" style="left:1100.5px;top:718.64px;font-size:11.06px;line-height:11.06px;color:#000;font-weight:400;">12-08-2023  14:10</div>
<svg style="position:absolute;left:1211px;top:720px;" width="11" height="12" viewBox="0 0 11 12"><g fill="#b8b8b8"><rect x="7" y="1" width="2" height="2"/><rect x="4" y="4" width="2" height="2"/><rect x="7" y="4" width="2" height="2"/><rect x="1" y="7" width="2" height="2"/><rect x="4" y="7" width="2" height="2"/><rect x="7" y="7" width="2" height="2"/></g></svg>
<div style="position:absolute;left:0px;top:0px;width:1223px;height:1px;background:#4a4a4a;"></div>
<div style="position:absolute;left:0px;top:0px;width:1px;height:734px;background:#3a3a3a;"></div>
<div style="position:absolute;left:1222px;top:0px;width:1px;height:734px;background:#3a3a3a;"></div>
<div style="position:absolute;left:1px;top:90px;width:1px;height:622px;background:#8c8c8c;"></div>
</body></html>
